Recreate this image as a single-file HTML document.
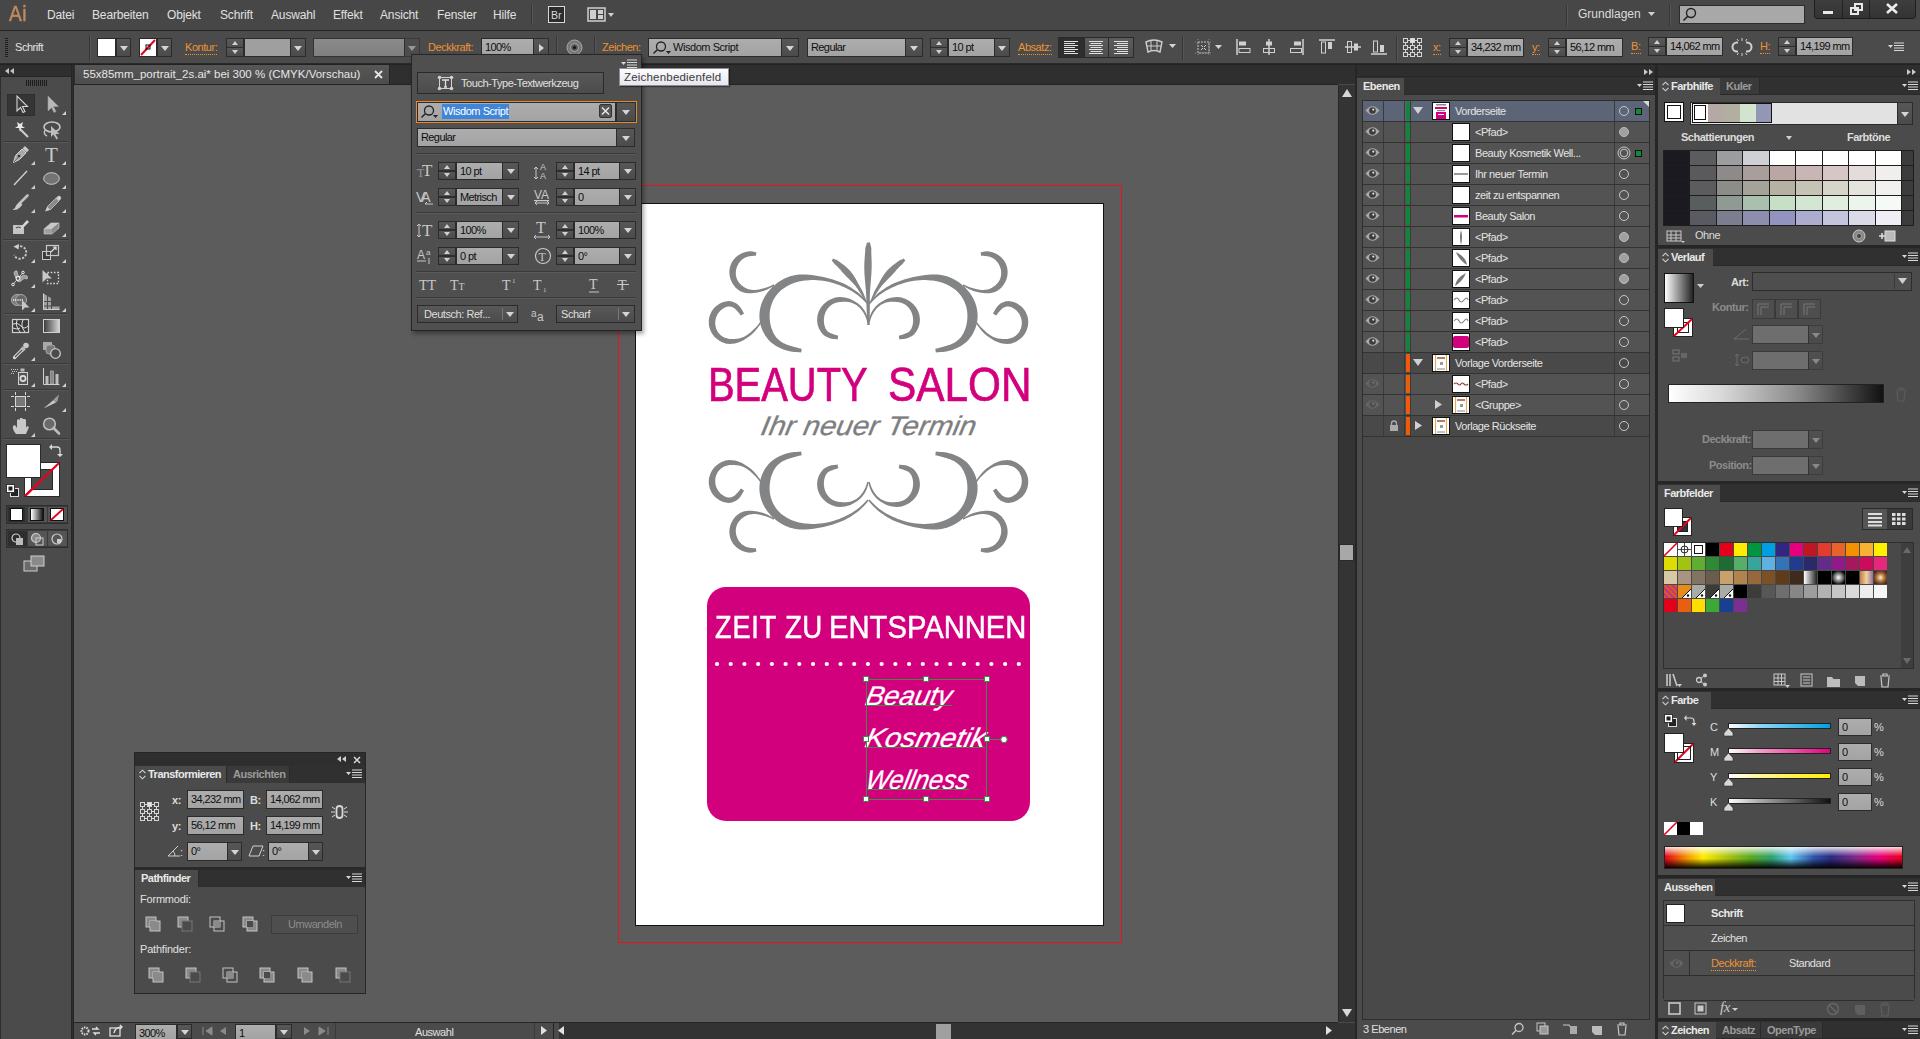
<!DOCTYPE html><html><head><meta charset="utf-8"><style>
*{margin:0;padding:0;box-sizing:border-box}
html,body{width:1920px;height:1039px;overflow:hidden;background:#4a4a4a;font-family:"Liberation Sans",sans-serif;font-size:11px;color:#dcdcdc}
.a{position:absolute}
svg.a{overflow:visible}
.t{position:absolute;white-space:nowrap;line-height:1;letter-spacing:-0.45px}
.or{color:#ee9232}
.ul{border-bottom:1px dotted #ee9232;padding-bottom:1px}
.fld{position:absolute;background:linear-gradient(#adadad,#a3a3a3);border:1px solid #2b2b2b;color:#0e0e0e;font-size:11px;white-space:nowrap;overflow:hidden;line-height:1;letter-spacing:-0.6px}
.dd{position:absolute;background:linear-gradient(#575757,#4b4b4b);border:1px solid #2b2b2b}
.dd:after{content:"";position:absolute;left:50%;top:50%;margin-left:-4px;margin-top:-2px;border-left:4px solid transparent;border-right:4px solid transparent;border-top:5px solid #d4d4d4}
.sp{position:absolute;background:linear-gradient(#595959,#505050 46%,#2e2e2e 46%,#2e2e2e 54%,#575757 54%,#4b4b4b);border:1px solid #2b2b2b}
.sp:before{content:"";position:absolute;left:50%;top:2px;margin-left:-3.5px;border-left:3.5px solid transparent;border-right:3.5px solid transparent;border-bottom:4px solid #d0d0d0}
.sp:after{content:"";position:absolute;left:50%;bottom:2px;margin-left:-3.5px;border-left:3.5px solid transparent;border-right:3.5px solid transparent;border-top:4px solid #d0d0d0}
</style></head><body><div class="a" style="left:0px;top:0px;width:1920px;height:30px;background:#474747"></div>
<div class="a" style="left:0px;top:30px;width:1920px;height:1px;background:#262626"></div>
<div class="t" style="left:9px;top:3px;font-size:22.3px;color:#c08a5e;-webkit-text-stroke:0.5px #c08a5e;letter-spacing:0.5px;transform-origin:0 0;transform:scaleX(0.86)">Ai</div>
<div class="t" style="left:47px;top:9px;font-size:12px;color:#e0e0e0;letter-spacing:-0.15px">Datei</div>
<div class="t" style="left:92px;top:9px;font-size:12px;color:#e0e0e0;letter-spacing:-0.15px">Bearbeiten</div>
<div class="t" style="left:167px;top:9px;font-size:12px;color:#e0e0e0;letter-spacing:-0.15px">Objekt</div>
<div class="t" style="left:220px;top:9px;font-size:12px;color:#e0e0e0;letter-spacing:-0.15px">Schrift</div>
<div class="t" style="left:271px;top:9px;font-size:12px;color:#e0e0e0;letter-spacing:-0.15px">Auswahl</div>
<div class="t" style="left:333px;top:9px;font-size:12px;color:#e0e0e0;letter-spacing:-0.15px">Effekt</div>
<div class="t" style="left:380px;top:9px;font-size:12px;color:#e0e0e0;letter-spacing:-0.15px">Ansicht</div>
<div class="t" style="left:437px;top:9px;font-size:12px;color:#e0e0e0;letter-spacing:-0.15px">Fenster</div>
<div class="t" style="left:493px;top:9px;font-size:12px;color:#e0e0e0;letter-spacing:-0.15px">Hilfe</div>
<div class="a" style="left:531px;top:5px;width:1px;height:20px;background:#363636"></div>
<div class="a" style="left:532px;top:5px;width:1px;height:20px;background:#565656"></div>
<div class="a" style="left:548px;top:6px;width:17px;height:17px;border:1.5px solid #d8d8d8;background:#2c2c2c"></div>
<div class="t" style="left:551px;top:10px;font-size:10.5px;color:#dcdcdc;letter-spacing:0">Br</div>
<svg class="a" style="left:587px;top:6px;" width="28" height="18" viewBox="0 0 28 18"><rect x="1" y="2" width="17" height="13" fill="none" stroke="#cfcfcf" stroke-width="1.5"/><rect x="3" y="4" width="6" height="9" fill="#cfcfcf"/><rect x="11" y="4" width="5" height="4" fill="#cfcfcf"/><rect x="11" y="9" width="5" height="4" fill="#cfcfcf"/><path d="M21 7h6l-3 4z" fill="#cfcfcf"/></svg>
<div class="a" style="left:1566px;top:5px;width:1px;height:21px;background:#363636"></div>
<div class="a" style="left:1567px;top:5px;width:1px;height:21px;background:#565656"></div>
<div class="t" style="left:1578px;top:8px;font-size:12px;color:#dcdcdc;letter-spacing:0">Grundlagen</div>
<svg class="a" style="left:1648px;top:12px;" width="8" height="5" viewBox="0 0 8 5"><path d="M0 0h7l-3.5 4z" fill="#cfcfcf"/></svg>
<div class="a" style="left:1669px;top:5px;width:1px;height:21px;background:#363636"></div>
<div class="a" style="left:1670px;top:5px;width:1px;height:21px;background:#565656"></div>
<div class="a" style="left:1679px;top:5px;width:126px;height:19px;background:#a8a8a8;border:1px solid #2c2c2c"></div>
<svg class="a" style="left:1682px;top:7px;" width="16" height="16" viewBox="0 0 16 16"><circle cx="9" cy="6" r="4.5" fill="none" stroke="#222" stroke-width="1.4"/><path d="M6 9L1.5 13.5" stroke="#222" stroke-width="1.6"/></svg>
<div class="a" style="left:1814px;top:-3px;width:102px;height:22px;background:linear-gradient(#3f3f3f,#333);border:1px solid #1e1e1e;border-radius:3px"></div>
<div class="a" style="left:1842px;top:0px;width:1px;height:18px;background:#222"></div>
<div class="a" style="left:1869px;top:0px;width:1px;height:18px;background:#222"></div>
<div class="a" style="left:1823px;top:11px;width:10px;height:3px;background:#e8e8e8"></div>
<svg class="a" style="left:1850px;top:3px;" width="14" height="12" viewBox="0 0 14 12"><rect x="1" y="5" width="7" height="6" fill="none" stroke="#e8e8e8" stroke-width="2"/><rect x="5" y="1" width="7" height="6" fill="none" stroke="#e8e8e8" stroke-width="2"/></svg>
<svg class="a" style="left:1886px;top:3px;" width="12" height="11" viewBox="0 0 12 11"><path d="M1 1L11 10M11 1L1 10" stroke="#ececec" stroke-width="2.6"/></svg>
<div class="a" style="left:0px;top:31px;width:1920px;height:33px;background:#4b4b4b"></div>
<div class="a" style="left:0px;top:63px;width:1920px;height:1px;background:#2a2a2a"></div>
<div class="a" style="left:5px;top:38px;width:3px;height:1px;background:#1e1e1e"></div>
<div class="a" style="left:5px;top:40px;width:3px;height:1px;background:#1e1e1e"></div>
<div class="a" style="left:5px;top:42px;width:3px;height:1px;background:#1e1e1e"></div>
<div class="a" style="left:5px;top:44px;width:3px;height:1px;background:#1e1e1e"></div>
<div class="a" style="left:5px;top:46px;width:3px;height:1px;background:#1e1e1e"></div>
<div class="a" style="left:5px;top:48px;width:3px;height:1px;background:#1e1e1e"></div>
<div class="a" style="left:5px;top:50px;width:3px;height:1px;background:#1e1e1e"></div>
<div class="a" style="left:5px;top:52px;width:3px;height:1px;background:#1e1e1e"></div>
<div class="a" style="left:5px;top:54px;width:3px;height:1px;background:#1e1e1e"></div>
<div class="a" style="left:5px;top:56px;width:3px;height:1px;background:#1e1e1e"></div>
<div class="t" style="left:15px;top:42px;font-size:11px;color:#e4e4e4">Schrift</div>
<div class="a" style="left:89px;top:36px;width:1px;height:25px;background:#363636"></div>
<div class="a" style="left:90px;top:36px;width:1px;height:25px;background:#565656"></div>
<div class="a" style="left:97px;top:38px;width:19px;height:19px;background:#fff;border:1px solid #2a2a2a"></div>
<div class="dd" style="left:116px;top:38px;width:15px;height:19px;"></div>
<div class="a" style="left:139px;top:38px;width:18px;height:19px;background:#fff;border:1px solid #2a2a2a"></div>
<svg class="a" style="left:140px;top:39px;" width="16" height="17" viewBox="0 0 16 17"><path d="M1 16L15 1" stroke="#e8001c" stroke-width="2"/><rect x="6" y="6" width="4" height="4" fill="none" stroke="#111" stroke-width="1"/></svg>
<div class="dd" style="left:157px;top:38px;width:15px;height:19px;"></div>
<div class="t" style="left:185px;top:42px;color:#ee9232"><span class="ul">Kontur:</span></div>
<div class="sp" style="left:226px;top:38px;width:18px;height:19px;"></div>
<div class="fld" style="left:244px;top:38px;width:47px;height:19px;background:#9f9f9f"><span style="position:absolute;left:3px;top:3px;"></span></div>
<div class="dd" style="left:290px;top:38px;width:16px;height:19px;"></div>
<div class="fld" style="left:313px;top:38px;width:92px;height:19px;background:linear-gradient(#8a8a8a,#7f7f7f);border-color:#333"><span style="position:absolute;left:3px;top:3px;"></span></div>
<div class="dd" style="left:404px;top:38px;width:16px;height:19px;background:#4e4e4e;opacity:.55"></div>
<div class="t" style="left:428px;top:42px;color:#ee9232"><span class="ul">Deckkraft:</span></div>
<div class="fld" style="left:481px;top:38px;width:53px;height:19px;"><span style="position:absolute;left:3px;top:3px;">100%</span></div>
<div class="dd n" style="left:533px;top:38px;width:16px;height:19px"><div style="position:absolute;left:5px;top:5px;border-top:4px solid transparent;border-bottom:4px solid transparent;border-left:5px solid #d4d4d4"></div></div>
<style>.dd.r:after{display:none}</style>
<div class="a" style="left:556px;top:36px;width:1px;height:25px;background:#363636"></div>
<div class="a" style="left:557px;top:36px;width:1px;height:25px;background:#565656"></div>
<svg class="a" style="left:566px;top:39px;" width="17" height="17" viewBox="0 0 17 17"><circle cx="8.5" cy="8.5" r="7.5" fill="#777" stroke="#aaa"/><circle cx="8.5" cy="8.5" r="4" fill="#555" stroke="#bbb" stroke-width=".8"/><circle cx="8.5" cy="8.5" r="1.5" fill="#111"/></svg>
<div class="a" style="left:594px;top:36px;width:1px;height:25px;background:#363636"></div>
<div class="a" style="left:595px;top:36px;width:1px;height:25px;background:#565656"></div>
<div class="t" style="left:602px;top:42px;color:#ee9232"><span class="ul">Zeichen:</span></div>
<div class="fld" style="left:648px;top:38px;width:134px;height:19px;"><span style="position:absolute;left:3px;top:3px;"></span></div>
<svg class="a" style="left:652px;top:40px;" width="22" height="16" viewBox="0 0 22 16"><circle cx="9" cy="6.5" r="4.5" fill="none" stroke="#222" stroke-width="1.3"/><path d="M5.5 9.5L1.5 13.5" stroke="#222" stroke-width="1.5"/><path d="M14 11h5l-2.5 3z" fill="#222"/></svg>
<div class="t" style="left:673px;top:42px;color:#111">Wisdom Script</div>
<div class="dd" style="left:781px;top:38px;width:18px;height:19px;"></div>
<div class="fld" style="left:807px;top:38px;width:99px;height:19px;"><span style="position:absolute;left:3px;top:3px;">Regular</span></div>
<div class="dd" style="left:905px;top:38px;width:18px;height:19px;"></div>
<div class="sp" style="left:930px;top:38px;width:18px;height:19px;"></div>
<div class="fld" style="left:948px;top:38px;width:47px;height:19px;"><span style="position:absolute;left:3px;top:3px;">10 pt</span></div>
<div class="dd" style="left:994px;top:38px;width:16px;height:19px;"></div>
<div class="t" style="left:1018px;top:42px;color:#ee9232"><span class="ul">Absatz:</span></div>
<div class="a" style="left:1058px;top:37px;width:76px;height:21px;background:#3a3a3a;border:1px solid #2a2a2a"></div>
<div class="a" style="left:1059px;top:38px;width:25px;height:19px;background:#2e2e2e"></div>
<div class="a" style="left:1084px;top:38px;width:24px;height:19px;background:linear-gradient(#5c5c5c,#4f4f4f);border-left:1px solid #2a2a2a"></div>
<div class="a" style="left:1108px;top:38px;width:25px;height:19px;background:linear-gradient(#5c5c5c,#4f4f4f);border-left:1px solid #2a2a2a"></div>
<svg class="a" style="left:1064px;top:41px;" width="14" height="14" viewBox="0 0 14 14"><rect x="0" y="0" width="14" height="1" fill="#e0e0e0"/><rect x="0" y="2" width="11" height="1" fill="#e0e0e0"/><rect x="0" y="4" width="14" height="1" fill="#e0e0e0"/><rect x="0" y="6" width="11" height="1" fill="#e0e0e0"/><rect x="0" y="8" width="14" height="1" fill="#e0e0e0"/><rect x="0" y="10" width="11" height="1" fill="#e0e0e0"/><rect x="0" y="12" width="14" height="1" fill="#e0e0e0"/></svg>
<svg class="a" style="left:1089px;top:41px;" width="14" height="14" viewBox="0 0 14 14"><rect x="0.0" y="0" width="14" height="1" fill="#e0e0e0"/><rect x="1.5" y="2" width="11" height="1" fill="#e0e0e0"/><rect x="0.0" y="4" width="14" height="1" fill="#e0e0e0"/><rect x="1.5" y="6" width="11" height="1" fill="#e0e0e0"/><rect x="0.0" y="8" width="14" height="1" fill="#e0e0e0"/><rect x="1.5" y="10" width="11" height="1" fill="#e0e0e0"/><rect x="0.0" y="12" width="14" height="1" fill="#e0e0e0"/></svg>
<svg class="a" style="left:1114px;top:41px;" width="14" height="14" viewBox="0 0 14 14"><rect x="0" y="0" width="14" height="1" fill="#e0e0e0"/><rect x="3" y="2" width="11" height="1" fill="#e0e0e0"/><rect x="0" y="4" width="14" height="1" fill="#e0e0e0"/><rect x="3" y="6" width="11" height="1" fill="#e0e0e0"/><rect x="0" y="8" width="14" height="1" fill="#e0e0e0"/><rect x="3" y="10" width="11" height="1" fill="#e0e0e0"/><rect x="0" y="12" width="14" height="1" fill="#e0e0e0"/></svg>
<svg class="a" style="left:1144px;top:39px;" width="20" height="16" viewBox="0 0 20 16"><path d="M2 3Q10 -1 18 3L16 13Q10 10 4 13Z" fill="none" stroke="#cfcfcf" stroke-width="1.4"/><path d="M7 2v10M13 2v10M3 7h14" stroke="#cfcfcf" stroke-width="1"/></svg>
<svg class="a" style="left:1169px;top:44px;" width="8" height="6" viewBox="0 0 8 6"><path d="M0 0h7l-3.5 4z" fill="#d4d4d4"/></svg>
<div class="a" style="left:1182px;top:36px;width:1px;height:25px;background:#363636"></div>
<div class="a" style="left:1183px;top:36px;width:1px;height:25px;background:#565656"></div>
<svg class="a" style="left:1195px;top:39px;" width="30" height="17" viewBox="0 0 30 17"><rect x="3" y="3" width="11" height="11" fill="none" stroke="#bdbdbd" stroke-dasharray="2 1"/><path d="M3 0v17M14 0v17M0 3h17M0 14h17" stroke="#9a9a9a" stroke-width=".8" stroke-dasharray="1 2"/><path d="M6 6l2 2M11 6l-2 2M6 11l2-2M11 11l-2-2" stroke="#cfcfcf"/><path d="M20 6h7l-3.5 4z" fill="#d4d4d4"/></svg>
<svg class="a" style="left:1236px;top:39px;" width="16" height="17" viewBox="0 0 16 17"><path d="M1 0v16" stroke="#d0d0d0" stroke-width="1.5"/><rect x="3" y="2.5" width="7" height="4" fill="#d0d0d0"/><rect x="3" y="9.5" width="11" height="4" fill="none" stroke="#d0d0d0"/></svg>
<svg class="a" style="left:1262px;top:39px;" width="16" height="17" viewBox="0 0 16 17"><path d="M7 0v16" stroke="#d0d0d0" stroke-width="1.5"/><rect x="4" y="2.5" width="6" height="4" fill="#d0d0d0"/><rect x="1.5" y="9.5" width="11" height="4" fill="none" stroke="#d0d0d0"/></svg>
<svg class="a" style="left:1289px;top:39px;" width="16" height="17" viewBox="0 0 16 17"><path d="M14 0v16" stroke="#d0d0d0" stroke-width="1.5"/><rect x="5" y="2.5" width="7" height="4" fill="#d0d0d0"/><rect x="1.5" y="9.5" width="11" height="4" fill="none" stroke="#d0d0d0"/></svg>
<svg class="a" style="left:1319px;top:39px;" width="16" height="17" viewBox="0 0 16 17"><path d="M0 1h16" stroke="#d0d0d0" stroke-width="1.5"/><rect x="2.5" y="3" width="4" height="11" fill="none" stroke="#d0d0d0"/><rect x="9" y="3" width="4" height="7" fill="#d0d0d0"/></svg>
<svg class="a" style="left:1345px;top:39px;" width="16" height="17" viewBox="0 0 16 17"><path d="M0 8h16" stroke="#d0d0d0" stroke-width="1.5"/><rect x="2.5" y="2.5" width="4" height="11" fill="none" stroke="#d0d0d0"/><rect x="9" y="4.5" width="4" height="7" fill="#d0d0d0"/></svg>
<svg class="a" style="left:1371px;top:39px;" width="16" height="17" viewBox="0 0 16 17"><path d="M0 15h16" stroke="#d0d0d0" stroke-width="1.5"/><rect x="2.5" y="2" width="4" height="11" fill="none" stroke="#d0d0d0"/><rect x="9" y="6" width="4" height="7" fill="#d0d0d0"/></svg>
<div class="a" style="left:1396px;top:36px;width:1px;height:25px;background:#363636"></div>
<div class="a" style="left:1397px;top:36px;width:1px;height:25px;background:#565656"></div>
<svg class="a" style="left:1402px;top:37px;" width="22" height="22" viewBox="0 0 22 22"><rect x="1.5" y="1.5" width="4" height="4" fill="none" stroke="#d4d4d4"/><rect x="8.5" y="1.5" width="4" height="4" fill="#e0e0e0" stroke="#d4d4d4"/><rect x="15.5" y="1.5" width="4" height="4" fill="none" stroke="#d4d4d4"/><rect x="1.5" y="8.5" width="4" height="4" fill="none" stroke="#d4d4d4"/><rect x="8.5" y="8.5" width="4" height="4" fill="none" stroke="#d4d4d4"/><rect x="15.5" y="8.5" width="4" height="4" fill="none" stroke="#d4d4d4"/><rect x="1.5" y="15.5" width="4" height="4" fill="none" stroke="#d4d4d4"/><rect x="8.5" y="15.5" width="4" height="4" fill="none" stroke="#d4d4d4"/><rect x="15.5" y="15.5" width="4" height="4" fill="none" stroke="#d4d4d4"/><path d="M5.5 3.5h3M12.5 3.5h3M5.5 10.5h3M12.5 10.5h3M5.5 17.5h3M12.5 17.5h3M3.5 5.5v3M3.5 12.5v3M10.5 5.5v3M10.5 12.5v3M17.5 5.5v3M17.5 12.5v3" stroke="#d4d4d4"/></svg>
<div class="t" style="left:1433px;top:42px;color:#ee9232"><span class="ul">x:</span></div>
<div class="sp" style="left:1449px;top:38px;width:18px;height:19px;"></div>
<div class="fld" style="left:1467px;top:38px;width:57px;height:19px;"><span style="position:absolute;left:3px;top:3px;">34,232 mm</span></div>
<div class="t" style="left:1532px;top:42px;color:#ee9232"><span class="ul">y:</span></div>
<div class="sp" style="left:1548px;top:38px;width:18px;height:19px;"></div>
<div class="fld" style="left:1566px;top:38px;width:57px;height:19px;"><span style="position:absolute;left:3px;top:3px;">56,12 mm</span></div>
<div class="t" style="left:1631px;top:41px;color:#ee9232"><span class="ul">B:</span></div>
<div class="sp" style="left:1648px;top:37px;width:18px;height:19px;"></div>
<div class="fld" style="left:1666px;top:37px;width:57px;height:19px;"><span style="position:absolute;left:3px;top:3px;">14,062 mm</span></div>
<svg class="a" style="left:1732px;top:38px;" width="20" height="18" viewBox="0 0 20 18"><path d="M6 4.5h-1a4.5 4.5 0 0 0 0 9h1M14 4.5h1a4.5 4.5 0 0 1 0 9h-1" fill="none" stroke="#cfcfcf" stroke-width="2"/><path d="M10 0v3M10 15v3M5 1l1.5 2M15 1l-1.5 2M5 17l1.5-2M15 17l-1.5-2" stroke="#cfcfcf"/></svg>
<div class="t" style="left:1760px;top:41px;color:#ee9232"><span class="ul">H:</span></div>
<div class="sp" style="left:1778px;top:37px;width:18px;height:19px;"></div>
<div class="fld" style="left:1796px;top:37px;width:57px;height:19px;"><span style="position:absolute;left:3px;top:3px;">14,199 mm</span></div>
<svg class="a" style="left:1888px;top:42px;" width="16" height="10" viewBox="0 0 16 10"><path d="M0 3h5l-2.5 3z" fill="#d8d8d8"/><path d="M6 1h10M6 3.5h10M6 6h10M6 8.5h10" stroke="#d8d8d8" stroke-width="1.2"/></svg>
<div class="a" style="left:0px;top:64px;width:1920px;height:1px;background:#222"></div>
<div class="a" style="left:0px;top:65px;width:71px;height:974px;background:#4b4b4b"></div>
<div class="a" style="left:0px;top:65px;width:1px;height:974px;background:#2e2e2e"></div>
<div class="a" style="left:0px;top:65px;width:72px;height:12px;background:#2f2f2f"></div>
<div class="a" style="left:0px;top:76px;width:72px;height:1px;background:#262626"></div>
<svg class="a" style="left:5px;top:68px;" width="10" height="7" viewBox="0 0 10 7"><path d="M4 0v6L0 3zM9 0v6L5 3z" fill="#c4c4c4"/></svg>
<div class="a" style="left:71px;top:65px;width:3px;height:974px;background:#262626"></div>
<div class="a" style="left:72px;top:65px;width:1px;height:974px;background:#2e2e2e"></div>
<div class="a" style="left:26px;top:80px;width:1px;height:6px;background:#1c1c1c"></div>
<div class="a" style="left:28px;top:80px;width:1px;height:6px;background:#1c1c1c"></div>
<div class="a" style="left:30px;top:80px;width:1px;height:6px;background:#1c1c1c"></div>
<div class="a" style="left:32px;top:80px;width:1px;height:6px;background:#1c1c1c"></div>
<div class="a" style="left:34px;top:80px;width:1px;height:6px;background:#1c1c1c"></div>
<div class="a" style="left:36px;top:80px;width:1px;height:6px;background:#1c1c1c"></div>
<div class="a" style="left:38px;top:80px;width:1px;height:6px;background:#1c1c1c"></div>
<div class="a" style="left:40px;top:80px;width:1px;height:6px;background:#1c1c1c"></div>
<div class="a" style="left:42px;top:80px;width:1px;height:6px;background:#1c1c1c"></div>
<div class="a" style="left:44px;top:80px;width:1px;height:6px;background:#1c1c1c"></div>
<div class="a" style="left:46px;top:80px;width:1px;height:6px;background:#1c1c1c"></div>
<div class="a" style="left:7px;top:94px;width:28px;height:22px;background:#353535;border:1px solid #2e2e2e"></div>
<svg class="a" style="left:10px;top:94px;" width="21" height="21" viewBox="0 0 21 21"><path d="M7 2v15l3.5-3.5 2.5 5 2-1-2.5-5h5z" fill="#3a3a3a" stroke="#d4d4d4" stroke-width="1.1"/></svg>
<svg class="a" style="left:41px;top:94px;" width="21" height="21" viewBox="0 0 21 21"><path d="M7 2v15l3.5-3.5 2.5 5 2-1-2.5-5h5z" fill="#b8b8b8" stroke="#999" stroke-width=".6"/></svg>
<svg class="a" style="left:10px;top:119px;" width="21" height="21" viewBox="0 0 21 21"><path d="M10 10l8 8" stroke="#d0d0d0" stroke-width="2"/><path d="M7 3l1 4-3 2 4 0 1 4 1-4 4 0-3-2 1-4-3 2z" fill="#e8e8e8"/></svg>
<svg class="a" style="left:41px;top:119px;" width="21" height="21" viewBox="0 0 21 21"><ellipse cx="11" cy="8" rx="8" ry="5" fill="none" stroke="#c8c8c8" stroke-width="1.6"/><path d="M4 11q-2 4 2 6" fill="none" stroke="#c8c8c8" stroke-width="1.4"/><path d="M10 7v11l2.5-2.5 3 5 1.5-1-2.5-4.5h4z" fill="#bdbdbd"/></svg>
<svg class="a" style="left:10px;top:144px;" width="21" height="21" viewBox="0 0 21 21"><path d="M3.5 18.5l2-7 6.5-6.5 4 4-6.5 6.5z" fill="#a8a8a8" stroke="#d8d8d8" stroke-width=".9"/><circle cx="9" cy="12" r="1.3" fill="#333"/><path d="M4 18l4.5-5" stroke="#555" stroke-width=".8"/><path d="M12.5 4.5l2.5-2.5 4 4-2.5 2.5z" fill="#c8c8c8"/></svg>
<svg class="a" style="left:41px;top:144px;" width="21" height="21" viewBox="0 0 21 21"><text x="10.5" y="18" text-anchor="middle" font-family="Liberation Serif" font-size="21" fill="#c8c8c8">T</text></svg>
<svg class="a" style="left:10px;top:168px;" width="21" height="21" viewBox="0 0 21 21"><path d="M4 17L17 3" stroke="#cfcfcf" stroke-width="1.4"/></svg>
<svg class="a" style="left:41px;top:168px;" width="21" height="21" viewBox="0 0 21 21"><ellipse cx="10.5" cy="10.5" rx="7.8" ry="5.8" fill="#747474" stroke="#cfcfcf" stroke-width="1"/></svg>
<svg class="a" style="left:10px;top:192px;" width="21" height="21" viewBox="0 0 21 21"><path d="M17.5 3.5L11 10" stroke="#c0c0c0" stroke-width="2.6" stroke-linecap="round"/><path d="M9.5 9.5l3 3-2.5 3q-3 3-7.5 2.5q3-1.5 3.5-4.5z" fill="#c8c8c8"/></svg>
<svg class="a" style="left:41px;top:192px;" width="21" height="21" viewBox="0 0 21 21"><path d="M6 15l9-9 3 3-9 9z" fill="#8a8a8a" stroke="#c8c8c8" stroke-width=".8"/><path d="M15 6l1.5-1.5a2 2 0 0 1 3 3L18 9z" fill="#d0d0d0"/><path d="M6 15l3 3-5 1.5z" fill="#cfcfcf"/></svg>
<svg class="a" style="left:10px;top:216px;" width="21" height="21" viewBox="0 0 21 21"><path d="M3 9h9l2 3v6H3z" fill="#c4c4c4"/><path d="M9 13l8-9 2 2-8 8z" fill="#d8d8d8"/><path d="M6 12q2-2 5 0" stroke="#444" fill="none"/></svg>
<svg class="a" style="left:41px;top:216px;" width="21" height="21" viewBox="0 0 21 21"><path d="M3 13l7-6h8l-7 6z" fill="#c8c8c8"/><path d="M3 13h8v5H3z" fill="#a0a0a0"/><path d="M11 13l7-6v5l-7 6z" fill="#8c8c8c"/><path d="M3 13l7-6h8v5l-7 6H3z" fill="none" stroke="#d0d0d0" stroke-width=".6"/></svg>
<svg class="a" style="left:10px;top:242px;" width="21" height="21" viewBox="0 0 21 21"><path d="M6.5 5.2A6.3 6.3 0 1 1 4.2 13" fill="none" stroke="#c8c8c8" stroke-width="1.9" stroke-dasharray="2.2 1.5"/><path d="M3.5 4.5l5.5-2.5-0.5 5.5z" fill="#d0d0d0"/></svg>
<svg class="a" style="left:41px;top:242px;" width="21" height="21" viewBox="0 0 21 21"><rect x="1.5" y="9.5" width="8" height="8" fill="#3a3a3a" stroke="#c8c8c8"/><rect x="5.5" y="3.5" width="12" height="10" fill="none" stroke="#c8c8c8" stroke-width="1.2"/><path d="M10 10l5-5M12 5h3v3" stroke="#e0e0e0" fill="none" stroke-width="1.2"/></svg>
<svg class="a" style="left:10px;top:267px;" width="21" height="21" viewBox="0 0 21 21"><path d="M4 6q1-3 3-2q0 4 3 6q4-3 7-1q1 1 0 3q-3-2-5 1q-2 3-5 1z" fill="#9a9a9a" stroke="#c8c8c8" stroke-width=".8"/><path d="M3 17.5l10-12" stroke="#ddd" stroke-width=".8"/><circle cx="8" cy="11.5" r="1.9" fill="#555" stroke="#eee" stroke-width="1.1"/><circle cx="3" cy="17.5" r="1.3" fill="#555" stroke="#eee"/><circle cx="13" cy="5.5" r="1.3" fill="#555" stroke="#eee"/></svg>
<svg class="a" style="left:41px;top:267px;" width="21" height="21" viewBox="0 0 21 21"><rect x="6.5" y="5.5" width="11" height="11" fill="none" stroke="#d8d8d8" stroke-dasharray="1.6 1.6" stroke-width="1.3"/><path d="M1.5 3v12.5l4-4 5.5 0z" fill="#c8c8c8"/></svg>
<svg class="a" style="left:10px;top:291px;" width="21" height="21" viewBox="0 0 21 21"><circle cx="7" cy="9" r="5.5" fill="#7a7a7a" stroke="#aaa"/><circle cx="11" cy="9" r="5.5" fill="#666" stroke="#aaa"/><path d="M3 9h10" stroke="#f0f0f0" stroke-dasharray="1.2 1" stroke-width="1.4"/><path d="M12 9v10.5l3-3 4.5 0z" fill="#c8c8c8"/></svg>
<svg class="a" style="left:41px;top:291px;" width="21" height="21" viewBox="0 0 21 21"><path d="M2.5 2.5v16h16v-3.5h-8V7.5z" fill="#a0a0a0"/><path d="M6.5 4.5v14M10.5 7.5v11M2.5 10.5h16M2.5 15h16" stroke="#4b4b4b" stroke-width="1"/><path d="M2.5 2.5v16h16" fill="none" stroke="#d0d0d0" stroke-width="1"/></svg>
<svg class="a" style="left:10px;top:316px;" width="21" height="21" viewBox="0 0 21 21"><rect x="2.5" y="3.5" width="16" height="13" fill="#3a3a3a" stroke="#d0d0d0" stroke-width="1.2"/><path d="M3 8q5-2 8 2t7 0M7 4q-2 6 3 12M13 4q-3 6 2 12M3 12q4 2 7 0" fill="none" stroke="#e0e0e0"/></svg>
<svg class="a" style="left:41px;top:316px;" width="21" height="21" viewBox="0 0 21 21"><defs><linearGradient id="g1"><stop offset="0" stop-color="#3a3a3a"/><stop offset="1" stop-color="#d8d8d8"/></linearGradient></defs><rect x="2.5" y="3.5" width="16" height="13" fill="url(#g1)" stroke="#cfcfcf"/></svg>
<svg class="a" style="left:10px;top:340px;" width="21" height="21" viewBox="0 0 21 21"><path d="M4.5 17.5l8.5-8.5" stroke="#ddd" stroke-width="3.2" stroke-linecap="round"/><path d="M5 17l8-8" stroke="#4b4b4b" stroke-width="1.1"/><path d="M11.5 7.5l3 3" stroke="#b8b8b8" stroke-width="3.5"/><circle cx="16" cy="5.5" r="2.8" fill="#c8c8c8"/></svg>
<svg class="a" style="left:41px;top:340px;" width="21" height="21" viewBox="0 0 21 21"><rect x="2" y="2" width="9" height="8" fill="#a8a8a8"/><rect x="5" y="5" width="9" height="9" rx="3" fill="#7a7a7a" stroke="#aaa"/><circle cx="14.5" cy="13.5" r="4.8" fill="#4b4b4b" stroke="#c8c8c8" stroke-width="1.3"/></svg>
<svg class="a" style="left:10px;top:366px;" width="21" height="21" viewBox="0 0 21 21"><path d="M1 3.5h1M3 3.5h1M5 3.5h1M7 3.5h1M2 5.5h1M4 5.5h1M6 5.5h1M1 7.5h1M3 7.5h1" stroke="#ccc"/><rect x="10.5" y="2.5" width="4" height="3" fill="#bbb"/><rect x="8.5" y="6.5" width="9" height="12" fill="#555" stroke="#cfcfcf"/><circle cx="13" cy="12.5" r="2.6" fill="none" stroke="#ddd" stroke-width="1.7"/></svg>
<svg class="a" style="left:41px;top:366px;" width="21" height="21" viewBox="0 0 21 21"><path d="M2.5 2v16.5h16" fill="none" stroke="#cfcfcf"/><rect x="4.5" y="10" width="3" height="8" fill="#bdbdbd"/><rect x="9.5" y="5" width="3" height="13" fill="#888" stroke="#bbb" stroke-width=".6"/><rect x="14.5" y="8" width="3" height="10" fill="#bdbdbd"/></svg>
<svg class="a" style="left:10px;top:391px;" width="21" height="21" viewBox="0 0 21 21"><rect x="5.5" y="5.5" width="10" height="10" fill="#777" stroke="#d8d8d8"/><path d="M5.5 1v3M15.5 1v3M5.5 17v3M15.5 17v3M1 5.5h3M1 15.5h3M17 5.5h3M17 15.5h3" stroke="#d8d8d8"/></svg>
<svg class="a" style="left:41px;top:391px;" width="21" height="21" viewBox="0 0 21 21"><path d="M2.5 17.5l10-8.5 2.5 2.5z" fill="#c8c8c8"/><path d="M12.5 8.5l5.5-5-1.5 6.5-1.5 1.5z" fill="#9a9a9a"/></svg>
<svg class="a" style="left:10px;top:416px;" width="21" height="21" viewBox="0 0 21 21"><path d="M6 18q-4-5-3-8l2-1 2 3V4l2-1 1 1v6V2l2 0 1 1v7V3l2 0 1 1v8l1-2 2 1-3 7z" fill="#c8c8c8"/></svg>
<svg class="a" style="left:41px;top:416px;" width="21" height="21" viewBox="0 0 21 21"><circle cx="8.5" cy="8" r="5.8" fill="#6a6a6a" stroke="#bdbdbd" stroke-width="1.6"/><path d="M12.5 12l5.5 5.5" stroke="#bdbdbd" stroke-width="2.6" stroke-linecap="round"/></svg>
<svg class="a" style="left:62px;top:111px;" width="5" height="5" viewBox="0 0 5 5"><path d="M4 0v4H0z" fill="#d0d0d0"/></svg>
<svg class="a" style="left:31px;top:161px;" width="5" height="5" viewBox="0 0 5 5"><path d="M4 0v4H0z" fill="#d0d0d0"/></svg>
<svg class="a" style="left:62px;top:161px;" width="5" height="5" viewBox="0 0 5 5"><path d="M4 0v4H0z" fill="#d0d0d0"/></svg>
<svg class="a" style="left:31px;top:185px;" width="5" height="5" viewBox="0 0 5 5"><path d="M4 0v4H0z" fill="#d0d0d0"/></svg>
<svg class="a" style="left:62px;top:185px;" width="5" height="5" viewBox="0 0 5 5"><path d="M4 0v4H0z" fill="#d0d0d0"/></svg>
<svg class="a" style="left:31px;top:209px;" width="5" height="5" viewBox="0 0 5 5"><path d="M4 0v4H0z" fill="#d0d0d0"/></svg>
<svg class="a" style="left:62px;top:209px;" width="5" height="5" viewBox="0 0 5 5"><path d="M4 0v4H0z" fill="#d0d0d0"/></svg>
<svg class="a" style="left:62px;top:233px;" width="5" height="5" viewBox="0 0 5 5"><path d="M4 0v4H0z" fill="#d0d0d0"/></svg>
<svg class="a" style="left:31px;top:259px;" width="5" height="5" viewBox="0 0 5 5"><path d="M4 0v4H0z" fill="#d0d0d0"/></svg>
<svg class="a" style="left:62px;top:259px;" width="5" height="5" viewBox="0 0 5 5"><path d="M4 0v4H0z" fill="#d0d0d0"/></svg>
<svg class="a" style="left:31px;top:284px;" width="5" height="5" viewBox="0 0 5 5"><path d="M4 0v4H0z" fill="#d0d0d0"/></svg>
<svg class="a" style="left:31px;top:308px;" width="5" height="5" viewBox="0 0 5 5"><path d="M4 0v4H0z" fill="#d0d0d0"/></svg>
<svg class="a" style="left:62px;top:308px;" width="5" height="5" viewBox="0 0 5 5"><path d="M4 0v4H0z" fill="#d0d0d0"/></svg>
<svg class="a" style="left:31px;top:357px;" width="5" height="5" viewBox="0 0 5 5"><path d="M4 0v4H0z" fill="#d0d0d0"/></svg>
<svg class="a" style="left:31px;top:383px;" width="5" height="5" viewBox="0 0 5 5"><path d="M4 0v4H0z" fill="#d0d0d0"/></svg>
<svg class="a" style="left:62px;top:383px;" width="5" height="5" viewBox="0 0 5 5"><path d="M4 0v4H0z" fill="#d0d0d0"/></svg>
<svg class="a" style="left:62px;top:408px;" width="5" height="5" viewBox="0 0 5 5"><path d="M4 0v4H0z" fill="#d0d0d0"/></svg>
<svg class="a" style="left:31px;top:433px;" width="5" height="5" viewBox="0 0 5 5"><path d="M4 0v4H0z" fill="#d0d0d0"/></svg>
<div class="a" style="left:3px;top:141px;width:66px;height:1px;background:#3a3a3a"></div>
<div class="a" style="left:3px;top:142px;width:66px;height:1px;background:#575757"></div>
<div class="a" style="left:3px;top:239px;width:66px;height:1px;background:#3a3a3a"></div>
<div class="a" style="left:3px;top:240px;width:66px;height:1px;background:#575757"></div>
<div class="a" style="left:3px;top:313px;width:66px;height:1px;background:#3a3a3a"></div>
<div class="a" style="left:3px;top:314px;width:66px;height:1px;background:#575757"></div>
<div class="a" style="left:3px;top:363px;width:66px;height:1px;background:#3a3a3a"></div>
<div class="a" style="left:3px;top:364px;width:66px;height:1px;background:#575757"></div>
<div class="a" style="left:3px;top:389px;width:66px;height:1px;background:#3a3a3a"></div>
<div class="a" style="left:3px;top:390px;width:66px;height:1px;background:#575757"></div>
<div class="a" style="left:3px;top:438px;width:66px;height:1px;background:#3a3a3a"></div>
<div class="a" style="left:3px;top:439px;width:66px;height:1px;background:#575757"></div>
<div class="a" style="left:6px;top:444px;width:35px;height:34px;background:#fff;border:1px solid #2a2a2a"></div>
<div class="a" style="left:24px;top:462px;width:36px;height:35px;background:#fff;border:1px solid #2a2a2a"></div>
<div class="a" style="left:31px;top:469px;width:22px;height:21px;background:#4b4b4b;border:1px solid #2a2a2a"></div>
<div class="a" style="left:6px;top:444px;width:35px;height:34px;background:#fff;border:1px solid #2a2a2a"></div>
<div class="a" style="left:24px;top:478px;width:17px;height:0px;"></div>
<svg class="a" style="left:24px;top:462px;" width="36" height="35" viewBox="0 0 36 35"><path d="M1 34L35 1" stroke="#e8001c" stroke-width="2.2"/></svg>
<div class="a" style="left:6px;top:444px;width:35px;height:34px;background:#fff;border:1px solid #2a2a2a"></div>
<svg class="a" style="left:24px;top:462px;" width="36" height="35" viewBox="0 0 36 35"><path d="M1 34L17 18.5" stroke="#e8001c" stroke-width="2.2"/></svg>
<svg class="a" style="left:49px;top:443px;" width="14" height="14" viewBox="0 0 14 14"><path d="M2 4h6a3 3 0 0 1 3 3v5" fill="none" stroke="#d8d8d8" stroke-width="1.3"/><path d="M0 4l3-3v6zM11 14l-3-3h6z" fill="#d8d8d8"/></svg>
<svg class="a" style="left:6px;top:484px;" width="13" height="13" viewBox="0 0 13 13"><rect x="4.5" y="4.5" width="8" height="8" fill="#222" stroke="#ddd"/><rect x=".5" y=".5" width="8" height="8" fill="#fff" stroke="#333"/><rect x="2.5" y="2.5" width="4" height="4" fill="#222"/></svg>
<div class="a" style="left:6px;top:505px;width:62px;height:19px;background:#3b3b3b;border:1px solid #2e2e2e"></div>
<div class="a" style="left:8px;top:507px;width:17px;height:15px;background:#2e2e2e"></div>
<div class="a" style="left:10px;top:508px;width:13px;height:13px;background:#fff;border:1px solid #111"></div>
<div class="a" style="left:28px;top:507px;width:19px;height:15px;background:#555"></div>
<div class="a" style="left:30px;top:508px;width:14px;height:13px;background:linear-gradient(90deg,#fff,#111);border:1px solid #111"></div>
<div class="a" style="left:48px;top:507px;width:19px;height:15px;background:#555"></div>
<div class="a" style="left:50px;top:508px;width:14px;height:13px;background:#fff;border:1px solid #111"></div>
<svg class="a" style="left:51px;top:509px;" width="12" height="11" viewBox="0 0 12 11"><path d="M0 11L12 0" stroke="#e8001c" stroke-width="1.8"/></svg>
<div class="a" style="left:6px;top:529px;width:62px;height:19px;background:#3b3b3b;border:1px solid #2e2e2e"></div>
<div class="a" style="left:8px;top:531px;width:19px;height:15px;background:#2e2e2e"></div>
<div class="a" style="left:28px;top:531px;width:19px;height:15px;background:#555"></div>
<div class="a" style="left:48px;top:531px;width:19px;height:15px;background:#555"></div>
<svg class="a" style="left:10px;top:532px;" width="16" height="14" viewBox="0 0 16 14"><circle cx="6" cy="6" r="4" fill="none" stroke="#ccc" stroke-width="1.2"/><rect x="6" y="6" width="7" height="7" fill="#bbb"/></svg>
<svg class="a" style="left:30px;top:532px;" width="16" height="14" viewBox="0 0 16 14"><circle cx="6" cy="6" r="4.5" fill="#888" stroke="#ccc" stroke-width="1.2"/><rect x="6" y="6" width="7" height="7" fill="none" stroke="#ccc"/></svg>
<svg class="a" style="left:50px;top:532px;" width="16" height="14" viewBox="0 0 16 14"><circle cx="7" cy="7" r="5" fill="none" stroke="#ccc" stroke-width="1.2"/><rect x="7" y="7" width="4" height="4" fill="#ccc"/></svg>
<svg class="a" style="left:23px;top:555px;" width="23" height="17" viewBox="0 0 23 17"><rect x="1" y="6" width="13" height="10" fill="#6a6a6a" stroke="#cfcfcf"/><rect x="8" y="1" width="13" height="10" fill="#8a8a8a" stroke="#cfcfcf"/></svg>
<div class="a" style="left:74px;top:65px;width:1282px;height:19px;background:#2f2f2f"></div>
<div class="a" style="left:74px;top:84px;width:1264px;height:1px;background:#222"></div>
<div class="a" style="left:75px;top:65px;width:314px;height:19px;background:linear-gradient(#565656,#4d4d4d)"></div>
<div class="a" style="left:389px;top:65px;width:1px;height:19px;background:#242424"></div>
<div class="t" style="left:83px;top:69px;font-size:11.5px;color:#e6e6e6;letter-spacing:0">55x85mm_portrait_2s.ai* bei 300 % (CMYK/Vorschau)</div>
<svg class="a" style="left:374px;top:70px;" width="9" height="9" viewBox="0 0 9 9"><path d="M1 1l7 7M8 1L1 8" stroke="#e4e4e4" stroke-width="1.8"/></svg>
<div class="a" style="left:74px;top:85px;width:1264px;height:937px;background:#5c5c5c"></div>
<div class="a" style="left:1338px;top:85px;width:1px;height:937px;background:#262626"></div>
<div class="a" style="left:1339px;top:85px;width:16px;height:937px;background:#343434"></div>
<div class="a" style="left:1355px;top:65px;width:2px;height:974px;background:#262626"></div>
<svg class="a" style="left:1341px;top:88px;" width="12" height="10" viewBox="0 0 12 10"><path d="M1 9h10L6 1z" fill="#d8d8d8"/></svg>
<div class="a" style="left:1339px;top:544px;width:15px;height:17px;background:#a8a8a8;border:1px solid #2a2a2a"></div>
<svg class="a" style="left:1341px;top:1008px;" width="12" height="10" viewBox="0 0 12 10"><path d="M1 1h10L6 9z" fill="#d8d8d8"/></svg>
<div class="a" style="left:74px;top:1022px;width:1264px;height:1px;background:#262626"></div>
<div class="a" style="left:74px;top:1023px;width:1281px;height:16px;background:#333"></div>
<div class="a" style="left:74px;top:1023px;width:485px;height:16px;background:#4b4b4b"></div>
<svg class="a" style="left:80px;top:1025px;" width="22" height="12" viewBox="0 0 22 12"><circle cx="5" cy="6" r="3.5" fill="none" stroke="#ddd" stroke-width="2" stroke-dasharray="1.5 1"/><path d="M12 4h6l-2-2M20 8h-6l2 2" stroke="#ddd" fill="none" stroke-width="1.3"/></svg>
<svg class="a" style="left:109px;top:1024px;" width="16" height="13" viewBox="0 0 16 13"><rect x="1" y="4" width="10" height="8" fill="none" stroke="#ddd" stroke-width="1.3"/><path d="M5 9q1-6 8-6M11 1l2 2-2 2" fill="none" stroke="#ddd" stroke-width="1.4"/></svg>
<div class="fld" style="left:135px;top:1024px;width:42px;height:15px;border-bottom:none"><span style="position:absolute;left:3px;top:1px;top:3px">300%</span></div>
<div class="dd" style="left:177px;top:1024px;width:15px;height:15px;"></div>
<svg class="a" style="left:202px;top:1027px;" width="12" height="9" viewBox="0 0 12 9"><path d="M1 0v8M10 0v8L4 4z" fill="#8a8a8a" stroke="#8a8a8a"/></svg>
<svg class="a" style="left:219px;top:1027px;" width="8" height="9" viewBox="0 0 8 9"><path d="M7 0v8L1 4z" fill="#8a8a8a"/></svg>
<div class="fld" style="left:235px;top:1024px;width:41px;height:15px;border-bottom:none"><span style="position:absolute;left:3px;top:1px;top:3px">1</span></div>
<div class="dd" style="left:276px;top:1024px;width:16px;height:15px;"></div>
<svg class="a" style="left:303px;top:1027px;" width="8" height="9" viewBox="0 0 8 9"><path d="M1 0v8L7 4z" fill="#8a8a8a"/></svg>
<svg class="a" style="left:318px;top:1027px;" width="12" height="9" viewBox="0 0 12 9"><path d="M1 0v8L7 4zM10 0v8" fill="#8a8a8a" stroke="#8a8a8a"/></svg>
<div class="a" style="left:335px;top:1023px;width:1px;height:16px;background:#3a3a3a"></div>
<div class="t" style="left:415px;top:1027px;font-size:11px;color:#e0e0e0">Auswahl</div>
<div class="a" style="left:534px;top:1023px;width:1px;height:16px;background:#3a3a3a"></div>
<svg class="a" style="left:540px;top:1026px;" width="8" height="10" viewBox="0 0 8 10"><path d="M1 0v9l6-4.5z" fill="#e0e0e0"/></svg>
<div class="a" style="left:553px;top:1023px;width:1px;height:16px;background:#222"></div>
<svg class="a" style="left:557px;top:1026px;" width="8" height="10" viewBox="0 0 8 10"><path d="M7 0v9L1 4.5z" fill="#e0e0e0"/></svg>
<div class="a" style="left:936px;top:1024px;width:15px;height:15px;background:#a0a0a0"></div>
<svg class="a" style="left:1325px;top:1026px;" width="8" height="10" viewBox="0 0 8 10"><path d="M1 0v9l6-4.5z" fill="#e0e0e0"/></svg>
<div class="a" style="left:618px;top:185px;width:504px;height:758px;border:1px solid #e8141c"></div>
<div class="a" style="left:635px;top:203px;width:469px;height:723px;background:#fff;border:1px solid #111"></div>
<svg class="a" style="left:0;top:0" width="1920" height="1039" viewBox="0 0 1920 1039"><g fill="#838486"><path d="M756.47,252.51 755.56,252.27 754.61,252.03 753.65,251.79 752.68,251.57 751.68,251.41 750.68,251.31 749.67,251.30 748.67,251.39 747.67,251.54 746.68,251.73 745.70,251.97 744.73,252.24 743.76,252.55 742.81,252.91 741.88,253.30 740.96,253.73 740.05,254.21 739.17,254.73 738.31,255.29 737.48,255.89 736.67,256.53 735.89,257.21 735.15,257.93 734.44,258.68 733.77,259.48 733.14,260.31 732.55,261.17 732.01,262.06 731.52,262.98 731.07,263.93 730.68,264.90 730.34,265.89 730.05,266.89 729.81,267.91 729.63,268.94 729.49,269.98 729.41,271.02 729.38,272.06 729.40,273.10 729.48,274.14 729.60,275.17 729.77,276.20 729.99,277.21 730.26,278.21 730.57,279.20 730.93,280.17 731.33,281.12 731.78,282.05 732.26,282.96 732.79,283.84 733.35,284.71 733.95,285.54 734.58,286.35 735.25,287.13 735.95,287.88 736.70,288.58 737.49,289.24 738.31,289.85 739.17,290.41 740.05,290.92 740.96,291.38 741.89,291.78 742.84,292.14 743.80,292.44 744.78,292.69 745.76,292.90 746.74,293.05 747.73,293.16 748.71,293.22 749.74,293.25 751.67,293.15 753.58,293.01 755.53,292.79 757.52,292.50 759.53,292.12 761.58,291.59 763.64,290.91 765.72,290.09 767.83,289.14 769.97,288.08 772.15,286.93 774.38,285.71 773.62,284.29 771.39,285.45 769.20,286.43 767.04,287.25 764.94,287.94 762.89,288.52 760.90,289.01 758.97,289.41 757.09,289.73 755.26,289.92 753.47,289.95 751.72,289.84 749.96,289.61 749.22,289.44 748.45,289.22 747.69,288.96 746.95,288.67 746.23,288.35 745.53,288.00 744.84,287.62 744.18,287.22 743.54,286.79 742.92,286.34 742.31,285.87 741.73,285.38 741.16,284.88 740.61,284.35 740.08,283.82 739.57,283.26 739.09,282.69 738.63,282.09 738.20,281.47 737.81,280.82 737.46,280.16 737.13,279.48 736.84,278.79 736.59,278.09 736.37,277.37 736.19,276.64 736.05,275.91 735.93,275.18 735.86,274.44 735.81,273.70 735.81,272.96 735.83,272.22 735.88,271.48 735.97,270.75 736.09,270.02 736.24,269.30 736.42,268.59 736.63,267.88 736.87,267.19 737.13,266.50 737.42,265.83 737.74,265.16 738.08,264.51 738.45,263.86 738.85,263.24 739.27,262.62 739.72,262.03 740.19,261.45 740.70,260.89 741.23,260.36 741.78,259.84 742.36,259.36 742.97,258.90 743.60,258.47 744.26,258.07 744.93,257.71 745.63,257.38 746.34,257.09 747.07,256.84 747.81,256.64 748.57,256.47 749.33,256.34 750.10,256.24 750.87,256.12 751.64,255.99 752.43,255.88 753.23,255.81 754.04,255.80 754.85,255.86 755.68,256.02Z"/><path d="M801.66,348.65 800.27,348.45 798.90,348.18 797.55,347.84 796.20,347.46 794.86,347.05 793.53,346.64 792.19,346.26 790.84,345.90 789.50,345.53 788.17,345.11 786.85,344.64 785.56,344.11 784.30,343.52 783.07,342.88 781.88,342.18 780.74,341.42 779.65,340.61 778.61,339.75 777.64,338.84 776.74,337.88 775.91,336.88 775.15,335.85 774.46,334.78 773.84,333.67 773.25,332.51 772.70,331.31 772.20,330.10 771.75,328.88 771.34,327.65 770.98,326.42 770.66,325.18 770.39,323.94 770.16,322.70 769.97,321.46 769.82,320.21 769.71,318.97 769.63,317.72 769.60,316.48 769.61,315.23 769.66,313.98 769.75,312.74 769.88,311.50 770.06,310.26 770.29,309.02 770.55,307.79 770.86,306.56 771.22,305.34 771.63,304.13 772.08,302.93 772.58,301.75 773.12,300.57 773.72,299.41 774.36,298.27 775.06,297.15 775.80,296.06 776.60,294.99 777.44,293.94 778.32,292.93 779.26,291.96 780.24,291.02 781.27,290.11 782.34,289.25 783.44,288.44 784.59,287.67 785.77,286.94 786.97,286.24 788.20,285.58 789.45,284.95 790.73,284.35 792.03,283.79 793.35,283.27 794.68,282.78 796.04,282.33 797.42,281.93 798.82,281.56 800.23,281.24 801.65,280.96 803.09,280.73 804.54,280.54 806.02,280.41 808.84,280.20 811.65,280.09 814.47,280.08 817.30,280.17 820.12,280.39 822.94,280.71 825.74,281.16 828.52,281.73 831.26,282.43 833.96,283.24 836.62,284.13 839.23,285.10 841.81,286.13 844.34,287.24 846.82,288.42 849.24,289.68 851.59,291.01 853.87,292.42 856.08,293.92 858.20,295.49 860.23,297.14 862.16,298.88 863.98,300.69 865.69,302.58 867.30,304.56 868.70,303.44 867.07,301.41 865.33,299.42 863.49,297.50 861.56,295.64 859.53,293.85 857.42,292.12 855.21,290.46 852.93,288.88 850.57,287.37 848.13,285.94 845.61,284.61 843.03,283.36 840.39,282.20 837.69,281.15 834.94,280.19 832.15,279.33 829.32,278.53 826.48,277.78 823.60,277.10 820.71,276.48 817.79,275.93 814.85,275.46 811.89,275.07 808.93,274.78 805.98,274.57 804.33,274.49 802.65,274.47 800.97,274.51 799.29,274.61 797.61,274.78 795.94,275.02 794.28,275.32 792.63,275.68 791.00,276.11 789.38,276.61 787.79,277.17 786.23,277.80 784.69,278.49 783.18,279.24 781.71,280.06 780.28,280.93 778.88,281.86 777.52,282.82 776.18,283.83 774.89,284.88 773.63,285.97 772.41,287.11 771.23,288.28 770.09,289.49 769.00,290.74 767.95,292.03 766.95,293.35 766.01,294.72 765.11,296.12 764.28,297.55 763.50,299.02 762.78,300.51 762.13,302.04 761.54,303.59 761.02,305.17 760.57,306.77 760.19,308.38 759.89,310.02 759.66,311.66 759.50,313.31 759.41,314.97 759.41,316.63 759.48,318.29 759.63,319.95 759.86,321.59 760.17,323.22 760.55,324.83 761.01,326.43 761.54,328.00 762.14,329.54 762.81,331.05 763.54,332.53 764.34,333.98 765.20,335.39 766.11,336.76 767.09,338.11 768.17,339.45 769.33,340.73 770.56,341.93 771.86,343.06 773.21,344.10 774.60,345.07 776.03,345.97 777.48,346.79 778.96,347.54 780.46,348.22 781.96,348.84 783.47,349.41 784.98,349.93 786.48,350.40 787.98,350.83 789.47,351.23 790.96,351.56 792.45,351.79 793.94,351.94 795.42,352.04 796.89,352.11 798.34,352.19 799.78,352.29 801.20,352.43Z"/><path d="M744.03,313.39 743.59,312.73 743.17,312.05 742.76,311.34 742.35,310.59 741.92,309.80 741.46,308.98 740.93,308.13 740.34,307.27 739.66,306.41 738.88,305.59 738.00,304.79 737.05,304.04 736.02,303.34 734.91,302.70 733.73,302.15 732.49,301.71 731.19,301.37 729.85,301.17 728.48,301.10 727.11,301.17 725.77,301.39 724.52,301.69 723.33,302.05 722.15,302.49 721.00,302.99 719.87,303.55 718.78,304.19 717.72,304.88 716.71,305.64 715.74,306.46 714.82,307.34 713.96,308.27 713.15,309.25 712.40,310.29 711.71,311.36 711.09,312.48 710.54,313.64 710.06,314.82 709.66,316.03 709.33,317.27 709.07,318.52 708.89,319.79 708.79,321.06 708.77,322.33 708.82,323.61 708.95,324.87 709.15,326.13 709.43,327.37 709.78,328.59 710.20,329.78 710.68,330.95 711.24,332.08 711.85,333.18 712.53,334.24 713.26,335.25 714.05,336.23 714.89,337.15 715.78,338.03 716.71,338.85 717.69,339.62 718.71,340.34 719.76,340.99 720.85,341.59 721.96,342.13 723.11,342.61 724.27,343.03 725.46,343.38 726.67,343.64 727.89,343.83 729.21,343.94 732.06,343.87 734.87,343.43 737.55,342.73 740.11,341.80 742.55,340.66 744.91,339.33 747.20,337.85 749.44,336.22 751.64,334.43 753.75,332.41 755.78,330.17 757.73,327.74 759.65,325.14 761.57,322.41 760.43,321.59 758.46,324.25 756.43,326.66 754.34,328.86 752.25,330.86 750.15,332.70 748.05,334.36 745.88,335.78 743.64,336.92 741.35,337.81 739.02,338.46 736.67,338.87 734.29,339.09 731.90,339.11 729.47,338.91 728.63,338.77 727.71,338.58 726.79,338.35 725.89,338.08 725.01,337.76 724.15,337.39 723.31,336.96 722.50,336.48 721.73,335.95 720.99,335.38 720.28,334.77 719.62,334.11 719.00,333.42 718.42,332.69 717.89,331.93 717.40,331.14 716.96,330.33 716.57,329.49 716.23,328.64 715.94,327.77 715.70,326.89 715.50,326.00 715.36,325.10 715.27,324.19 715.23,323.29 715.23,322.38 715.29,321.48 715.39,320.58 715.54,319.69 715.73,318.81 715.97,317.95 716.26,317.09 716.59,316.26 716.96,315.44 717.38,314.64 717.84,313.86 718.33,313.10 718.87,312.38 719.45,311.68 720.07,311.01 720.72,310.37 721.41,309.77 722.13,309.20 722.88,308.68 723.67,308.20 724.48,307.76 725.32,307.37 726.19,307.03 727.04,306.74 727.84,306.55 728.63,306.44 729.44,306.43 730.26,306.50 731.07,306.66 731.87,306.91 732.64,307.23 733.39,307.63 734.11,308.10 734.78,308.62 735.42,309.19 736.03,309.79 736.64,310.39 737.23,311.00 737.81,311.63 738.37,312.26 738.91,312.91 739.43,313.56 739.94,314.22 740.43,314.89 740.91,315.55Z"/><path d="M838.24,335.66 837.39,335.48 836.55,335.26 835.72,335.01 834.89,334.72 834.07,334.43 833.26,334.14 832.46,333.86 831.65,333.60 830.87,333.31 830.10,332.98 829.37,332.60 828.68,332.17 828.04,331.69 827.45,331.17 826.91,330.60 826.44,330.00 826.03,329.37 825.67,328.68 825.33,327.92 825.02,327.11 824.75,326.30 824.52,325.48 824.32,324.66 824.16,323.83 824.04,322.99 823.95,322.15 823.90,321.32 823.88,320.48 823.90,319.64 823.94,318.81 824.02,317.98 824.13,317.15 824.28,316.32 824.46,315.51 824.67,314.69 824.92,313.89 825.21,313.10 825.53,312.32 825.88,311.55 826.27,310.80 826.70,310.06 827.16,309.34 827.66,308.65 828.19,307.97 828.76,307.33 829.36,306.71 830.00,306.12 830.67,305.56 831.36,305.05 832.09,304.56 832.84,304.12 833.62,303.72 834.41,303.37 835.23,303.06 836.07,302.79 836.91,302.57 837.76,302.37 838.62,302.20 839.49,302.06 840.34,301.96 842.41,301.79 844.36,301.74 846.27,301.81 848.12,302.00 849.92,302.32 851.67,302.79 853.34,303.41 854.93,304.18 856.43,305.10 857.83,306.16 859.15,307.33 860.38,308.60 861.55,309.96 862.64,311.42 863.64,312.98 864.56,314.63 865.38,316.38 866.10,318.22 866.72,320.15 867.22,322.19 868.78,321.81 868.28,319.72 867.68,317.69 866.99,315.73 866.20,313.84 865.31,312.04 864.31,310.32 863.20,308.70 861.99,307.18 860.67,305.76 859.24,304.47 857.73,303.28 856.14,302.16 854.48,301.14 852.73,300.19 850.89,299.35 848.95,298.61 846.91,298.00 844.77,297.52 842.53,297.20 840.23,297.07 839.08,297.08 837.95,297.16 836.83,297.31 835.73,297.52 834.63,297.79 833.55,298.13 832.49,298.51 831.45,298.94 830.42,299.41 829.41,299.93 828.43,300.49 827.47,301.10 826.53,301.75 825.63,302.44 824.76,303.18 823.92,303.96 823.12,304.78 822.36,305.64 821.63,306.54 820.96,307.48 820.33,308.45 819.75,309.45 819.22,310.49 818.75,311.55 818.33,312.64 817.98,313.74 817.68,314.87 817.44,316.02 817.27,317.17 817.16,318.33 817.11,319.50 817.13,320.67 817.22,321.83 817.37,322.99 817.58,324.13 817.86,325.26 818.19,326.37 818.58,327.46 819.03,328.52 819.52,329.56 820.07,330.57 820.68,331.58 821.39,332.58 822.19,333.54 823.06,334.42 823.99,335.21 824.97,335.92 825.97,336.55 827.00,337.10 828.03,337.57 829.06,337.99 830.08,338.34 831.08,338.64 832.08,338.85 833.05,338.98 834.01,339.06 834.93,339.12 835.83,339.18 836.71,339.27 837.58,339.40Z"/><g transform="translate(1737,0) scale(-1,1)"><path d="M756.47,252.51 755.56,252.27 754.61,252.03 753.65,251.79 752.68,251.57 751.68,251.41 750.68,251.31 749.67,251.30 748.67,251.39 747.67,251.54 746.68,251.73 745.70,251.97 744.73,252.24 743.76,252.55 742.81,252.91 741.88,253.30 740.96,253.73 740.05,254.21 739.17,254.73 738.31,255.29 737.48,255.89 736.67,256.53 735.89,257.21 735.15,257.93 734.44,258.68 733.77,259.48 733.14,260.31 732.55,261.17 732.01,262.06 731.52,262.98 731.07,263.93 730.68,264.90 730.34,265.89 730.05,266.89 729.81,267.91 729.63,268.94 729.49,269.98 729.41,271.02 729.38,272.06 729.40,273.10 729.48,274.14 729.60,275.17 729.77,276.20 729.99,277.21 730.26,278.21 730.57,279.20 730.93,280.17 731.33,281.12 731.78,282.05 732.26,282.96 732.79,283.84 733.35,284.71 733.95,285.54 734.58,286.35 735.25,287.13 735.95,287.88 736.70,288.58 737.49,289.24 738.31,289.85 739.17,290.41 740.05,290.92 740.96,291.38 741.89,291.78 742.84,292.14 743.80,292.44 744.78,292.69 745.76,292.90 746.74,293.05 747.73,293.16 748.71,293.22 749.74,293.25 751.67,293.15 753.58,293.01 755.53,292.79 757.52,292.50 759.53,292.12 761.58,291.59 763.64,290.91 765.72,290.09 767.83,289.14 769.97,288.08 772.15,286.93 774.38,285.71 773.62,284.29 771.39,285.45 769.20,286.43 767.04,287.25 764.94,287.94 762.89,288.52 760.90,289.01 758.97,289.41 757.09,289.73 755.26,289.92 753.47,289.95 751.72,289.84 749.96,289.61 749.22,289.44 748.45,289.22 747.69,288.96 746.95,288.67 746.23,288.35 745.53,288.00 744.84,287.62 744.18,287.22 743.54,286.79 742.92,286.34 742.31,285.87 741.73,285.38 741.16,284.88 740.61,284.35 740.08,283.82 739.57,283.26 739.09,282.69 738.63,282.09 738.20,281.47 737.81,280.82 737.46,280.16 737.13,279.48 736.84,278.79 736.59,278.09 736.37,277.37 736.19,276.64 736.05,275.91 735.93,275.18 735.86,274.44 735.81,273.70 735.81,272.96 735.83,272.22 735.88,271.48 735.97,270.75 736.09,270.02 736.24,269.30 736.42,268.59 736.63,267.88 736.87,267.19 737.13,266.50 737.42,265.83 737.74,265.16 738.08,264.51 738.45,263.86 738.85,263.24 739.27,262.62 739.72,262.03 740.19,261.45 740.70,260.89 741.23,260.36 741.78,259.84 742.36,259.36 742.97,258.90 743.60,258.47 744.26,258.07 744.93,257.71 745.63,257.38 746.34,257.09 747.07,256.84 747.81,256.64 748.57,256.47 749.33,256.34 750.10,256.24 750.87,256.12 751.64,255.99 752.43,255.88 753.23,255.81 754.04,255.80 754.85,255.86 755.68,256.02Z"/><path d="M801.66,348.65 800.27,348.45 798.90,348.18 797.55,347.84 796.20,347.46 794.86,347.05 793.53,346.64 792.19,346.26 790.84,345.90 789.50,345.53 788.17,345.11 786.85,344.64 785.56,344.11 784.30,343.52 783.07,342.88 781.88,342.18 780.74,341.42 779.65,340.61 778.61,339.75 777.64,338.84 776.74,337.88 775.91,336.88 775.15,335.85 774.46,334.78 773.84,333.67 773.25,332.51 772.70,331.31 772.20,330.10 771.75,328.88 771.34,327.65 770.98,326.42 770.66,325.18 770.39,323.94 770.16,322.70 769.97,321.46 769.82,320.21 769.71,318.97 769.63,317.72 769.60,316.48 769.61,315.23 769.66,313.98 769.75,312.74 769.88,311.50 770.06,310.26 770.29,309.02 770.55,307.79 770.86,306.56 771.22,305.34 771.63,304.13 772.08,302.93 772.58,301.75 773.12,300.57 773.72,299.41 774.36,298.27 775.06,297.15 775.80,296.06 776.60,294.99 777.44,293.94 778.32,292.93 779.26,291.96 780.24,291.02 781.27,290.11 782.34,289.25 783.44,288.44 784.59,287.67 785.77,286.94 786.97,286.24 788.20,285.58 789.45,284.95 790.73,284.35 792.03,283.79 793.35,283.27 794.68,282.78 796.04,282.33 797.42,281.93 798.82,281.56 800.23,281.24 801.65,280.96 803.09,280.73 804.54,280.54 806.02,280.41 808.84,280.20 811.65,280.09 814.47,280.08 817.30,280.17 820.12,280.39 822.94,280.71 825.74,281.16 828.52,281.73 831.26,282.43 833.96,283.24 836.62,284.13 839.23,285.10 841.81,286.13 844.34,287.24 846.82,288.42 849.24,289.68 851.59,291.01 853.87,292.42 856.08,293.92 858.20,295.49 860.23,297.14 862.16,298.88 863.98,300.69 865.69,302.58 867.30,304.56 868.70,303.44 867.07,301.41 865.33,299.42 863.49,297.50 861.56,295.64 859.53,293.85 857.42,292.12 855.21,290.46 852.93,288.88 850.57,287.37 848.13,285.94 845.61,284.61 843.03,283.36 840.39,282.20 837.69,281.15 834.94,280.19 832.15,279.33 829.32,278.53 826.48,277.78 823.60,277.10 820.71,276.48 817.79,275.93 814.85,275.46 811.89,275.07 808.93,274.78 805.98,274.57 804.33,274.49 802.65,274.47 800.97,274.51 799.29,274.61 797.61,274.78 795.94,275.02 794.28,275.32 792.63,275.68 791.00,276.11 789.38,276.61 787.79,277.17 786.23,277.80 784.69,278.49 783.18,279.24 781.71,280.06 780.28,280.93 778.88,281.86 777.52,282.82 776.18,283.83 774.89,284.88 773.63,285.97 772.41,287.11 771.23,288.28 770.09,289.49 769.00,290.74 767.95,292.03 766.95,293.35 766.01,294.72 765.11,296.12 764.28,297.55 763.50,299.02 762.78,300.51 762.13,302.04 761.54,303.59 761.02,305.17 760.57,306.77 760.19,308.38 759.89,310.02 759.66,311.66 759.50,313.31 759.41,314.97 759.41,316.63 759.48,318.29 759.63,319.95 759.86,321.59 760.17,323.22 760.55,324.83 761.01,326.43 761.54,328.00 762.14,329.54 762.81,331.05 763.54,332.53 764.34,333.98 765.20,335.39 766.11,336.76 767.09,338.11 768.17,339.45 769.33,340.73 770.56,341.93 771.86,343.06 773.21,344.10 774.60,345.07 776.03,345.97 777.48,346.79 778.96,347.54 780.46,348.22 781.96,348.84 783.47,349.41 784.98,349.93 786.48,350.40 787.98,350.83 789.47,351.23 790.96,351.56 792.45,351.79 793.94,351.94 795.42,352.04 796.89,352.11 798.34,352.19 799.78,352.29 801.20,352.43Z"/><path d="M744.03,313.39 743.59,312.73 743.17,312.05 742.76,311.34 742.35,310.59 741.92,309.80 741.46,308.98 740.93,308.13 740.34,307.27 739.66,306.41 738.88,305.59 738.00,304.79 737.05,304.04 736.02,303.34 734.91,302.70 733.73,302.15 732.49,301.71 731.19,301.37 729.85,301.17 728.48,301.10 727.11,301.17 725.77,301.39 724.52,301.69 723.33,302.05 722.15,302.49 721.00,302.99 719.87,303.55 718.78,304.19 717.72,304.88 716.71,305.64 715.74,306.46 714.82,307.34 713.96,308.27 713.15,309.25 712.40,310.29 711.71,311.36 711.09,312.48 710.54,313.64 710.06,314.82 709.66,316.03 709.33,317.27 709.07,318.52 708.89,319.79 708.79,321.06 708.77,322.33 708.82,323.61 708.95,324.87 709.15,326.13 709.43,327.37 709.78,328.59 710.20,329.78 710.68,330.95 711.24,332.08 711.85,333.18 712.53,334.24 713.26,335.25 714.05,336.23 714.89,337.15 715.78,338.03 716.71,338.85 717.69,339.62 718.71,340.34 719.76,340.99 720.85,341.59 721.96,342.13 723.11,342.61 724.27,343.03 725.46,343.38 726.67,343.64 727.89,343.83 729.21,343.94 732.06,343.87 734.87,343.43 737.55,342.73 740.11,341.80 742.55,340.66 744.91,339.33 747.20,337.85 749.44,336.22 751.64,334.43 753.75,332.41 755.78,330.17 757.73,327.74 759.65,325.14 761.57,322.41 760.43,321.59 758.46,324.25 756.43,326.66 754.34,328.86 752.25,330.86 750.15,332.70 748.05,334.36 745.88,335.78 743.64,336.92 741.35,337.81 739.02,338.46 736.67,338.87 734.29,339.09 731.90,339.11 729.47,338.91 728.63,338.77 727.71,338.58 726.79,338.35 725.89,338.08 725.01,337.76 724.15,337.39 723.31,336.96 722.50,336.48 721.73,335.95 720.99,335.38 720.28,334.77 719.62,334.11 719.00,333.42 718.42,332.69 717.89,331.93 717.40,331.14 716.96,330.33 716.57,329.49 716.23,328.64 715.94,327.77 715.70,326.89 715.50,326.00 715.36,325.10 715.27,324.19 715.23,323.29 715.23,322.38 715.29,321.48 715.39,320.58 715.54,319.69 715.73,318.81 715.97,317.95 716.26,317.09 716.59,316.26 716.96,315.44 717.38,314.64 717.84,313.86 718.33,313.10 718.87,312.38 719.45,311.68 720.07,311.01 720.72,310.37 721.41,309.77 722.13,309.20 722.88,308.68 723.67,308.20 724.48,307.76 725.32,307.37 726.19,307.03 727.04,306.74 727.84,306.55 728.63,306.44 729.44,306.43 730.26,306.50 731.07,306.66 731.87,306.91 732.64,307.23 733.39,307.63 734.11,308.10 734.78,308.62 735.42,309.19 736.03,309.79 736.64,310.39 737.23,311.00 737.81,311.63 738.37,312.26 738.91,312.91 739.43,313.56 739.94,314.22 740.43,314.89 740.91,315.55Z"/><path d="M838.24,335.66 837.39,335.48 836.55,335.26 835.72,335.01 834.89,334.72 834.07,334.43 833.26,334.14 832.46,333.86 831.65,333.60 830.87,333.31 830.10,332.98 829.37,332.60 828.68,332.17 828.04,331.69 827.45,331.17 826.91,330.60 826.44,330.00 826.03,329.37 825.67,328.68 825.33,327.92 825.02,327.11 824.75,326.30 824.52,325.48 824.32,324.66 824.16,323.83 824.04,322.99 823.95,322.15 823.90,321.32 823.88,320.48 823.90,319.64 823.94,318.81 824.02,317.98 824.13,317.15 824.28,316.32 824.46,315.51 824.67,314.69 824.92,313.89 825.21,313.10 825.53,312.32 825.88,311.55 826.27,310.80 826.70,310.06 827.16,309.34 827.66,308.65 828.19,307.97 828.76,307.33 829.36,306.71 830.00,306.12 830.67,305.56 831.36,305.05 832.09,304.56 832.84,304.12 833.62,303.72 834.41,303.37 835.23,303.06 836.07,302.79 836.91,302.57 837.76,302.37 838.62,302.20 839.49,302.06 840.34,301.96 842.41,301.79 844.36,301.74 846.27,301.81 848.12,302.00 849.92,302.32 851.67,302.79 853.34,303.41 854.93,304.18 856.43,305.10 857.83,306.16 859.15,307.33 860.38,308.60 861.55,309.96 862.64,311.42 863.64,312.98 864.56,314.63 865.38,316.38 866.10,318.22 866.72,320.15 867.22,322.19 868.78,321.81 868.28,319.72 867.68,317.69 866.99,315.73 866.20,313.84 865.31,312.04 864.31,310.32 863.20,308.70 861.99,307.18 860.67,305.76 859.24,304.47 857.73,303.28 856.14,302.16 854.48,301.14 852.73,300.19 850.89,299.35 848.95,298.61 846.91,298.00 844.77,297.52 842.53,297.20 840.23,297.07 839.08,297.08 837.95,297.16 836.83,297.31 835.73,297.52 834.63,297.79 833.55,298.13 832.49,298.51 831.45,298.94 830.42,299.41 829.41,299.93 828.43,300.49 827.47,301.10 826.53,301.75 825.63,302.44 824.76,303.18 823.92,303.96 823.12,304.78 822.36,305.64 821.63,306.54 820.96,307.48 820.33,308.45 819.75,309.45 819.22,310.49 818.75,311.55 818.33,312.64 817.98,313.74 817.68,314.87 817.44,316.02 817.27,317.17 817.16,318.33 817.11,319.50 817.13,320.67 817.22,321.83 817.37,322.99 817.58,324.13 817.86,325.26 818.19,326.37 818.58,327.46 819.03,328.52 819.52,329.56 820.07,330.57 820.68,331.58 821.39,332.58 822.19,333.54 823.06,334.42 823.99,335.21 824.97,335.92 825.97,336.55 827.00,337.10 828.03,337.57 829.06,337.99 830.08,338.34 831.08,338.64 832.08,338.85 833.05,338.98 834.01,339.06 834.93,339.12 835.83,339.18 836.71,339.27 837.58,339.40Z"/><path d="M831.67,260.78 832.80,261.79 833.75,263.07 834.72,264.32 835.89,265.33 837.08,266.36 838.23,267.47 839.36,268.64 840.46,269.87 841.56,271.13 842.66,272.40 843.80,273.68 844.96,274.96 846.16,276.23 847.40,277.51 848.67,278.79 849.96,280.09 851.27,281.41 852.58,282.77 853.87,284.17 855.13,285.62 856.35,287.14 857.51,288.73 858.59,290.38 859.62,292.09 860.70,293.80 861.81,295.50 862.94,297.23 864.03,299.00 865.04,300.84 865.95,302.74 867.05,302.26 866.23,300.29 865.45,298.32 864.70,296.34 863.93,294.39 863.10,292.47 862.18,290.62 861.17,288.84 860.16,287.08 859.18,285.31 858.23,283.54 857.28,281.78 856.33,280.03 855.36,278.32 854.36,276.64 853.31,275.01 852.21,273.44 851.05,271.94 849.84,270.51 848.56,269.17 847.24,267.90 845.87,266.71 844.48,265.59 843.09,264.51 841.71,263.46 840.34,262.43 839.01,261.41 837.66,260.46 836.10,259.83 834.52,259.31 833.13,258.62Z"/></g><path d="M831.67,260.78 832.80,261.79 833.75,263.07 834.72,264.32 835.89,265.33 837.08,266.36 838.23,267.47 839.36,268.64 840.46,269.87 841.56,271.13 842.66,272.40 843.80,273.68 844.96,274.96 846.16,276.23 847.40,277.51 848.67,278.79 849.96,280.09 851.27,281.41 852.58,282.77 853.87,284.17 855.13,285.62 856.35,287.14 857.51,288.73 858.59,290.38 859.62,292.09 860.70,293.80 861.81,295.50 862.94,297.23 864.03,299.00 865.04,300.84 865.95,302.74 867.05,302.26 866.23,300.29 865.45,298.32 864.70,296.34 863.93,294.39 863.10,292.47 862.18,290.62 861.17,288.84 860.16,287.08 859.18,285.31 858.23,283.54 857.28,281.78 856.33,280.03 855.36,278.32 854.36,276.64 853.31,275.01 852.21,273.44 851.05,271.94 849.84,270.51 848.56,269.17 847.24,267.90 845.87,266.71 844.48,265.59 843.09,264.51 841.71,263.46 840.34,262.43 839.01,261.41 837.66,260.46 836.10,259.83 834.52,259.31 833.13,258.62Z"/><path d="M867.00,242.45 866.21,245.19 865.33,247.94 865.21,250.74 865.03,253.55 864.80,256.36 864.58,259.18 864.40,262.01 864.29,264.85 864.28,267.69 864.34,270.53 864.46,273.38 864.64,276.22 864.86,279.05 865.11,281.88 865.37,284.70 865.62,287.51 865.85,290.31 866.05,293.10 866.20,295.87 866.29,298.63 866.34,301.38 866.41,304.10 866.50,306.80 866.61,309.49 866.74,312.14 866.87,314.78 866.99,317.38 867.10,319.96 867.19,322.51 867.25,325.02 869.75,324.98 869.71,322.46 869.70,319.91 869.71,317.33 869.74,314.73 869.77,312.09 869.81,309.43 869.84,306.75 869.85,304.05 869.84,301.33 869.82,298.59 869.85,295.83 869.94,293.06 870.09,290.28 870.28,287.48 870.51,284.68 870.75,281.86 870.98,279.05 871.21,276.22 871.40,273.40 871.55,270.58 871.65,267.75 871.69,264.93 871.66,262.11 871.56,259.30 871.44,256.49 871.33,253.69 871.28,250.90 871.31,248.12 870.60,245.33 870.00,242.55Z"/><g transform="translate(0,804) scale(1,-1)"><path d="M756.47,252.51 755.56,252.27 754.61,252.03 753.65,251.79 752.68,251.57 751.68,251.41 750.68,251.31 749.67,251.30 748.67,251.39 747.67,251.54 746.68,251.73 745.70,251.97 744.73,252.24 743.76,252.55 742.81,252.91 741.88,253.30 740.96,253.73 740.05,254.21 739.17,254.73 738.31,255.29 737.48,255.89 736.67,256.53 735.89,257.21 735.15,257.93 734.44,258.68 733.77,259.48 733.14,260.31 732.55,261.17 732.01,262.06 731.52,262.98 731.07,263.93 730.68,264.90 730.34,265.89 730.05,266.89 729.81,267.91 729.63,268.94 729.49,269.98 729.41,271.02 729.38,272.06 729.40,273.10 729.48,274.14 729.60,275.17 729.77,276.20 729.99,277.21 730.26,278.21 730.57,279.20 730.93,280.17 731.33,281.12 731.78,282.05 732.26,282.96 732.79,283.84 733.35,284.71 733.95,285.54 734.58,286.35 735.25,287.13 735.95,287.88 736.70,288.58 737.49,289.24 738.31,289.85 739.17,290.41 740.05,290.92 740.96,291.38 741.89,291.78 742.84,292.14 743.80,292.44 744.78,292.69 745.76,292.90 746.74,293.05 747.73,293.16 748.71,293.22 749.74,293.25 751.67,293.15 753.58,293.01 755.53,292.79 757.52,292.50 759.53,292.12 761.58,291.59 763.64,290.91 765.72,290.09 767.83,289.14 769.97,288.08 772.15,286.93 774.38,285.71 773.62,284.29 771.39,285.45 769.20,286.43 767.04,287.25 764.94,287.94 762.89,288.52 760.90,289.01 758.97,289.41 757.09,289.73 755.26,289.92 753.47,289.95 751.72,289.84 749.96,289.61 749.22,289.44 748.45,289.22 747.69,288.96 746.95,288.67 746.23,288.35 745.53,288.00 744.84,287.62 744.18,287.22 743.54,286.79 742.92,286.34 742.31,285.87 741.73,285.38 741.16,284.88 740.61,284.35 740.08,283.82 739.57,283.26 739.09,282.69 738.63,282.09 738.20,281.47 737.81,280.82 737.46,280.16 737.13,279.48 736.84,278.79 736.59,278.09 736.37,277.37 736.19,276.64 736.05,275.91 735.93,275.18 735.86,274.44 735.81,273.70 735.81,272.96 735.83,272.22 735.88,271.48 735.97,270.75 736.09,270.02 736.24,269.30 736.42,268.59 736.63,267.88 736.87,267.19 737.13,266.50 737.42,265.83 737.74,265.16 738.08,264.51 738.45,263.86 738.85,263.24 739.27,262.62 739.72,262.03 740.19,261.45 740.70,260.89 741.23,260.36 741.78,259.84 742.36,259.36 742.97,258.90 743.60,258.47 744.26,258.07 744.93,257.71 745.63,257.38 746.34,257.09 747.07,256.84 747.81,256.64 748.57,256.47 749.33,256.34 750.10,256.24 750.87,256.12 751.64,255.99 752.43,255.88 753.23,255.81 754.04,255.80 754.85,255.86 755.68,256.02Z"/><path d="M801.66,348.65 800.27,348.45 798.90,348.18 797.55,347.84 796.20,347.46 794.86,347.05 793.53,346.64 792.19,346.26 790.84,345.90 789.50,345.53 788.17,345.11 786.85,344.64 785.56,344.11 784.30,343.52 783.07,342.88 781.88,342.18 780.74,341.42 779.65,340.61 778.61,339.75 777.64,338.84 776.74,337.88 775.91,336.88 775.15,335.85 774.46,334.78 773.84,333.67 773.25,332.51 772.70,331.31 772.20,330.10 771.75,328.88 771.34,327.65 770.98,326.42 770.66,325.18 770.39,323.94 770.16,322.70 769.97,321.46 769.82,320.21 769.71,318.97 769.63,317.72 769.60,316.48 769.61,315.23 769.66,313.98 769.75,312.74 769.88,311.50 770.06,310.26 770.29,309.02 770.55,307.79 770.86,306.56 771.22,305.34 771.63,304.13 772.08,302.93 772.58,301.75 773.12,300.57 773.72,299.41 774.36,298.27 775.06,297.15 775.80,296.06 776.60,294.99 777.44,293.94 778.32,292.93 779.26,291.96 780.24,291.02 781.27,290.11 782.34,289.25 783.44,288.44 784.59,287.67 785.77,286.94 786.97,286.24 788.20,285.58 789.45,284.95 790.73,284.35 792.03,283.79 793.35,283.27 794.68,282.78 796.04,282.33 797.42,281.93 798.82,281.56 800.23,281.24 801.65,280.96 803.09,280.73 804.54,280.54 806.02,280.41 808.84,280.20 811.65,280.09 814.47,280.08 817.30,280.17 820.12,280.39 822.94,280.71 825.74,281.16 828.52,281.73 831.26,282.43 833.96,283.24 836.62,284.13 839.23,285.10 841.81,286.13 844.34,287.24 846.82,288.42 849.24,289.68 851.59,291.01 853.87,292.42 856.08,293.92 858.20,295.49 860.23,297.14 862.16,298.88 863.98,300.69 865.69,302.58 867.30,304.56 868.70,303.44 867.07,301.41 865.33,299.42 863.49,297.50 861.56,295.64 859.53,293.85 857.42,292.12 855.21,290.46 852.93,288.88 850.57,287.37 848.13,285.94 845.61,284.61 843.03,283.36 840.39,282.20 837.69,281.15 834.94,280.19 832.15,279.33 829.32,278.53 826.48,277.78 823.60,277.10 820.71,276.48 817.79,275.93 814.85,275.46 811.89,275.07 808.93,274.78 805.98,274.57 804.33,274.49 802.65,274.47 800.97,274.51 799.29,274.61 797.61,274.78 795.94,275.02 794.28,275.32 792.63,275.68 791.00,276.11 789.38,276.61 787.79,277.17 786.23,277.80 784.69,278.49 783.18,279.24 781.71,280.06 780.28,280.93 778.88,281.86 777.52,282.82 776.18,283.83 774.89,284.88 773.63,285.97 772.41,287.11 771.23,288.28 770.09,289.49 769.00,290.74 767.95,292.03 766.95,293.35 766.01,294.72 765.11,296.12 764.28,297.55 763.50,299.02 762.78,300.51 762.13,302.04 761.54,303.59 761.02,305.17 760.57,306.77 760.19,308.38 759.89,310.02 759.66,311.66 759.50,313.31 759.41,314.97 759.41,316.63 759.48,318.29 759.63,319.95 759.86,321.59 760.17,323.22 760.55,324.83 761.01,326.43 761.54,328.00 762.14,329.54 762.81,331.05 763.54,332.53 764.34,333.98 765.20,335.39 766.11,336.76 767.09,338.11 768.17,339.45 769.33,340.73 770.56,341.93 771.86,343.06 773.21,344.10 774.60,345.07 776.03,345.97 777.48,346.79 778.96,347.54 780.46,348.22 781.96,348.84 783.47,349.41 784.98,349.93 786.48,350.40 787.98,350.83 789.47,351.23 790.96,351.56 792.45,351.79 793.94,351.94 795.42,352.04 796.89,352.11 798.34,352.19 799.78,352.29 801.20,352.43Z"/><path d="M744.03,313.39 743.59,312.73 743.17,312.05 742.76,311.34 742.35,310.59 741.92,309.80 741.46,308.98 740.93,308.13 740.34,307.27 739.66,306.41 738.88,305.59 738.00,304.79 737.05,304.04 736.02,303.34 734.91,302.70 733.73,302.15 732.49,301.71 731.19,301.37 729.85,301.17 728.48,301.10 727.11,301.17 725.77,301.39 724.52,301.69 723.33,302.05 722.15,302.49 721.00,302.99 719.87,303.55 718.78,304.19 717.72,304.88 716.71,305.64 715.74,306.46 714.82,307.34 713.96,308.27 713.15,309.25 712.40,310.29 711.71,311.36 711.09,312.48 710.54,313.64 710.06,314.82 709.66,316.03 709.33,317.27 709.07,318.52 708.89,319.79 708.79,321.06 708.77,322.33 708.82,323.61 708.95,324.87 709.15,326.13 709.43,327.37 709.78,328.59 710.20,329.78 710.68,330.95 711.24,332.08 711.85,333.18 712.53,334.24 713.26,335.25 714.05,336.23 714.89,337.15 715.78,338.03 716.71,338.85 717.69,339.62 718.71,340.34 719.76,340.99 720.85,341.59 721.96,342.13 723.11,342.61 724.27,343.03 725.46,343.38 726.67,343.64 727.89,343.83 729.21,343.94 732.06,343.87 734.87,343.43 737.55,342.73 740.11,341.80 742.55,340.66 744.91,339.33 747.20,337.85 749.44,336.22 751.64,334.43 753.75,332.41 755.78,330.17 757.73,327.74 759.65,325.14 761.57,322.41 760.43,321.59 758.46,324.25 756.43,326.66 754.34,328.86 752.25,330.86 750.15,332.70 748.05,334.36 745.88,335.78 743.64,336.92 741.35,337.81 739.02,338.46 736.67,338.87 734.29,339.09 731.90,339.11 729.47,338.91 728.63,338.77 727.71,338.58 726.79,338.35 725.89,338.08 725.01,337.76 724.15,337.39 723.31,336.96 722.50,336.48 721.73,335.95 720.99,335.38 720.28,334.77 719.62,334.11 719.00,333.42 718.42,332.69 717.89,331.93 717.40,331.14 716.96,330.33 716.57,329.49 716.23,328.64 715.94,327.77 715.70,326.89 715.50,326.00 715.36,325.10 715.27,324.19 715.23,323.29 715.23,322.38 715.29,321.48 715.39,320.58 715.54,319.69 715.73,318.81 715.97,317.95 716.26,317.09 716.59,316.26 716.96,315.44 717.38,314.64 717.84,313.86 718.33,313.10 718.87,312.38 719.45,311.68 720.07,311.01 720.72,310.37 721.41,309.77 722.13,309.20 722.88,308.68 723.67,308.20 724.48,307.76 725.32,307.37 726.19,307.03 727.04,306.74 727.84,306.55 728.63,306.44 729.44,306.43 730.26,306.50 731.07,306.66 731.87,306.91 732.64,307.23 733.39,307.63 734.11,308.10 734.78,308.62 735.42,309.19 736.03,309.79 736.64,310.39 737.23,311.00 737.81,311.63 738.37,312.26 738.91,312.91 739.43,313.56 739.94,314.22 740.43,314.89 740.91,315.55Z"/><path d="M838.24,335.66 837.39,335.48 836.55,335.26 835.72,335.01 834.89,334.72 834.07,334.43 833.26,334.14 832.46,333.86 831.65,333.60 830.87,333.31 830.10,332.98 829.37,332.60 828.68,332.17 828.04,331.69 827.45,331.17 826.91,330.60 826.44,330.00 826.03,329.37 825.67,328.68 825.33,327.92 825.02,327.11 824.75,326.30 824.52,325.48 824.32,324.66 824.16,323.83 824.04,322.99 823.95,322.15 823.90,321.32 823.88,320.48 823.90,319.64 823.94,318.81 824.02,317.98 824.13,317.15 824.28,316.32 824.46,315.51 824.67,314.69 824.92,313.89 825.21,313.10 825.53,312.32 825.88,311.55 826.27,310.80 826.70,310.06 827.16,309.34 827.66,308.65 828.19,307.97 828.76,307.33 829.36,306.71 830.00,306.12 830.67,305.56 831.36,305.05 832.09,304.56 832.84,304.12 833.62,303.72 834.41,303.37 835.23,303.06 836.07,302.79 836.91,302.57 837.76,302.37 838.62,302.20 839.49,302.06 840.34,301.96 842.41,301.79 844.36,301.74 846.27,301.81 848.12,302.00 849.92,302.32 851.67,302.79 853.34,303.41 854.93,304.18 856.43,305.10 857.83,306.16 859.15,307.33 860.38,308.60 861.55,309.96 862.64,311.42 863.64,312.98 864.56,314.63 865.38,316.38 866.10,318.22 866.72,320.15 867.22,322.19 868.78,321.81 868.28,319.72 867.68,317.69 866.99,315.73 866.20,313.84 865.31,312.04 864.31,310.32 863.20,308.70 861.99,307.18 860.67,305.76 859.24,304.47 857.73,303.28 856.14,302.16 854.48,301.14 852.73,300.19 850.89,299.35 848.95,298.61 846.91,298.00 844.77,297.52 842.53,297.20 840.23,297.07 839.08,297.08 837.95,297.16 836.83,297.31 835.73,297.52 834.63,297.79 833.55,298.13 832.49,298.51 831.45,298.94 830.42,299.41 829.41,299.93 828.43,300.49 827.47,301.10 826.53,301.75 825.63,302.44 824.76,303.18 823.92,303.96 823.12,304.78 822.36,305.64 821.63,306.54 820.96,307.48 820.33,308.45 819.75,309.45 819.22,310.49 818.75,311.55 818.33,312.64 817.98,313.74 817.68,314.87 817.44,316.02 817.27,317.17 817.16,318.33 817.11,319.50 817.13,320.67 817.22,321.83 817.37,322.99 817.58,324.13 817.86,325.26 818.19,326.37 818.58,327.46 819.03,328.52 819.52,329.56 820.07,330.57 820.68,331.58 821.39,332.58 822.19,333.54 823.06,334.42 823.99,335.21 824.97,335.92 825.97,336.55 827.00,337.10 828.03,337.57 829.06,337.99 830.08,338.34 831.08,338.64 832.08,338.85 833.05,338.98 834.01,339.06 834.93,339.12 835.83,339.18 836.71,339.27 837.58,339.40Z"/><g transform="translate(1737,0) scale(-1,1)"><path d="M756.47,252.51 755.56,252.27 754.61,252.03 753.65,251.79 752.68,251.57 751.68,251.41 750.68,251.31 749.67,251.30 748.67,251.39 747.67,251.54 746.68,251.73 745.70,251.97 744.73,252.24 743.76,252.55 742.81,252.91 741.88,253.30 740.96,253.73 740.05,254.21 739.17,254.73 738.31,255.29 737.48,255.89 736.67,256.53 735.89,257.21 735.15,257.93 734.44,258.68 733.77,259.48 733.14,260.31 732.55,261.17 732.01,262.06 731.52,262.98 731.07,263.93 730.68,264.90 730.34,265.89 730.05,266.89 729.81,267.91 729.63,268.94 729.49,269.98 729.41,271.02 729.38,272.06 729.40,273.10 729.48,274.14 729.60,275.17 729.77,276.20 729.99,277.21 730.26,278.21 730.57,279.20 730.93,280.17 731.33,281.12 731.78,282.05 732.26,282.96 732.79,283.84 733.35,284.71 733.95,285.54 734.58,286.35 735.25,287.13 735.95,287.88 736.70,288.58 737.49,289.24 738.31,289.85 739.17,290.41 740.05,290.92 740.96,291.38 741.89,291.78 742.84,292.14 743.80,292.44 744.78,292.69 745.76,292.90 746.74,293.05 747.73,293.16 748.71,293.22 749.74,293.25 751.67,293.15 753.58,293.01 755.53,292.79 757.52,292.50 759.53,292.12 761.58,291.59 763.64,290.91 765.72,290.09 767.83,289.14 769.97,288.08 772.15,286.93 774.38,285.71 773.62,284.29 771.39,285.45 769.20,286.43 767.04,287.25 764.94,287.94 762.89,288.52 760.90,289.01 758.97,289.41 757.09,289.73 755.26,289.92 753.47,289.95 751.72,289.84 749.96,289.61 749.22,289.44 748.45,289.22 747.69,288.96 746.95,288.67 746.23,288.35 745.53,288.00 744.84,287.62 744.18,287.22 743.54,286.79 742.92,286.34 742.31,285.87 741.73,285.38 741.16,284.88 740.61,284.35 740.08,283.82 739.57,283.26 739.09,282.69 738.63,282.09 738.20,281.47 737.81,280.82 737.46,280.16 737.13,279.48 736.84,278.79 736.59,278.09 736.37,277.37 736.19,276.64 736.05,275.91 735.93,275.18 735.86,274.44 735.81,273.70 735.81,272.96 735.83,272.22 735.88,271.48 735.97,270.75 736.09,270.02 736.24,269.30 736.42,268.59 736.63,267.88 736.87,267.19 737.13,266.50 737.42,265.83 737.74,265.16 738.08,264.51 738.45,263.86 738.85,263.24 739.27,262.62 739.72,262.03 740.19,261.45 740.70,260.89 741.23,260.36 741.78,259.84 742.36,259.36 742.97,258.90 743.60,258.47 744.26,258.07 744.93,257.71 745.63,257.38 746.34,257.09 747.07,256.84 747.81,256.64 748.57,256.47 749.33,256.34 750.10,256.24 750.87,256.12 751.64,255.99 752.43,255.88 753.23,255.81 754.04,255.80 754.85,255.86 755.68,256.02Z"/><path d="M801.66,348.65 800.27,348.45 798.90,348.18 797.55,347.84 796.20,347.46 794.86,347.05 793.53,346.64 792.19,346.26 790.84,345.90 789.50,345.53 788.17,345.11 786.85,344.64 785.56,344.11 784.30,343.52 783.07,342.88 781.88,342.18 780.74,341.42 779.65,340.61 778.61,339.75 777.64,338.84 776.74,337.88 775.91,336.88 775.15,335.85 774.46,334.78 773.84,333.67 773.25,332.51 772.70,331.31 772.20,330.10 771.75,328.88 771.34,327.65 770.98,326.42 770.66,325.18 770.39,323.94 770.16,322.70 769.97,321.46 769.82,320.21 769.71,318.97 769.63,317.72 769.60,316.48 769.61,315.23 769.66,313.98 769.75,312.74 769.88,311.50 770.06,310.26 770.29,309.02 770.55,307.79 770.86,306.56 771.22,305.34 771.63,304.13 772.08,302.93 772.58,301.75 773.12,300.57 773.72,299.41 774.36,298.27 775.06,297.15 775.80,296.06 776.60,294.99 777.44,293.94 778.32,292.93 779.26,291.96 780.24,291.02 781.27,290.11 782.34,289.25 783.44,288.44 784.59,287.67 785.77,286.94 786.97,286.24 788.20,285.58 789.45,284.95 790.73,284.35 792.03,283.79 793.35,283.27 794.68,282.78 796.04,282.33 797.42,281.93 798.82,281.56 800.23,281.24 801.65,280.96 803.09,280.73 804.54,280.54 806.02,280.41 808.84,280.20 811.65,280.09 814.47,280.08 817.30,280.17 820.12,280.39 822.94,280.71 825.74,281.16 828.52,281.73 831.26,282.43 833.96,283.24 836.62,284.13 839.23,285.10 841.81,286.13 844.34,287.24 846.82,288.42 849.24,289.68 851.59,291.01 853.87,292.42 856.08,293.92 858.20,295.49 860.23,297.14 862.16,298.88 863.98,300.69 865.69,302.58 867.30,304.56 868.70,303.44 867.07,301.41 865.33,299.42 863.49,297.50 861.56,295.64 859.53,293.85 857.42,292.12 855.21,290.46 852.93,288.88 850.57,287.37 848.13,285.94 845.61,284.61 843.03,283.36 840.39,282.20 837.69,281.15 834.94,280.19 832.15,279.33 829.32,278.53 826.48,277.78 823.60,277.10 820.71,276.48 817.79,275.93 814.85,275.46 811.89,275.07 808.93,274.78 805.98,274.57 804.33,274.49 802.65,274.47 800.97,274.51 799.29,274.61 797.61,274.78 795.94,275.02 794.28,275.32 792.63,275.68 791.00,276.11 789.38,276.61 787.79,277.17 786.23,277.80 784.69,278.49 783.18,279.24 781.71,280.06 780.28,280.93 778.88,281.86 777.52,282.82 776.18,283.83 774.89,284.88 773.63,285.97 772.41,287.11 771.23,288.28 770.09,289.49 769.00,290.74 767.95,292.03 766.95,293.35 766.01,294.72 765.11,296.12 764.28,297.55 763.50,299.02 762.78,300.51 762.13,302.04 761.54,303.59 761.02,305.17 760.57,306.77 760.19,308.38 759.89,310.02 759.66,311.66 759.50,313.31 759.41,314.97 759.41,316.63 759.48,318.29 759.63,319.95 759.86,321.59 760.17,323.22 760.55,324.83 761.01,326.43 761.54,328.00 762.14,329.54 762.81,331.05 763.54,332.53 764.34,333.98 765.20,335.39 766.11,336.76 767.09,338.11 768.17,339.45 769.33,340.73 770.56,341.93 771.86,343.06 773.21,344.10 774.60,345.07 776.03,345.97 777.48,346.79 778.96,347.54 780.46,348.22 781.96,348.84 783.47,349.41 784.98,349.93 786.48,350.40 787.98,350.83 789.47,351.23 790.96,351.56 792.45,351.79 793.94,351.94 795.42,352.04 796.89,352.11 798.34,352.19 799.78,352.29 801.20,352.43Z"/><path d="M744.03,313.39 743.59,312.73 743.17,312.05 742.76,311.34 742.35,310.59 741.92,309.80 741.46,308.98 740.93,308.13 740.34,307.27 739.66,306.41 738.88,305.59 738.00,304.79 737.05,304.04 736.02,303.34 734.91,302.70 733.73,302.15 732.49,301.71 731.19,301.37 729.85,301.17 728.48,301.10 727.11,301.17 725.77,301.39 724.52,301.69 723.33,302.05 722.15,302.49 721.00,302.99 719.87,303.55 718.78,304.19 717.72,304.88 716.71,305.64 715.74,306.46 714.82,307.34 713.96,308.27 713.15,309.25 712.40,310.29 711.71,311.36 711.09,312.48 710.54,313.64 710.06,314.82 709.66,316.03 709.33,317.27 709.07,318.52 708.89,319.79 708.79,321.06 708.77,322.33 708.82,323.61 708.95,324.87 709.15,326.13 709.43,327.37 709.78,328.59 710.20,329.78 710.68,330.95 711.24,332.08 711.85,333.18 712.53,334.24 713.26,335.25 714.05,336.23 714.89,337.15 715.78,338.03 716.71,338.85 717.69,339.62 718.71,340.34 719.76,340.99 720.85,341.59 721.96,342.13 723.11,342.61 724.27,343.03 725.46,343.38 726.67,343.64 727.89,343.83 729.21,343.94 732.06,343.87 734.87,343.43 737.55,342.73 740.11,341.80 742.55,340.66 744.91,339.33 747.20,337.85 749.44,336.22 751.64,334.43 753.75,332.41 755.78,330.17 757.73,327.74 759.65,325.14 761.57,322.41 760.43,321.59 758.46,324.25 756.43,326.66 754.34,328.86 752.25,330.86 750.15,332.70 748.05,334.36 745.88,335.78 743.64,336.92 741.35,337.81 739.02,338.46 736.67,338.87 734.29,339.09 731.90,339.11 729.47,338.91 728.63,338.77 727.71,338.58 726.79,338.35 725.89,338.08 725.01,337.76 724.15,337.39 723.31,336.96 722.50,336.48 721.73,335.95 720.99,335.38 720.28,334.77 719.62,334.11 719.00,333.42 718.42,332.69 717.89,331.93 717.40,331.14 716.96,330.33 716.57,329.49 716.23,328.64 715.94,327.77 715.70,326.89 715.50,326.00 715.36,325.10 715.27,324.19 715.23,323.29 715.23,322.38 715.29,321.48 715.39,320.58 715.54,319.69 715.73,318.81 715.97,317.95 716.26,317.09 716.59,316.26 716.96,315.44 717.38,314.64 717.84,313.86 718.33,313.10 718.87,312.38 719.45,311.68 720.07,311.01 720.72,310.37 721.41,309.77 722.13,309.20 722.88,308.68 723.67,308.20 724.48,307.76 725.32,307.37 726.19,307.03 727.04,306.74 727.84,306.55 728.63,306.44 729.44,306.43 730.26,306.50 731.07,306.66 731.87,306.91 732.64,307.23 733.39,307.63 734.11,308.10 734.78,308.62 735.42,309.19 736.03,309.79 736.64,310.39 737.23,311.00 737.81,311.63 738.37,312.26 738.91,312.91 739.43,313.56 739.94,314.22 740.43,314.89 740.91,315.55Z"/><path d="M838.24,335.66 837.39,335.48 836.55,335.26 835.72,335.01 834.89,334.72 834.07,334.43 833.26,334.14 832.46,333.86 831.65,333.60 830.87,333.31 830.10,332.98 829.37,332.60 828.68,332.17 828.04,331.69 827.45,331.17 826.91,330.60 826.44,330.00 826.03,329.37 825.67,328.68 825.33,327.92 825.02,327.11 824.75,326.30 824.52,325.48 824.32,324.66 824.16,323.83 824.04,322.99 823.95,322.15 823.90,321.32 823.88,320.48 823.90,319.64 823.94,318.81 824.02,317.98 824.13,317.15 824.28,316.32 824.46,315.51 824.67,314.69 824.92,313.89 825.21,313.10 825.53,312.32 825.88,311.55 826.27,310.80 826.70,310.06 827.16,309.34 827.66,308.65 828.19,307.97 828.76,307.33 829.36,306.71 830.00,306.12 830.67,305.56 831.36,305.05 832.09,304.56 832.84,304.12 833.62,303.72 834.41,303.37 835.23,303.06 836.07,302.79 836.91,302.57 837.76,302.37 838.62,302.20 839.49,302.06 840.34,301.96 842.41,301.79 844.36,301.74 846.27,301.81 848.12,302.00 849.92,302.32 851.67,302.79 853.34,303.41 854.93,304.18 856.43,305.10 857.83,306.16 859.15,307.33 860.38,308.60 861.55,309.96 862.64,311.42 863.64,312.98 864.56,314.63 865.38,316.38 866.10,318.22 866.72,320.15 867.22,322.19 868.78,321.81 868.28,319.72 867.68,317.69 866.99,315.73 866.20,313.84 865.31,312.04 864.31,310.32 863.20,308.70 861.99,307.18 860.67,305.76 859.24,304.47 857.73,303.28 856.14,302.16 854.48,301.14 852.73,300.19 850.89,299.35 848.95,298.61 846.91,298.00 844.77,297.52 842.53,297.20 840.23,297.07 839.08,297.08 837.95,297.16 836.83,297.31 835.73,297.52 834.63,297.79 833.55,298.13 832.49,298.51 831.45,298.94 830.42,299.41 829.41,299.93 828.43,300.49 827.47,301.10 826.53,301.75 825.63,302.44 824.76,303.18 823.92,303.96 823.12,304.78 822.36,305.64 821.63,306.54 820.96,307.48 820.33,308.45 819.75,309.45 819.22,310.49 818.75,311.55 818.33,312.64 817.98,313.74 817.68,314.87 817.44,316.02 817.27,317.17 817.16,318.33 817.11,319.50 817.13,320.67 817.22,321.83 817.37,322.99 817.58,324.13 817.86,325.26 818.19,326.37 818.58,327.46 819.03,328.52 819.52,329.56 820.07,330.57 820.68,331.58 821.39,332.58 822.19,333.54 823.06,334.42 823.99,335.21 824.97,335.92 825.97,336.55 827.00,337.10 828.03,337.57 829.06,337.99 830.08,338.34 831.08,338.64 832.08,338.85 833.05,338.98 834.01,339.06 834.93,339.12 835.83,339.18 836.71,339.27 837.58,339.40Z"/></g></g></g></svg>
<div class="t" style="left:708px;top:361px;font-size:47.8px;color:#d3007e;-webkit-text-stroke:0.7px #d3007e;letter-spacing:0;transform-origin:0 0;transform:scaleX(0.835)">BEAUTY</div>
<div class="t" style="left:888px;top:361px;font-size:47.8px;color:#d3007e;-webkit-text-stroke:0.7px #d3007e;letter-spacing:0;transform-origin:0 0;transform:scaleX(0.886)">SALON</div>
<div class="t" style="left:764px;top:413px;font-style:italic;font-size:27px;color:#7d7e80;-webkit-text-stroke:0.3px #7d7e80;letter-spacing:0;transform-origin:0 0;transform:scaleX(1.09) skewX(-10deg)">Ihr neuer Termin</div>
<div class="a" style="left:707px;top:587px;width:323px;height:234px;background:#d3007e;border-radius:19px"></div>
<div class="t" style="left:715px;top:612px;font-size:31.5px;color:#fff;-webkit-text-stroke:0.5px #fff;letter-spacing:0;transform-origin:0 0;letter-spacing:1px;transform:scaleX(0.86)">ZEIT</div>
<div class="t" style="left:785px;top:612px;font-size:31.5px;color:#fff;-webkit-text-stroke:0.5px #fff;letter-spacing:0;transform-origin:0 0;letter-spacing:0.5px;transform:scaleX(0.88)">ZU</div>
<div class="t" style="left:829px;top:612px;font-size:31.5px;color:#fff;-webkit-text-stroke:0.5px #fff;letter-spacing:0;transform-origin:0 0;transform:scaleX(0.927)">ENTSPANNEN</div>
<svg class="a" style="left:0px;top:0px;left:0;top:0" width="1920" height="1039" viewBox="0 0 1920 1039"><circle cx="717.00" cy="664" r="2.1" fill="#fff"/><circle cx="730.72" cy="664" r="2.1" fill="#fff"/><circle cx="744.44" cy="664" r="2.1" fill="#fff"/><circle cx="758.16" cy="664" r="2.1" fill="#fff"/><circle cx="771.88" cy="664" r="2.1" fill="#fff"/><circle cx="785.60" cy="664" r="2.1" fill="#fff"/><circle cx="799.32" cy="664" r="2.1" fill="#fff"/><circle cx="813.04" cy="664" r="2.1" fill="#fff"/><circle cx="826.76" cy="664" r="2.1" fill="#fff"/><circle cx="840.48" cy="664" r="2.1" fill="#fff"/><circle cx="854.20" cy="664" r="2.1" fill="#fff"/><circle cx="867.92" cy="664" r="2.1" fill="#fff"/><circle cx="881.64" cy="664" r="2.1" fill="#fff"/><circle cx="895.36" cy="664" r="2.1" fill="#fff"/><circle cx="909.08" cy="664" r="2.1" fill="#fff"/><circle cx="922.80" cy="664" r="2.1" fill="#fff"/><circle cx="936.52" cy="664" r="2.1" fill="#fff"/><circle cx="950.24" cy="664" r="2.1" fill="#fff"/><circle cx="963.96" cy="664" r="2.1" fill="#fff"/><circle cx="977.68" cy="664" r="2.1" fill="#fff"/><circle cx="991.40" cy="664" r="2.1" fill="#fff"/><circle cx="1005.12" cy="664" r="2.1" fill="#fff"/><circle cx="1018.84" cy="664" r="2.1" fill="#fff"/></svg>
<div class="t" style="left:869px;top:683px;font-style:italic;font-size:27px;color:#fff;-webkit-text-stroke:0.3px #fff;letter-spacing:0;transform-origin:0 0;transform:scaleX(1.02) skewX(-12deg)">Beauty</div>
<div class="t" style="left:869px;top:725px;font-style:italic;font-size:27px;color:#fff;-webkit-text-stroke:0.3px #fff;letter-spacing:0;transform-origin:0 0;transform:scaleX(1.08) skewX(-12deg)">Kosmetik</div>
<div class="t" style="left:869px;top:767px;font-style:italic;font-size:27px;color:#fff;-webkit-text-stroke:0.3px #fff;letter-spacing:0;transform-origin:0 0;transform:scaleX(0.94) skewX(-12deg)">Wellness</div>
<svg class="a" style="left:0px;top:0px;left:0;top:0" width="1920" height="1039" viewBox="0 0 1920 1039"><g stroke="#3d8c4a" fill="none"><rect x="866.5" y="679.5" width="120" height="120"/><path d="M866 705.5h86M866 747.5h119M866 789.5h103" stroke-width="1"/><path d="M987 739.5h14"/></g><rect x="863.5" y="676.5" width="5" height="5" fill="#fff" stroke="#3d8c4a"/><rect x="923.5" y="676.5" width="5" height="5" fill="#fff" stroke="#3d8c4a"/><rect x="984.5" y="676.5" width="5" height="5" fill="#fff" stroke="#3d8c4a"/><rect x="863.5" y="736.5" width="5" height="5" fill="#fff" stroke="#3d8c4a"/><rect x="984.5" y="736.5" width="5" height="5" fill="#fff" stroke="#3d8c4a"/><rect x="863.5" y="796.5" width="5" height="5" fill="#fff" stroke="#3d8c4a"/><rect x="923.5" y="796.5" width="5" height="5" fill="#fff" stroke="#3d8c4a"/><rect x="984.5" y="796.5" width="5" height="5" fill="#fff" stroke="#3d8c4a"/><circle cx="1004" cy="739.5" r="3.2" fill="#fff" stroke="#3d8c4a"/></svg>
<div class="a" style="left:413px;top:57px;width:231px;height:277px;background:rgba(0,0,0,.35);filter:blur(2px)"></div>
<div class="a" style="left:411px;top:54px;width:231px;height:277px;background:#4f4f4f;border:1px solid #262626"></div>
<svg class="a" style="left:621px;top:59px;" width="16" height="10" viewBox="0 0 16 10"><path d="M0 3h5l-2.5 3z" fill="#d8d8d8"/><path d="M6 1h10M6 3.5h10M6 6h10M6 8.5h10" stroke="#d8d8d8" stroke-width="1.2"/></svg>
<div class="a" style="left:417px;top:72px;width:187px;height:22px;background:linear-gradient(#585858,#4c4c4c);border:1px solid #2a2a2a"></div>
<svg class="a" style="left:437px;top:75px;" width="17" height="16" viewBox="0 0 17 16"><rect x="2.5" y="2.5" width="12" height="11" fill="none" stroke="#d0d0d0"/><circle cx="2.5" cy="2.5" r="1.8" fill="#d0d0d0"/><circle cx="14.5" cy="2.5" r="1.8" fill="#d0d0d0"/><circle cx="2.5" cy="13.5" r="1.8" fill="#d0d0d0"/><circle cx="14.5" cy="13.5" r="1.8" fill="#d0d0d0"/><path d="M5 5h7M8.5 5v7M7 12h3" stroke="#e0e0e0" stroke-width="1.3"/></svg>
<div class="t" style="left:461px;top:78px;font-size:11px;color:#e0e0e0">Touch-Type-Textwerkzeug</div>
<div class="a" style="left:619px;top:68px;width:110px;height:18px;background:linear-gradient(#fdfdff,#e6e6ee);border:1px solid #8e8e94;box-shadow:1px 1px 1px rgba(0,0,0,.4)"></div>
<div class="t" style="left:624px;top:72px;font-size:11.5px;color:#3a3a3a;letter-spacing:0.2px">Zeichenbedienfeld</div>
<div class="a" style="left:416px;top:101px;width:221px;height:22px;border:1px solid #e8892b;background:#4f4f4f"></div>
<div class="a" style="left:417px;top:102px;width:199px;height:20px;background:linear-gradient(#adadad,#a3a3a3);border:1px solid #2b2b2b"></div>
<svg class="a" style="left:420px;top:104px;" width="20" height="16" viewBox="0 0 20 16"><circle cx="9" cy="6.5" r="4.5" fill="none" stroke="#222" stroke-width="1.3"/><path d="M5.5 9.5L1.5 13.5" stroke="#222" stroke-width="1.5"/><path d="M13 11h5l-2.5 3z" fill="#222"/></svg>
<div class="a" style="left:442px;top:104px;width:67px;height:15px;background:#3f86d9"></div>
<div class="t" style="left:443px;top:106px;font-size:11px;color:#fff">Wisdom Script</div>
<div class="a" style="left:599px;top:104px;width:13px;height:14px;background:#555;border:1px solid #333;border-radius:2px"></div>
<svg class="a" style="left:601px;top:106px;" width="9" height="10" viewBox="0 0 9 10"><path d="M1 1.5l7 7M8 1.5l-7 7" stroke="#e8e8e8" stroke-width="1.5"/></svg>
<div class="dd" style="left:616px;top:102px;width:20px;height:20px;"></div>
<div class="fld" style="left:417px;top:128px;width:200px;height:19px;"><span style="position:absolute;left:3px;top:3px;">Regular</span></div>
<div class="dd" style="left:616px;top:128px;width:19px;height:19px;"></div>
<div class="a" style="left:416px;top:153px;width:220px;height:1px;background:#3a3a3a"></div>
<div class="a" style="left:416px;top:154px;width:220px;height:1px;background:#5a5a5a"></div>
<div class="a" style="left:416px;top:212px;width:220px;height:1px;background:#3a3a3a"></div>
<div class="a" style="left:416px;top:213px;width:220px;height:1px;background:#5a5a5a"></div>
<div class="a" style="left:416px;top:271px;width:220px;height:1px;background:#3a3a3a"></div>
<div class="a" style="left:416px;top:272px;width:220px;height:1px;background:#5a5a5a"></div>
<div class="a" style="left:416px;top:297px;width:220px;height:1px;background:#3a3a3a"></div>
<div class="a" style="left:416px;top:298px;width:220px;height:1px;background:#5a5a5a"></div>
<svg class="a" style="left:416px;top:161px;" width="20" height="20" viewBox="0 0 20 20"><text x="1" y="16" font-family="Liberation Serif" font-size="12" fill="#999">T</text><text x="6" y="15" font-family="Liberation Serif" font-size="17" fill="#c8c8c8">T</text></svg>
<div class="sp" style="left:438px;top:162px;width:18px;height:18px;"></div>
<div class="fld" style="left:456px;top:162px;width:47px;height:18px;"><span style="position:absolute;left:3px;top:3px;">10 pt</span></div>
<div class="dd" style="left:502px;top:162px;width:17px;height:18px;"></div>
<svg class="a" style="left:533px;top:161px;" width="20" height="20" viewBox="0 0 20 20"><text x="7" y="9" font-family="Liberation Sans" font-size="9" fill="#c8c8c8">A</text><text x="7" y="18" font-family="Liberation Sans" font-size="9" fill="#c8c8c8">A</text><path d="M3 6v12M1 8l2-2 2 2M1 16l2 2 2-2" stroke="#c8c8c8" fill="none"/></svg>
<div class="sp" style="left:556px;top:162px;width:18px;height:18px;"></div>
<div class="fld" style="left:574px;top:162px;width:46px;height:18px;"><span style="position:absolute;left:3px;top:3px;">14 pt</span></div>
<div class="dd" style="left:619px;top:162px;width:17px;height:18px;"></div>
<svg class="a" style="left:416px;top:187px;" width="20" height="20" viewBox="0 0 20 20"><text x="0" y="15" font-family="Liberation Sans" font-size="14" fill="#c8c8c8" letter-spacing="-3">VA</text><path d="M9 17h8M9 17l2-2" stroke="#c8c8c8"/></svg>
<div class="sp" style="left:438px;top:188px;width:18px;height:18px;"></div>
<div class="fld" style="left:456px;top:188px;width:47px;height:18px;"><span style="position:absolute;left:3px;top:3px;">Metrisch</span></div>
<div class="dd" style="left:502px;top:188px;width:17px;height:18px;"></div>
<svg class="a" style="left:533px;top:187px;" width="20" height="20" viewBox="0 0 20 20"><text x="1" y="12" font-family="Liberation Sans" font-size="12" fill="#c8c8c8" text-decoration="underline">VA</text><path d="M2 16h14M2 16l2-2M2 16l2 2M16 16l-2-2M16 16l-2 2" stroke="#c8c8c8" fill="none"/></svg>
<div class="sp" style="left:556px;top:188px;width:18px;height:18px;"></div>
<div class="fld" style="left:574px;top:188px;width:46px;height:18px;"><span style="position:absolute;left:3px;top:3px;">0</span></div>
<div class="dd" style="left:619px;top:188px;width:17px;height:18px;"></div>
<svg class="a" style="left:416px;top:220px;" width="20" height="20" viewBox="0 0 20 20"><text x="6" y="16" font-family="Liberation Serif" font-size="17" fill="#c8c8c8">T</text><path d="M3 4v13M1 6l2-2 2 2M1 15l2 2 2-2" stroke="#c8c8c8" fill="none"/></svg>
<div class="sp" style="left:438px;top:221px;width:18px;height:18px;"></div>
<div class="fld" style="left:456px;top:221px;width:47px;height:18px;"><span style="position:absolute;left:3px;top:3px;">100%</span></div>
<div class="dd" style="left:502px;top:221px;width:17px;height:18px;"></div>
<svg class="a" style="left:533px;top:220px;" width="20" height="20" viewBox="0 0 20 20"><text x="3" y="13" font-family="Liberation Serif" font-size="16" fill="#c8c8c8">T</text><path d="M1 17h16M1 17l2-2M1 17l2 2M17 17l-2-2M17 17l-2 2" stroke="#c8c8c8" fill="none"/></svg>
<div class="sp" style="left:556px;top:221px;width:18px;height:18px;"></div>
<div class="fld" style="left:574px;top:221px;width:46px;height:18px;"><span style="position:absolute;left:3px;top:3px;">100%</span></div>
<div class="dd" style="left:619px;top:221px;width:17px;height:18px;"></div>
<svg class="a" style="left:416px;top:246px;" width="20" height="20" viewBox="0 0 20 20"><text x="1" y="13" font-family="Liberation Sans" font-size="12" fill="#c8c8c8">A</text><text x="10" y="9" font-family="Liberation Sans" font-size="8" fill="#c8c8c8">a</text><path d="M1 15h9M13 12v6" stroke="#c8c8c8"/></svg>
<div class="sp" style="left:438px;top:247px;width:18px;height:18px;"></div>
<div class="fld" style="left:456px;top:247px;width:47px;height:18px;"><span style="position:absolute;left:3px;top:3px;">0 pt</span></div>
<div class="dd" style="left:502px;top:247px;width:17px;height:18px;"></div>
<svg class="a" style="left:533px;top:246px;" width="20" height="20" viewBox="0 0 20 20"><circle cx="10" cy="10" r="7.5" fill="none" stroke="#c8c8c8" stroke-width="1.2"/><text x="5.5" y="15" font-family="Liberation Serif" font-size="12" fill="#c8c8c8">T</text></svg>
<div class="sp" style="left:556px;top:247px;width:18px;height:18px;"></div>
<div class="fld" style="left:574px;top:247px;width:46px;height:18px;"><span style="position:absolute;left:3px;top:3px;">0°</span></div>
<div class="dd" style="left:619px;top:247px;width:17px;height:18px;"></div>
<svg class="a" style="left:419px;top:276px;" width="22" height="18" viewBox="0 0 22 18"><text x="0" y="14" font-family="Liberation Serif" font-size="14" fill="#c8c8c8">TT</text></svg>
<svg class="a" style="left:450px;top:276px;" width="22" height="18" viewBox="0 0 22 18"><text x="0" y="14" font-family="Liberation Serif" font-size="14" fill="#c8c8c8">T<tspan font-size="10">T</tspan></text></svg>
<svg class="a" style="left:502px;top:276px;" width="22" height="18" viewBox="0 0 22 18"><text x="0" y="14" font-family="Liberation Serif" font-size="14" fill="#c8c8c8">T</text><text x="10" y="7" font-family="Liberation Serif" font-size="7" fill="#c8c8c8">1</text></svg>
<svg class="a" style="left:533px;top:276px;" width="22" height="18" viewBox="0 0 22 18"><text x="0" y="14" font-family="Liberation Serif" font-size="14" fill="#c8c8c8">T</text><text x="10" y="16" font-family="Liberation Serif" font-size="7" fill="#c8c8c8">1</text></svg>
<svg class="a" style="left:588px;top:276px;" width="22" height="18" viewBox="0 0 22 18"><text x="1" y="13" font-family="Liberation Serif" font-size="14" fill="#c8c8c8">T</text><path d="M1 16h10" stroke="#c8c8c8"/></svg>
<svg class="a" style="left:617px;top:276px;" width="22" height="18" viewBox="0 0 22 18"><text x="1" y="14" font-family="Liberation Serif" font-size="14" fill="#c8c8c8">T</text><path d="M0 8.5h12" stroke="#c8c8c8"/></svg>
<div class="dd n" style="left:417px;top:305px;width:101px;height:18px;background:linear-gradient(#585858,#4c4c4c)"></div>
<div class="a" style="left:502px;top:308px;width:1px;height:12px;background:#777"></div>
<svg class="a" style="left:503px;top:306px;" width="15" height="16" viewBox="0 0 15 16"><path d="M3 6h8l-4 5z" fill="#d4d4d4"/></svg>
<div class="t" style="left:424px;top:309px;font-size:11px;color:#dedede">Deutsch: Ref...</div>
<svg class="a" style="left:530px;top:305px;" width="18" height="18" viewBox="0 0 18 18"><text x="1" y="12" font-family="Liberation Sans" font-size="10" fill="#c8c8c8">a</text><text x="7" y="16" font-family="Liberation Sans" font-size="12" fill="#c8c8c8">a</text></svg>
<div class="dd n" style="left:556px;top:305px;width:79px;height:18px;background:linear-gradient(#585858,#4c4c4c)"></div>
<div class="a" style="left:618px;top:308px;width:1px;height:12px;background:#777"></div>
<svg class="a" style="left:619px;top:306px;" width="15" height="16" viewBox="0 0 15 16"><path d="M3 6h8l-4 5z" fill="#d4d4d4"/></svg>
<div class="t" style="left:561px;top:309px;font-size:11px;color:#dedede">Scharf</div>
<style>.dd.n:after{display:none}</style>
<div class="a" style="left:134px;top:752px;width:232px;height:242px;background:#4b4b4b;border:1px solid #262626"></div>
<div class="a" style="left:135px;top:753px;width:230px;height:12px;background:#2e2e2e"></div>
<svg class="a" style="left:337px;top:756px;" width="10" height="7" viewBox="0 0 10 7"><path d="M4 0v6L0 3zM9 0v6L5 3z" fill="#d0d0d0"/></svg>
<svg class="a" style="left:353px;top:756px;" width="8" height="8" viewBox="0 0 8 8"><path d="M1 1l6 6M7 1L1 7" stroke="#d8d8d8" stroke-width="1.5"/></svg>
<div class="a" style="left:135px;top:765px;width:230px;height:18px;background:#303030"></div>
<div class="a" style="left:135px;top:766px;width:91px;height:17px;background:#4b4b4b"></div>
<div class="a" style="left:226px;top:766px;width:64px;height:17px;background:#3a3a3a;border-left:1px solid #2a2a2a;border-right:1px solid #2a2a2a"></div>
<svg class="a" style="left:139px;top:769px;" width="7" height="11" viewBox="0 0 7 11"><path d="M0.5 4.2L3.5 1.2l3 3M0.5 6.8l3 3 3-3" fill="none" stroke="#d0d0d0" stroke-width="1.1"/></svg>
<div class="t" style="left:148px;top:769px;font-size:11px;color:#e8e8e8;font-weight:bold;letter-spacing:-0.5px">Transformieren</div>
<div class="t" style="left:233px;top:769px;font-size:11px;color:#9a9a9a;font-weight:bold;letter-spacing:-0.5px">Ausrichten</div>
<svg class="a" style="left:346px;top:769px;" width="16" height="10" viewBox="0 0 16 10"><path d="M0 3h5l-2.5 3z" fill="#d8d8d8"/><path d="M6 1h10M6 3.5h10M6 6h10M6 8.5h10" stroke="#d8d8d8" stroke-width="1.2"/></svg>
<svg class="a" style="left:139px;top:801px;" width="22" height="22" viewBox="0 0 22 22"><rect x="1.5" y="1.5" width="4" height="4" fill="none" stroke="#d4d4d4"/><rect x="8.5" y="1.5" width="4" height="4" fill="#e0e0e0" stroke="#d4d4d4"/><rect x="15.5" y="1.5" width="4" height="4" fill="none" stroke="#d4d4d4"/><rect x="1.5" y="8.5" width="4" height="4" fill="none" stroke="#d4d4d4"/><rect x="8.5" y="8.5" width="4" height="4" fill="none" stroke="#d4d4d4"/><rect x="15.5" y="8.5" width="4" height="4" fill="none" stroke="#d4d4d4"/><rect x="1.5" y="15.5" width="4" height="4" fill="none" stroke="#d4d4d4"/><rect x="8.5" y="15.5" width="4" height="4" fill="none" stroke="#d4d4d4"/><rect x="15.5" y="15.5" width="4" height="4" fill="none" stroke="#d4d4d4"/><path d="M5.5 3.5h3M12.5 3.5h3M5.5 10.5h3M12.5 10.5h3M5.5 17.5h3M12.5 17.5h3M3.5 5.5v3M3.5 12.5v3M10.5 5.5v3M10.5 12.5v3M17.5 5.5v3M17.5 12.5v3" stroke="#d4d4d4"/></svg>
<div class="t" style="left:172px;top:795px;font-size:11px;color:#dcdcdc;font-weight:bold">x:</div>
<div class="fld" style="left:187px;top:790px;width:57px;height:19px;"><span style="position:absolute;left:3px;top:3px;">34,232 mm</span></div>
<div class="t" style="left:250px;top:795px;font-size:11px;color:#dcdcdc;font-weight:bold">B:</div>
<div class="fld" style="left:266px;top:790px;width:57px;height:19px;"><span style="position:absolute;left:3px;top:3px;">14,062 mm</span></div>
<div class="t" style="left:172px;top:821px;font-size:11px;color:#dcdcdc;font-weight:bold">y:</div>
<div class="fld" style="left:187px;top:816px;width:57px;height:19px;"><span style="position:absolute;left:3px;top:3px;">56,12 mm</span></div>
<div class="t" style="left:250px;top:821px;font-size:11px;color:#dcdcdc;font-weight:bold">H:</div>
<div class="fld" style="left:266px;top:816px;width:57px;height:19px;"><span style="position:absolute;left:3px;top:3px;">14,199 mm</span></div>
<svg class="a" style="left:330px;top:803px;" width="20" height="18" viewBox="0 0 20 18"><rect x="6.5" y="3" width="6" height="12" rx="3" fill="none" stroke="#d8d8d8" stroke-width="1.8"/><path d="M1 9h4M14 9h4M2 4l3 2M17 4l-3 2M2 14l3-2M17 14l-3-2" stroke="#d8d8d8"/></svg>
<svg class="a" style="left:167px;top:845px;" width="20" height="12" viewBox="0 0 20 12"><path d="M1 11L11 1M1 11h12" stroke="#d0d0d0" fill="none"/><path d="M6 6q2 2 2 5" stroke="#d0d0d0" fill="none"/></svg>
<div class="t" style="left:180px;top:847px;font-size:11px;color:#dcdcdc">:</div>
<div class="fld" style="left:187px;top:842px;width:41px;height:19px;"><span style="position:absolute;left:3px;top:3px;">0°</span></div>
<div class="dd" style="left:227px;top:842px;width:15px;height:19px;"></div>
<svg class="a" style="left:248px;top:845px;" width="16" height="12" viewBox="0 0 16 12"><path d="M1 11L5 1h10L11 11z" fill="none" stroke="#d0d0d0"/></svg>
<div class="t" style="left:262px;top:847px;font-size:11px;color:#dcdcdc">:</div>
<div class="fld" style="left:268px;top:842px;width:41px;height:19px;"><span style="position:absolute;left:3px;top:3px;">0°</span></div>
<div class="dd" style="left:308px;top:842px;width:15px;height:19px;"></div>
<div class="a" style="left:135px;top:867px;width:230px;height:3px;background:#2a2a2a"></div>
<div class="a" style="left:135px;top:870px;width:230px;height:17px;background:#303030"></div>
<div class="a" style="left:135px;top:870px;width:64px;height:17px;background:#4b4b4b;border-right:1px solid #2a2a2a"></div>
<div class="t" style="left:141px;top:873px;font-size:11px;color:#e8e8e8;font-weight:bold;letter-spacing:-0.5px">Pathfinder</div>
<svg class="a" style="left:346px;top:873px;" width="16" height="10" viewBox="0 0 16 10"><path d="M0 3h5l-2.5 3z" fill="#d8d8d8"/><path d="M6 1h10M6 3.5h10M6 6h10M6 8.5h10" stroke="#d8d8d8" stroke-width="1.2"/></svg>
<div class="t" style="left:140px;top:894px;font-size:11px;color:#e0e0e0;letter-spacing:-0.2px">Formmodi:</div>
<svg class="a" style="left:145px;top:916px;" width="16" height="16" viewBox="0 0 16 16"><rect x="1" y="1" width="10" height="10" fill="#8a8a8a" stroke="#c4c4c4"/><rect x="5" y="5" width="10" height="10" fill="#8a8a8a" stroke="#c4c4c4"/><rect x="5" y="5" width="6" height="6" fill="#8a8a8a"/></svg>
<svg class="a" style="left:177px;top:916px;" width="16" height="16" viewBox="0 0 16 16"><rect x="1" y="1" width="10" height="10" fill="#8a8a8a" stroke="#c4c4c4"/><rect x="5" y="5" width="10" height="10" fill="#4b4b4b" stroke="#777"/></svg>
<svg class="a" style="left:209px;top:916px;" width="16" height="16" viewBox="0 0 16 16"><rect x="1" y="1" width="10" height="10" fill="none" stroke="#c4c4c4"/><rect x="5" y="5" width="10" height="10" fill="none" stroke="#c4c4c4"/><rect x="5" y="5" width="6" height="6" fill="#8a8a8a"/></svg>
<svg class="a" style="left:242px;top:916px;" width="16" height="16" viewBox="0 0 16 16"><rect x="1" y="1" width="10" height="10" fill="#8a8a8a" stroke="#c4c4c4"/><rect x="5" y="5" width="10" height="10" fill="#8a8a8a" stroke="#c4c4c4"/><rect x="5" y="5" width="6" height="6" fill="#4b4b4b"/></svg>
<div class="a" style="left:271px;top:915px;width:87px;height:19px;background:#4e4e4e;border:1px solid #3c3c3c"></div>
<div class="t" style="left:288px;top:919px;font-size:11px;color:#8c8c8c">Umwandeln</div>
<div class="t" style="left:140px;top:944px;font-size:11px;color:#e0e0e0;letter-spacing:-0.2px">Pathfinder:</div>
<svg class="a" style="left:148px;top:967px;" width="16" height="16" viewBox="0 0 16 16"><rect x="1" y="1" width="10" height="10" fill="#8a8a8a" stroke="#c4c4c4"/><rect x="5" y="5" width="10" height="10" fill="#8a8a8a" stroke="#c4c4c4"/><rect x="5" y="5" width="6" height="6" fill="#8a8a8a"/></svg>
<svg class="a" style="left:185px;top:967px;" width="16" height="16" viewBox="0 0 16 16"><rect x="1" y="1" width="10" height="10" fill="#8a8a8a" stroke="#c4c4c4"/><rect x="5" y="5" width="10" height="10" fill="#4b4b4b" stroke="#777"/></svg>
<svg class="a" style="left:222px;top:967px;" width="16" height="16" viewBox="0 0 16 16"><rect x="1" y="1" width="10" height="10" fill="none" stroke="#c4c4c4"/><rect x="5" y="5" width="10" height="10" fill="none" stroke="#c4c4c4"/><rect x="5" y="5" width="6" height="6" fill="#8a8a8a"/></svg>
<svg class="a" style="left:259px;top:967px;" width="16" height="16" viewBox="0 0 16 16"><rect x="1" y="1" width="10" height="10" fill="#8a8a8a" stroke="#c4c4c4"/><rect x="5" y="5" width="10" height="10" fill="#8a8a8a" stroke="#c4c4c4"/><rect x="5" y="5" width="6" height="6" fill="#4b4b4b"/></svg>
<svg class="a" style="left:297px;top:967px;" width="16" height="16" viewBox="0 0 16 16"><rect x="1" y="1" width="10" height="10" fill="#8a8a8a" stroke="#c4c4c4"/><rect x="5" y="5" width="10" height="10" fill="#8a8a8a" stroke="#c4c4c4"/><rect x="5" y="5" width="6" height="6" fill="#8a8a8a"/></svg>
<svg class="a" style="left:335px;top:967px;" width="16" height="16" viewBox="0 0 16 16"><rect x="1" y="1" width="10" height="10" fill="#8a8a8a" stroke="#c4c4c4"/><rect x="5" y="5" width="10" height="10" fill="#4b4b4b" stroke="#777"/></svg>
<div class="a" style="left:1357px;top:65px;width:563px;height:974px;background:#4b4b4b"></div>
<div class="a" style="left:1357px;top:65px;width:298px;height:12px;background:#2e2e2e"></div>
<svg class="a" style="left:1644px;top:69px;" width="9" height="7" viewBox="0 0 9 7"><path d="M0 0v6l4-3zM5 0v6l4-3z" fill="#c8c8c8"/></svg>
<div class="a" style="left:1655px;top:65px;width:3px;height:974px;background:#262626"></div>
<div class="a" style="left:1658px;top:65px;width:262px;height:12px;background:#2e2e2e"></div>
<svg class="a" style="left:1907px;top:69px;" width="9" height="7" viewBox="0 0 9 7"><path d="M0 0v6l4-3zM5 0v6l4-3z" fill="#c8c8c8"/></svg>
<div class="a" style="left:1357px;top:76px;width:563px;height:1px;background:#262626"></div>
<div class="a" style="left:1357px;top:77px;width:298px;height:17px;background:#303030"></div>
<div class="a" style="left:1357px;top:94px;width:298px;height:1px;background:#2a2a2a"></div>
<div class="a" style="left:1357px;top:78px;width:47px;height:17px;background:#4b4b4b"></div>
<div class="t" style="left:1363px;top:81px;font-size:11px;font-weight:bold;letter-spacing:-0.5px;color:#e8e8e8">Ebenen</div>
<svg class="a" style="left:1637px;top:81px;" width="16" height="10" viewBox="0 0 16 10"><path d="M0 3h5l-2.5 3z" fill="#d8d8d8"/><path d="M6 1h10M6 3.5h10M6 6h10M6 8.5h10" stroke="#d8d8d8" stroke-width="1.2"/></svg>
<div class="a" style="left:1362px;top:100px;width:288px;height:920px;background:#494949;border:1px solid #2e2e2e"></div>
<div class="a" style="left:1363px;top:101px;width:286px;height:20px;background:#5b6577"></div>
<div class="a" style="left:1363px;top:121px;width:286px;height:1px;background:#333"></div>
<div class="a" style="left:1383px;top:101px;width:1px;height:20px;background:#3a3a3a"></div>
<div class="a" style="left:1404px;top:101px;width:1px;height:20px;background:#3a3a3a"></div>
<div class="a" style="left:1410px;top:101px;width:1px;height:20px;background:#3a3a3a"></div>
<div class="a" style="left:1614px;top:101px;width:1px;height:20px;background:#3a3a3a"></div>
<div class="a" style="left:1406px;top:102px;width:4px;height:18px;background:#12843c"></div>
<svg class="a" style="left:1365px;top:105px;" width="15" height="11" viewBox="0 0 15 11"><path d="M0.5 5.5Q7.5 -3 14.5 5.5Q7.5 14 0.5 5.5z" fill="#a8a8a8"/><circle cx="7.5" cy="5.5" r="3.3" fill="#3c3c3c"/><circle cx="8.3" cy="4.6" r="1.1" fill="#e0e0e0"/></svg>
<svg class="a" style="left:1413px;top:107px;" width="10" height="8" viewBox="0 0 10 8"><path d="M0 0h10L5 7z" fill="#d0d0d0"/></svg>
<div class="a" style="left:1432px;top:102px;width:18px;height:18px;background:#fff;border:1px solid #111"></div>
<svg class="a" style="left:1433px;top:103px;" width="16" height="16" viewBox="0 0 16 16"><rect x="3" y="1" width="10" height="1.5" fill="#888"/><rect x="2" y="4" width="12" height="2" fill="#d3007e"/><rect x="4" y="7" width="8" height="1.2" fill="#888"/><rect x="3" y="9" width="10" height="7" fill="#d3007e"/><rect x="5" y="11" width="6" height="1" fill="#fff"/></svg>
<div class="t" style="left:1455px;top:106px;font-size:11px;color:#e4e4e4">Vorderseite</div>
<svg class="a" style="left:1616px;top:103px;" width="16" height="16" viewBox="0 0 16 16"><circle cx="8" cy="8" r="4.5" fill="none" stroke="#c8c8c8"/></svg>
<div class="a" style="left:1635px;top:108px;width:7px;height:7px;background:#118a3c;border:1px solid #111"></div>
<div class="a" style="left:1363px;top:122px;width:286px;height:20px;background:#535353"></div>
<div class="a" style="left:1363px;top:142px;width:286px;height:1px;background:#333"></div>
<div class="a" style="left:1383px;top:122px;width:1px;height:20px;background:#3a3a3a"></div>
<div class="a" style="left:1404px;top:122px;width:1px;height:20px;background:#3a3a3a"></div>
<div class="a" style="left:1410px;top:122px;width:1px;height:20px;background:#3a3a3a"></div>
<div class="a" style="left:1614px;top:122px;width:1px;height:20px;background:#3a3a3a"></div>
<div class="a" style="left:1406px;top:123px;width:4px;height:18px;background:#12843c"></div>
<svg class="a" style="left:1365px;top:126px;" width="15" height="11" viewBox="0 0 15 11"><path d="M0.5 5.5Q7.5 -3 14.5 5.5Q7.5 14 0.5 5.5z" fill="#a8a8a8"/><circle cx="7.5" cy="5.5" r="3.3" fill="#3c3c3c"/><circle cx="8.3" cy="4.6" r="1.1" fill="#e0e0e0"/></svg>
<div class="a" style="left:1452px;top:123px;width:18px;height:18px;background:#fff;border:1px solid #111"></div>
<div class="t" style="left:1475px;top:127px;font-size:11px;color:#e4e4e4">&lt;Pfad&gt;</div>
<svg class="a" style="left:1616px;top:124px;" width="16" height="16" viewBox="0 0 16 16"><circle cx="8" cy="8" r="4.5" fill="#a0a0a0" stroke="#bbb"/></svg>
<div class="a" style="left:1363px;top:143px;width:286px;height:20px;background:#535353"></div>
<div class="a" style="left:1363px;top:163px;width:286px;height:1px;background:#333"></div>
<div class="a" style="left:1383px;top:143px;width:1px;height:20px;background:#3a3a3a"></div>
<div class="a" style="left:1404px;top:143px;width:1px;height:20px;background:#3a3a3a"></div>
<div class="a" style="left:1410px;top:143px;width:1px;height:20px;background:#3a3a3a"></div>
<div class="a" style="left:1614px;top:143px;width:1px;height:20px;background:#3a3a3a"></div>
<div class="a" style="left:1406px;top:144px;width:4px;height:18px;background:#12843c"></div>
<svg class="a" style="left:1365px;top:147px;" width="15" height="11" viewBox="0 0 15 11"><path d="M0.5 5.5Q7.5 -3 14.5 5.5Q7.5 14 0.5 5.5z" fill="#a8a8a8"/><circle cx="7.5" cy="5.5" r="3.3" fill="#3c3c3c"/><circle cx="8.3" cy="4.6" r="1.1" fill="#e0e0e0"/></svg>
<div class="a" style="left:1452px;top:144px;width:18px;height:18px;background:#fff;border:1px solid #111"></div>
<div class="t" style="left:1475px;top:148px;font-size:11px;color:#e4e4e4">Beauty Kosmetik Well...</div>
<svg class="a" style="left:1616px;top:145px;" width="16" height="16" viewBox="0 0 16 16"><circle cx="8" cy="8" r="6" fill="none" stroke="#c8c8c8"/><circle cx="8" cy="8" r="3.8" fill="none" stroke="#c8c8c8"/></svg>
<div class="a" style="left:1635px;top:150px;width:7px;height:7px;background:#118a3c;border:1px solid #111"></div>
<div class="a" style="left:1363px;top:164px;width:286px;height:20px;background:#535353"></div>
<div class="a" style="left:1363px;top:184px;width:286px;height:1px;background:#333"></div>
<div class="a" style="left:1383px;top:164px;width:1px;height:20px;background:#3a3a3a"></div>
<div class="a" style="left:1404px;top:164px;width:1px;height:20px;background:#3a3a3a"></div>
<div class="a" style="left:1410px;top:164px;width:1px;height:20px;background:#3a3a3a"></div>
<div class="a" style="left:1614px;top:164px;width:1px;height:20px;background:#3a3a3a"></div>
<div class="a" style="left:1406px;top:165px;width:4px;height:18px;background:#12843c"></div>
<svg class="a" style="left:1365px;top:168px;" width="15" height="11" viewBox="0 0 15 11"><path d="M0.5 5.5Q7.5 -3 14.5 5.5Q7.5 14 0.5 5.5z" fill="#a8a8a8"/><circle cx="7.5" cy="5.5" r="3.3" fill="#3c3c3c"/><circle cx="8.3" cy="4.6" r="1.1" fill="#e0e0e0"/></svg>
<div class="a" style="left:1452px;top:165px;width:18px;height:18px;background:#fff;border:1px solid #111"></div>
<svg class="a" style="left:1453px;top:166px;" width="16" height="16" viewBox="0 0 16 16"><rect x="1" y="7" width="14" height="2" fill="#999"/></svg>
<div class="t" style="left:1475px;top:169px;font-size:11px;color:#e4e4e4">Ihr neuer Termin</div>
<svg class="a" style="left:1616px;top:166px;" width="16" height="16" viewBox="0 0 16 16"><circle cx="8" cy="8" r="4.5" fill="none" stroke="#c8c8c8"/></svg>
<div class="a" style="left:1363px;top:185px;width:286px;height:20px;background:#535353"></div>
<div class="a" style="left:1363px;top:205px;width:286px;height:1px;background:#333"></div>
<div class="a" style="left:1383px;top:185px;width:1px;height:20px;background:#3a3a3a"></div>
<div class="a" style="left:1404px;top:185px;width:1px;height:20px;background:#3a3a3a"></div>
<div class="a" style="left:1410px;top:185px;width:1px;height:20px;background:#3a3a3a"></div>
<div class="a" style="left:1614px;top:185px;width:1px;height:20px;background:#3a3a3a"></div>
<div class="a" style="left:1406px;top:186px;width:4px;height:18px;background:#12843c"></div>
<svg class="a" style="left:1365px;top:189px;" width="15" height="11" viewBox="0 0 15 11"><path d="M0.5 5.5Q7.5 -3 14.5 5.5Q7.5 14 0.5 5.5z" fill="#a8a8a8"/><circle cx="7.5" cy="5.5" r="3.3" fill="#3c3c3c"/><circle cx="8.3" cy="4.6" r="1.1" fill="#e0e0e0"/></svg>
<div class="a" style="left:1452px;top:186px;width:18px;height:18px;background:#fff;border:1px solid #111"></div>
<div class="t" style="left:1475px;top:190px;font-size:11px;color:#e4e4e4">zeit zu entspannen</div>
<svg class="a" style="left:1616px;top:187px;" width="16" height="16" viewBox="0 0 16 16"><circle cx="8" cy="8" r="4.5" fill="none" stroke="#c8c8c8"/></svg>
<div class="a" style="left:1363px;top:206px;width:286px;height:20px;background:#535353"></div>
<div class="a" style="left:1363px;top:226px;width:286px;height:1px;background:#333"></div>
<div class="a" style="left:1383px;top:206px;width:1px;height:20px;background:#3a3a3a"></div>
<div class="a" style="left:1404px;top:206px;width:1px;height:20px;background:#3a3a3a"></div>
<div class="a" style="left:1410px;top:206px;width:1px;height:20px;background:#3a3a3a"></div>
<div class="a" style="left:1614px;top:206px;width:1px;height:20px;background:#3a3a3a"></div>
<div class="a" style="left:1406px;top:207px;width:4px;height:18px;background:#12843c"></div>
<svg class="a" style="left:1365px;top:210px;" width="15" height="11" viewBox="0 0 15 11"><path d="M0.5 5.5Q7.5 -3 14.5 5.5Q7.5 14 0.5 5.5z" fill="#a8a8a8"/><circle cx="7.5" cy="5.5" r="3.3" fill="#3c3c3c"/><circle cx="8.3" cy="4.6" r="1.1" fill="#e0e0e0"/></svg>
<div class="a" style="left:1452px;top:207px;width:18px;height:18px;background:#fff;border:1px solid #111"></div>
<svg class="a" style="left:1453px;top:208px;" width="16" height="16" viewBox="0 0 16 16"><rect x="1" y="7" width="14" height="2.5" fill="#d3007e"/></svg>
<div class="t" style="left:1475px;top:211px;font-size:11px;color:#e4e4e4">Beauty Salon</div>
<svg class="a" style="left:1616px;top:208px;" width="16" height="16" viewBox="0 0 16 16"><circle cx="8" cy="8" r="4.5" fill="none" stroke="#c8c8c8"/></svg>
<div class="a" style="left:1363px;top:227px;width:286px;height:20px;background:#535353"></div>
<div class="a" style="left:1363px;top:247px;width:286px;height:1px;background:#333"></div>
<div class="a" style="left:1383px;top:227px;width:1px;height:20px;background:#3a3a3a"></div>
<div class="a" style="left:1404px;top:227px;width:1px;height:20px;background:#3a3a3a"></div>
<div class="a" style="left:1410px;top:227px;width:1px;height:20px;background:#3a3a3a"></div>
<div class="a" style="left:1614px;top:227px;width:1px;height:20px;background:#3a3a3a"></div>
<div class="a" style="left:1406px;top:228px;width:4px;height:18px;background:#12843c"></div>
<svg class="a" style="left:1365px;top:231px;" width="15" height="11" viewBox="0 0 15 11"><path d="M0.5 5.5Q7.5 -3 14.5 5.5Q7.5 14 0.5 5.5z" fill="#a8a8a8"/><circle cx="7.5" cy="5.5" r="3.3" fill="#3c3c3c"/><circle cx="8.3" cy="4.6" r="1.1" fill="#e0e0e0"/></svg>
<div class="a" style="left:1452px;top:228px;width:18px;height:18px;background:#fff;border:1px solid #111"></div>
<svg class="a" style="left:1453px;top:229px;" width="16" height="16" viewBox="0 0 16 16"><path d="M8 1q2 7 0 15q-2-8 0-15z" fill="#777"/></svg>
<div class="t" style="left:1475px;top:232px;font-size:11px;color:#e4e4e4">&lt;Pfad&gt;</div>
<svg class="a" style="left:1616px;top:229px;" width="16" height="16" viewBox="0 0 16 16"><circle cx="8" cy="8" r="4.5" fill="#a0a0a0" stroke="#bbb"/></svg>
<div class="a" style="left:1363px;top:248px;width:286px;height:20px;background:#535353"></div>
<div class="a" style="left:1363px;top:268px;width:286px;height:1px;background:#333"></div>
<div class="a" style="left:1383px;top:248px;width:1px;height:20px;background:#3a3a3a"></div>
<div class="a" style="left:1404px;top:248px;width:1px;height:20px;background:#3a3a3a"></div>
<div class="a" style="left:1410px;top:248px;width:1px;height:20px;background:#3a3a3a"></div>
<div class="a" style="left:1614px;top:248px;width:1px;height:20px;background:#3a3a3a"></div>
<div class="a" style="left:1406px;top:249px;width:4px;height:18px;background:#12843c"></div>
<svg class="a" style="left:1365px;top:252px;" width="15" height="11" viewBox="0 0 15 11"><path d="M0.5 5.5Q7.5 -3 14.5 5.5Q7.5 14 0.5 5.5z" fill="#a8a8a8"/><circle cx="7.5" cy="5.5" r="3.3" fill="#3c3c3c"/><circle cx="8.3" cy="4.6" r="1.1" fill="#e0e0e0"/></svg>
<div class="a" style="left:1452px;top:249px;width:18px;height:18px;background:#fff;border:1px solid #111"></div>
<svg class="a" style="left:1453px;top:250px;" width="16" height="16" viewBox="0 0 16 16"><path d="M3 2q10 5 11 13q-8-5-11-13z" fill="#777"/></svg>
<div class="t" style="left:1475px;top:253px;font-size:11px;color:#e4e4e4">&lt;Pfad&gt;</div>
<svg class="a" style="left:1616px;top:250px;" width="16" height="16" viewBox="0 0 16 16"><circle cx="8" cy="8" r="4.5" fill="#a0a0a0" stroke="#bbb"/></svg>
<div class="a" style="left:1363px;top:269px;width:286px;height:20px;background:#535353"></div>
<div class="a" style="left:1363px;top:289px;width:286px;height:1px;background:#333"></div>
<div class="a" style="left:1383px;top:269px;width:1px;height:20px;background:#3a3a3a"></div>
<div class="a" style="left:1404px;top:269px;width:1px;height:20px;background:#3a3a3a"></div>
<div class="a" style="left:1410px;top:269px;width:1px;height:20px;background:#3a3a3a"></div>
<div class="a" style="left:1614px;top:269px;width:1px;height:20px;background:#3a3a3a"></div>
<div class="a" style="left:1406px;top:270px;width:4px;height:18px;background:#12843c"></div>
<svg class="a" style="left:1365px;top:273px;" width="15" height="11" viewBox="0 0 15 11"><path d="M0.5 5.5Q7.5 -3 14.5 5.5Q7.5 14 0.5 5.5z" fill="#a8a8a8"/><circle cx="7.5" cy="5.5" r="3.3" fill="#3c3c3c"/><circle cx="8.3" cy="4.6" r="1.1" fill="#e0e0e0"/></svg>
<div class="a" style="left:1452px;top:270px;width:18px;height:18px;background:#fff;border:1px solid #111"></div>
<svg class="a" style="left:1453px;top:271px;" width="16" height="16" viewBox="0 0 16 16"><path d="M13 2q-10 5-11 13q8-5 11-13z" fill="#777"/></svg>
<div class="t" style="left:1475px;top:274px;font-size:11px;color:#e4e4e4">&lt;Pfad&gt;</div>
<svg class="a" style="left:1616px;top:271px;" width="16" height="16" viewBox="0 0 16 16"><circle cx="8" cy="8" r="4.5" fill="#a0a0a0" stroke="#bbb"/></svg>
<div class="a" style="left:1363px;top:290px;width:286px;height:20px;background:#535353"></div>
<div class="a" style="left:1363px;top:310px;width:286px;height:1px;background:#333"></div>
<div class="a" style="left:1383px;top:290px;width:1px;height:20px;background:#3a3a3a"></div>
<div class="a" style="left:1404px;top:290px;width:1px;height:20px;background:#3a3a3a"></div>
<div class="a" style="left:1410px;top:290px;width:1px;height:20px;background:#3a3a3a"></div>
<div class="a" style="left:1614px;top:290px;width:1px;height:20px;background:#3a3a3a"></div>
<div class="a" style="left:1406px;top:291px;width:4px;height:18px;background:#12843c"></div>
<svg class="a" style="left:1365px;top:294px;" width="15" height="11" viewBox="0 0 15 11"><path d="M0.5 5.5Q7.5 -3 14.5 5.5Q7.5 14 0.5 5.5z" fill="#a8a8a8"/><circle cx="7.5" cy="5.5" r="3.3" fill="#3c3c3c"/><circle cx="8.3" cy="4.6" r="1.1" fill="#e0e0e0"/></svg>
<div class="a" style="left:1452px;top:291px;width:18px;height:18px;background:#fff;border:1px solid #111"></div>
<svg class="a" style="left:1453px;top:292px;" width="16" height="16" viewBox="0 0 16 16"><path d="M1 8q3-4 5 0t5 0 4 0" fill="none" stroke="#888" stroke-width="1.2"/></svg>
<div class="t" style="left:1475px;top:295px;font-size:11px;color:#e4e4e4">&lt;Pfad&gt;</div>
<svg class="a" style="left:1616px;top:292px;" width="16" height="16" viewBox="0 0 16 16"><circle cx="8" cy="8" r="4.5" fill="none" stroke="#c8c8c8"/></svg>
<div class="a" style="left:1363px;top:311px;width:286px;height:20px;background:#535353"></div>
<div class="a" style="left:1363px;top:331px;width:286px;height:1px;background:#333"></div>
<div class="a" style="left:1383px;top:311px;width:1px;height:20px;background:#3a3a3a"></div>
<div class="a" style="left:1404px;top:311px;width:1px;height:20px;background:#3a3a3a"></div>
<div class="a" style="left:1410px;top:311px;width:1px;height:20px;background:#3a3a3a"></div>
<div class="a" style="left:1614px;top:311px;width:1px;height:20px;background:#3a3a3a"></div>
<div class="a" style="left:1406px;top:312px;width:4px;height:18px;background:#12843c"></div>
<svg class="a" style="left:1365px;top:315px;" width="15" height="11" viewBox="0 0 15 11"><path d="M0.5 5.5Q7.5 -3 14.5 5.5Q7.5 14 0.5 5.5z" fill="#a8a8a8"/><circle cx="7.5" cy="5.5" r="3.3" fill="#3c3c3c"/><circle cx="8.3" cy="4.6" r="1.1" fill="#e0e0e0"/></svg>
<div class="a" style="left:1452px;top:312px;width:18px;height:18px;background:#fff;border:1px solid #111"></div>
<svg class="a" style="left:1453px;top:313px;" width="16" height="16" viewBox="0 0 16 16"><path d="M1 8q3-4 5 0t5 0 4 0" fill="none" stroke="#888" stroke-width="1.2"/></svg>
<div class="t" style="left:1475px;top:316px;font-size:11px;color:#e4e4e4">&lt;Pfad&gt;</div>
<svg class="a" style="left:1616px;top:313px;" width="16" height="16" viewBox="0 0 16 16"><circle cx="8" cy="8" r="4.5" fill="none" stroke="#c8c8c8"/></svg>
<div class="a" style="left:1363px;top:332px;width:286px;height:20px;background:#535353"></div>
<div class="a" style="left:1363px;top:352px;width:286px;height:1px;background:#333"></div>
<div class="a" style="left:1383px;top:332px;width:1px;height:20px;background:#3a3a3a"></div>
<div class="a" style="left:1404px;top:332px;width:1px;height:20px;background:#3a3a3a"></div>
<div class="a" style="left:1410px;top:332px;width:1px;height:20px;background:#3a3a3a"></div>
<div class="a" style="left:1614px;top:332px;width:1px;height:20px;background:#3a3a3a"></div>
<div class="a" style="left:1406px;top:333px;width:4px;height:18px;background:#12843c"></div>
<svg class="a" style="left:1365px;top:336px;" width="15" height="11" viewBox="0 0 15 11"><path d="M0.5 5.5Q7.5 -3 14.5 5.5Q7.5 14 0.5 5.5z" fill="#a8a8a8"/><circle cx="7.5" cy="5.5" r="3.3" fill="#3c3c3c"/><circle cx="8.3" cy="4.6" r="1.1" fill="#e0e0e0"/></svg>
<div class="a" style="left:1452px;top:333px;width:18px;height:18px;background:#fff;border:1px solid #111"></div>
<svg class="a" style="left:1453px;top:334px;" width="16" height="16" viewBox="0 0 16 16"><rect x="0" y="2" width="16" height="12" rx="2" fill="#d3007e"/></svg>
<div class="t" style="left:1475px;top:337px;font-size:11px;color:#e4e4e4">&lt;Pfad&gt;</div>
<svg class="a" style="left:1616px;top:334px;" width="16" height="16" viewBox="0 0 16 16"><circle cx="8" cy="8" r="4.5" fill="none" stroke="#c8c8c8"/></svg>
<div class="a" style="left:1363px;top:353px;width:286px;height:20px;background:#494949"></div>
<div class="a" style="left:1363px;top:373px;width:286px;height:1px;background:#333"></div>
<div class="a" style="left:1383px;top:353px;width:1px;height:20px;background:#3a3a3a"></div>
<div class="a" style="left:1404px;top:353px;width:1px;height:20px;background:#3a3a3a"></div>
<div class="a" style="left:1410px;top:353px;width:1px;height:20px;background:#3a3a3a"></div>
<div class="a" style="left:1614px;top:353px;width:1px;height:20px;background:#3a3a3a"></div>
<div class="a" style="left:1406px;top:354px;width:4px;height:18px;background:#f25a0a"></div>
<svg class="a" style="left:1413px;top:359px;" width="10" height="8" viewBox="0 0 10 8"><path d="M0 0h10L5 7z" fill="#d0d0d0"/></svg>
<div class="a" style="left:1432px;top:354px;width:18px;height:18px;background:#fff;border:1px solid #111"></div>
<svg class="a" style="left:1433px;top:355px;" width="16" height="16" viewBox="0 0 16 16"><path d="M2.5 0v16M13.5 0v16" stroke="#e0a860" stroke-width="1.2"/><path d="M4 3h8" stroke="#a05030" stroke-width="1.5"/><rect x="7" y="7" width="3" height="3" fill="#999"/><path d="M4 14h8" stroke="#888"/></svg>
<div class="t" style="left:1455px;top:358px;font-size:11px;color:#e4e4e4">Vorlage Vorderseite</div>
<svg class="a" style="left:1616px;top:355px;" width="16" height="16" viewBox="0 0 16 16"><circle cx="8" cy="8" r="4.5" fill="none" stroke="#c8c8c8"/></svg>
<div class="a" style="left:1363px;top:374px;width:286px;height:20px;background:#535353"></div>
<div class="a" style="left:1363px;top:394px;width:286px;height:1px;background:#333"></div>
<div class="a" style="left:1383px;top:374px;width:1px;height:20px;background:#3a3a3a"></div>
<div class="a" style="left:1404px;top:374px;width:1px;height:20px;background:#3a3a3a"></div>
<div class="a" style="left:1410px;top:374px;width:1px;height:20px;background:#3a3a3a"></div>
<div class="a" style="left:1614px;top:374px;width:1px;height:20px;background:#3a3a3a"></div>
<div class="a" style="left:1406px;top:375px;width:4px;height:18px;background:#f25a0a"></div>
<svg class="a" style="left:1365px;top:378px;" width="15" height="11" viewBox="0 0 15 11"><path d="M0.5 5.5Q7.5 -3 14.5 5.5Q7.5 14 0.5 5.5z" fill="#666"/><circle cx="7.5" cy="5.5" r="3.3" fill="#505050"/><circle cx="8.3" cy="4.6" r="1.1" fill="#777"/></svg>
<div class="a" style="left:1452px;top:375px;width:18px;height:18px;background:#fff;border:1px solid #111"></div>
<svg class="a" style="left:1453px;top:376px;" width="16" height="16" viewBox="0 0 16 16"><path d="M1 8q2-2 4 0t3 0 3 0 4 0" fill="none" stroke="#904030" stroke-width="1.1"/></svg>
<div class="t" style="left:1475px;top:379px;font-size:11px;color:#e4e4e4">&lt;Pfad&gt;</div>
<svg class="a" style="left:1616px;top:376px;" width="16" height="16" viewBox="0 0 16 16"><circle cx="8" cy="8" r="4.5" fill="none" stroke="#c8c8c8"/></svg>
<div class="a" style="left:1363px;top:395px;width:286px;height:20px;background:#535353"></div>
<div class="a" style="left:1363px;top:415px;width:286px;height:1px;background:#333"></div>
<div class="a" style="left:1383px;top:395px;width:1px;height:20px;background:#3a3a3a"></div>
<div class="a" style="left:1404px;top:395px;width:1px;height:20px;background:#3a3a3a"></div>
<div class="a" style="left:1410px;top:395px;width:1px;height:20px;background:#3a3a3a"></div>
<div class="a" style="left:1614px;top:395px;width:1px;height:20px;background:#3a3a3a"></div>
<div class="a" style="left:1406px;top:396px;width:4px;height:18px;background:#f25a0a"></div>
<svg class="a" style="left:1365px;top:399px;" width="15" height="11" viewBox="0 0 15 11"><path d="M0.5 5.5Q7.5 -3 14.5 5.5Q7.5 14 0.5 5.5z" fill="#666"/><circle cx="7.5" cy="5.5" r="3.3" fill="#505050"/><circle cx="8.3" cy="4.6" r="1.1" fill="#777"/></svg>
<svg class="a" style="left:1435px;top:400px;" width="8" height="10" viewBox="0 0 8 10"><path d="M0 0v9l7-4.5z" fill="#d0d0d0"/></svg>
<div class="a" style="left:1452px;top:396px;width:18px;height:18px;background:#fff;border:1px solid #111"></div>
<svg class="a" style="left:1453px;top:397px;" width="16" height="16" viewBox="0 0 16 16"><path d="M2.5 0v16M13.5 0v16" stroke="#e0a860" stroke-width="1.2"/><path d="M4 3h8" stroke="#a05030" stroke-width="1.5"/><rect x="7" y="7" width="3" height="3" fill="#999"/><path d="M4 14h8" stroke="#888"/></svg>
<div class="t" style="left:1475px;top:400px;font-size:11px;color:#e4e4e4">&lt;Gruppe&gt;</div>
<svg class="a" style="left:1616px;top:397px;" width="16" height="16" viewBox="0 0 16 16"><circle cx="8" cy="8" r="4.5" fill="none" stroke="#c8c8c8"/></svg>
<div class="a" style="left:1363px;top:416px;width:286px;height:20px;background:#494949"></div>
<div class="a" style="left:1363px;top:436px;width:286px;height:1px;background:#333"></div>
<div class="a" style="left:1383px;top:416px;width:1px;height:20px;background:#3a3a3a"></div>
<div class="a" style="left:1404px;top:416px;width:1px;height:20px;background:#3a3a3a"></div>
<div class="a" style="left:1410px;top:416px;width:1px;height:20px;background:#3a3a3a"></div>
<div class="a" style="left:1614px;top:416px;width:1px;height:20px;background:#3a3a3a"></div>
<div class="a" style="left:1406px;top:417px;width:4px;height:18px;background:#f25a0a"></div>
<svg class="a" style="left:1389px;top:420px;" width="10" height="12" viewBox="0 0 10 12"><rect x="1" y="5" width="8" height="6" fill="#aaa"/><path d="M2.5 5V3.5a2.5 2.5 0 0 1 5 0V5" fill="none" stroke="#aaa" stroke-width="1.3"/></svg>
<svg class="a" style="left:1415px;top:421px;" width="8" height="10" viewBox="0 0 8 10"><path d="M0 0v9l7-4.5z" fill="#d0d0d0"/></svg>
<div class="a" style="left:1432px;top:417px;width:18px;height:18px;background:#fff;border:1px solid #111"></div>
<svg class="a" style="left:1433px;top:418px;" width="16" height="16" viewBox="0 0 16 16"><path d="M2.5 0v16M13.5 0v16" stroke="#e0a860" stroke-width="1.2"/><path d="M4 3h8" stroke="#a05030" stroke-width="1.5"/><rect x="7" y="7" width="3" height="3" fill="#999"/><path d="M4 14h8" stroke="#888"/></svg>
<div class="t" style="left:1455px;top:421px;font-size:11px;color:#e4e4e4">Vorlage Rückseite</div>
<svg class="a" style="left:1616px;top:418px;" width="16" height="16" viewBox="0 0 16 16"><circle cx="8" cy="8" r="4.5" fill="none" stroke="#c8c8c8"/></svg>
<svg class="a" style="left:1643px;top:101px;" width="6" height="6" viewBox="0 0 6 6"><path d="M0 0h6v6z" fill="#d8d8d8"/></svg>
<div class="t" style="left:1363px;top:1024px;font-size:11px;color:#e0e0e0">3 Ebenen</div>
<svg class="a" style="left:1511px;top:1022px;" width="14" height="14" viewBox="0 0 14 14"><circle cx="8" cy="5.5" r="4" fill="none" stroke="#c8c8c8" stroke-width="1.3"/><path d="M5 8.5l-4 4" stroke="#c8c8c8" stroke-width="1.5"/></svg>
<svg class="a" style="left:1536px;top:1022px;" width="14" height="14" viewBox="0 0 14 14"><rect x="1" y="1" width="8" height="8" fill="none" stroke="#c8c8c8"/><rect x="4" y="4" width="8" height="8" fill="#999" stroke="#c8c8c8"/></svg>
<svg class="a" style="left:1562px;top:1022px;" width="16" height="14" viewBox="0 0 16 14"><path d="M1 3h6l3 4" fill="none" stroke="#c8c8c8" stroke-width="1.2"/><rect x="8" y="4" width="7" height="8" fill="#aaa"/></svg>
<svg class="a" style="left:1589px;top:1022px;" width="14" height="14" viewBox="0 0 14 14"><path d="M3 4h10v9H6l-3-3z" fill="#bbb"/></svg>
<svg class="a" style="left:1615px;top:1022px;" width="14" height="14" viewBox="0 0 14 14"><path d="M2 3h10M5 3V1h4v2M3 4l1 9h6l1-9" fill="none" stroke="#c8c8c8" stroke-width="1.2"/></svg>
<div class="a" style="left:1658px;top:77px;width:262px;height:17px;background:#303030"></div>
<div class="a" style="left:1658px;top:94px;width:262px;height:1px;background:#2a2a2a"></div>
<div class="a" style="left:1658px;top:78px;width:62px;height:17px;background:#4b4b4b"></div>
<svg class="a" style="left:1662px;top:81px;" width="7" height="11" viewBox="0 0 7 11"><path d="M0.5 4.2L3.5 1.2l3 3M0.5 6.8l3 3 3-3" fill="none" stroke="#d0d0d0" stroke-width="1.1"/></svg>
<div class="t" style="left:1671px;top:81px;font-size:11px;font-weight:bold;letter-spacing:-0.5px;color:#e8e8e8">Farbhilfe</div>
<div class="a" style="left:1720px;top:78px;width:40px;height:16px;background:#3a3a3a;border-right:1px solid #2a2a2a"></div>
<div class="t" style="left:1726px;top:81px;font-size:11px;font-weight:bold;letter-spacing:-0.5px;color:#9a9a9a">Kuler</div>
<svg class="a" style="left:1902px;top:81px;" width="16" height="10" viewBox="0 0 16 10"><path d="M0 3h5l-2.5 3z" fill="#d8d8d8"/><path d="M6 1h10M6 3.5h10M6 6h10M6 8.5h10" stroke="#d8d8d8" stroke-width="1.2"/></svg>
<div class="a" style="left:1664px;top:102px;width:20px;height:20px;background:#fff;border:1px solid #111"></div>
<div class="a" style="left:1667px;top:105px;width:14px;height:14px;border:1px solid #111"></div>
<div class="a" style="left:1690px;top:102px;width:208px;height:23px;background:#e2e2e2;border:1px solid #2a2a2a"></div>
<div class="a" style="left:1692px;top:104px;width:16px;height:18px;background:#fff"></div>
<div class="a" style="left:1708px;top:104px;width:16px;height:18px;background:#b5a9a6"></div>
<div class="a" style="left:1724px;top:104px;width:16px;height:18px;background:#b1b0a0"></div>
<div class="a" style="left:1740px;top:104px;width:16px;height:18px;background:#d2e4d0"></div>
<div class="a" style="left:1756px;top:104px;width:16px;height:18px;background:#9496b6"></div>
<div class="a" style="left:1694px;top:105px;width:12px;height:15px;border:1px solid #111;background:#fff"></div>
<div class="a" style="left:1692px;top:103px;width:80px;height:20px;border:1px solid #111"></div>
<div class="dd" style="left:1897px;top:102px;width:16px;height:23px;"></div>
<div class="t" style="left:1681px;top:132px;font-size:11px;font-weight:bold;color:#dcdcdc;letter-spacing:-0.5px">Schattierungen</div>
<svg class="a" style="left:1786px;top:136px;" width="7" height="5" viewBox="0 0 7 5"><path d="M0 0h6l-3 4z" fill="#d0d0d0"/></svg>
<div class="t" style="left:1847px;top:132px;font-size:11px;font-weight:bold;color:#dcdcdc;letter-spacing:-0.5px">Farbtöne</div>
<div class="a" style="left:1663px;top:150px;width:251px;height:76px;background:#1e1e1e"></div>
<div class="a" style="left:1664px;top:151px;width:25px;height:14px;background:#1b1a20"></div>
<div class="a" style="left:1690px;top:151px;width:26px;height:14px;background:#5b5c5e"></div>
<div class="a" style="left:1717px;top:151px;width:25px;height:14px;background:#9c9d9f"></div>
<div class="a" style="left:1743px;top:151px;width:26px;height:14px;background:#cfd0d3"></div>
<div class="a" style="left:1770px;top:151px;width:25px;height:14px;background:#fefefe"></div>
<div class="a" style="left:1796px;top:151px;width:26px;height:14px;background:#ffffff"></div>
<div class="a" style="left:1823px;top:151px;width:25px;height:14px;background:#fefefe"></div>
<div class="a" style="left:1849px;top:151px;width:26px;height:14px;background:#ffffff"></div>
<div class="a" style="left:1876px;top:151px;width:25px;height:14px;background:#ffffff"></div>
<div class="a" style="left:1902px;top:151px;width:11px;height:14px;background:#3c3c3c"></div>
<div class="a" style="left:1664px;top:166px;width:25px;height:14px;background:#1b1a20"></div>
<div class="a" style="left:1690px;top:166px;width:26px;height:14px;background:#5a5a5c"></div>
<div class="a" style="left:1717px;top:166px;width:25px;height:14px;background:#8f8a8a"></div>
<div class="a" style="left:1743px;top:166px;width:26px;height:14px;background:#a89e9c"></div>
<div class="a" style="left:1770px;top:166px;width:25px;height:14px;background:#b9a6a5"></div>
<div class="a" style="left:1796px;top:166px;width:26px;height:14px;background:#c9b6b4"></div>
<div class="a" style="left:1823px;top:166px;width:25px;height:14px;background:#d6c6c5"></div>
<div class="a" style="left:1849px;top:166px;width:26px;height:14px;background:#e4dcdb"></div>
<div class="a" style="left:1876px;top:166px;width:25px;height:14px;background:#f1eeee"></div>
<div class="a" style="left:1902px;top:166px;width:11px;height:14px;background:#3c3c3c"></div>
<div class="a" style="left:1664px;top:181px;width:25px;height:14px;background:#1b1a20"></div>
<div class="a" style="left:1690px;top:181px;width:26px;height:14px;background:#5c5c5e"></div>
<div class="a" style="left:1717px;top:181px;width:25px;height:14px;background:#8c8c89"></div>
<div class="a" style="left:1743px;top:181px;width:26px;height:14px;background:#a5a29a"></div>
<div class="a" style="left:1770px;top:181px;width:25px;height:14px;background:#b5b2a3"></div>
<div class="a" style="left:1796px;top:181px;width:26px;height:14px;background:#c6c3b4"></div>
<div class="a" style="left:1823px;top:181px;width:25px;height:14px;background:#d7d5c9"></div>
<div class="a" style="left:1849px;top:181px;width:26px;height:14px;background:#e5e4dc"></div>
<div class="a" style="left:1876px;top:181px;width:25px;height:14px;background:#f1f1ef"></div>
<div class="a" style="left:1902px;top:181px;width:11px;height:14px;background:#3c3c3c"></div>
<div class="a" style="left:1664px;top:196px;width:25px;height:14px;background:#1b1a20"></div>
<div class="a" style="left:1690px;top:196px;width:26px;height:14px;background:#5a5d5d"></div>
<div class="a" style="left:1717px;top:196px;width:25px;height:14px;background:#8e9a93"></div>
<div class="a" style="left:1743px;top:196px;width:26px;height:14px;background:#a9c0af"></div>
<div class="a" style="left:1770px;top:196px;width:25px;height:14px;background:#c7dfc6"></div>
<div class="a" style="left:1796px;top:196px;width:26px;height:14px;background:#d3e6d3"></div>
<div class="a" style="left:1823px;top:196px;width:25px;height:14px;background:#e0eee0"></div>
<div class="a" style="left:1849px;top:196px;width:26px;height:14px;background:#ecf5ec"></div>
<div class="a" style="left:1876px;top:196px;width:25px;height:14px;background:#f6faf6"></div>
<div class="a" style="left:1902px;top:196px;width:11px;height:14px;background:#3c3c3c"></div>
<div class="a" style="left:1664px;top:211px;width:25px;height:14px;background:#1b1a20"></div>
<div class="a" style="left:1690px;top:211px;width:26px;height:14px;background:#5a5a62"></div>
<div class="a" style="left:1717px;top:211px;width:25px;height:14px;background:#7d7d90"></div>
<div class="a" style="left:1743px;top:211px;width:26px;height:14px;background:#8d8eae"></div>
<div class="a" style="left:1770px;top:211px;width:25px;height:14px;background:#9293bf"></div>
<div class="a" style="left:1796px;top:211px;width:26px;height:14px;background:#abacce"></div>
<div class="a" style="left:1823px;top:211px;width:25px;height:14px;background:#c4c4dc"></div>
<div class="a" style="left:1849px;top:211px;width:26px;height:14px;background:#dadae8"></div>
<div class="a" style="left:1876px;top:211px;width:25px;height:14px;background:#eeeef4"></div>
<div class="a" style="left:1902px;top:211px;width:11px;height:14px;background:#3c3c3c"></div>
<svg class="a" style="left:1666px;top:230px;" width="20" height="14" viewBox="0 0 20 14"><rect x="1" y="1" width="14" height="10" fill="none" stroke="#c8c8c8"/><path d="M1 5h14M1 8h14M5 1v10M10 1v10" stroke="#c8c8c8"/><path d="M15 11h4l-2 2z" fill="#ccc"/></svg>
<div class="t" style="left:1695px;top:230px;font-size:11px;color:#dcdcdc">Ohne</div>
<svg class="a" style="left:1852px;top:229px;" width="14" height="14" viewBox="0 0 14 14"><circle cx="7" cy="7" r="6" fill="#888" stroke="#ccc"/><circle cx="7" cy="7" r="2.5" fill="#444" stroke="#ccc" stroke-width=".6"/></svg>
<svg class="a" style="left:1878px;top:229px;" width="18" height="14" viewBox="0 0 18 14"><rect x="7" y="2" width="10" height="10" fill="#bbb" stroke="#ddd"/><path d="M1 7h6M4 4v6" stroke="#ddd" stroke-width="1.6"/></svg>
<div class="a" style="left:1658px;top:245px;width:262px;height:3px;background:#262626"></div>
<div class="a" style="left:1658px;top:248px;width:262px;height:17px;background:#303030"></div>
<div class="a" style="left:1658px;top:265px;width:262px;height:1px;background:#2a2a2a"></div>
<div class="a" style="left:1658px;top:249px;width:55px;height:17px;background:#4b4b4b"></div>
<svg class="a" style="left:1662px;top:252px;" width="7" height="11" viewBox="0 0 7 11"><path d="M0.5 4.2L3.5 1.2l3 3M0.5 6.8l3 3 3-3" fill="none" stroke="#d0d0d0" stroke-width="1.1"/></svg>
<div class="t" style="left:1671px;top:252px;font-size:11px;font-weight:bold;letter-spacing:-0.5px;color:#e8e8e8">Verlauf</div>
<svg class="a" style="left:1902px;top:252px;" width="16" height="10" viewBox="0 0 16 10"><path d="M0 3h5l-2.5 3z" fill="#d8d8d8"/><path d="M6 1h10M6 3.5h10M6 6h10M6 8.5h10" stroke="#d8d8d8" stroke-width="1.2"/></svg>
<div class="a" style="left:1664px;top:273px;width:30px;height:30px;background:linear-gradient(90deg,#fff,#222);border:1px solid #111"></div>
<svg class="a" style="left:1697px;top:284px;" width="8" height="5" viewBox="0 0 8 5"><path d="M0 0h7l-3.5 4z" fill="#d0d0d0"/></svg>
<div class="t" style="left:1731px;top:277px;font-size:11px;color:#dcdcdc;font-weight:bold">Art:</div>
<div class="a" style="left:1752px;top:272px;width:160px;height:19px;background:#4e4e4e;border:1px solid #2c2c2c"></div>
<div class="a" style="left:1894px;top:274px;width:1px;height:15px;background:#3a3a3a"></div>
<svg class="a" style="left:1898px;top:278px;" width="10" height="7" viewBox="0 0 10 7"><path d="M0 0h9l-4.5 6z" fill="#cfcfcf"/></svg>
<div class="a" style="left:1664px;top:308px;width:20px;height:20px;background:#fff;border:1px solid #222"></div>
<div class="a" style="left:1673px;top:318px;width:20px;height:19px;background:#fff;border:1px solid #222"></div>
<div class="a" style="left:1677px;top:322px;width:12px;height:11px;border:1px solid #222"></div>
<svg class="a" style="left:1673px;top:318px;" width="20" height="19" viewBox="0 0 20 19"><path d="M1 18L19 1" stroke="#e8001c" stroke-width="2"/></svg>
<div class="a" style="left:1664px;top:308px;width:20px;height:20px;background:#fff;border:1px solid #222"></div>
<div class="t" style="left:1712px;top:302px;font-size:11px;color:#8c8c8c;font-weight:bold">Kontur:</div>
<div class="a" style="left:1752px;top:299px;width:23px;height:20px;background:#4e4e4e;border:1px solid #3a3a3a"></div>
<svg class="a" style="left:1756px;top:302px;" width="14" height="14" viewBox="0 0 14 14"><path d="M2 13V2h11M5 13V5h8" fill="none" stroke="#777"/></svg>
<div class="a" style="left:1775px;top:299px;width:23px;height:20px;background:#4e4e4e;border:1px solid #3a3a3a"></div>
<svg class="a" style="left:1779px;top:302px;" width="14" height="14" viewBox="0 0 14 14"><path d="M2 13V2h11M5 13V5h8" fill="none" stroke="#777"/></svg>
<div class="a" style="left:1798px;top:299px;width:23px;height:20px;background:#4e4e4e;border:1px solid #3a3a3a"></div>
<svg class="a" style="left:1802px;top:302px;" width="14" height="14" viewBox="0 0 14 14"><path d="M2 13V2h11M5 13V5h8" fill="none" stroke="#777"/></svg>
<svg class="a" style="left:1672px;top:349px;" width="16" height="14" viewBox="0 0 16 14"><rect x="1" y="1" width="6" height="4" fill="none" stroke="#777"/><rect x="1" y="8" width="6" height="4" fill="none" stroke="#777"/><rect x="9" y="4" width="6" height="5" fill="#666"/></svg>
<svg class="a" style="left:1733px;top:327px;" width="18" height="14" viewBox="0 0 18 14"><path d="M1 12L13 2M1 12h15" stroke="#6c6c6c" fill="none"/></svg>
<div class="fld" style="left:1752px;top:325px;width:57px;height:19px;background:#6e6e6e;border-color:#3a3a3a"><span style="position:absolute;left:3px;top:3px;"></span></div>
<div class="dd" style="left:1808px;top:325px;width:15px;height:19px;opacity:.45"></div>
<svg class="a" style="left:1733px;top:352px;" width="18" height="16" viewBox="0 0 18 16"><path d="M4 2v12M2 4l2-2 2 2M2 12l2 2 2-2" stroke="#6c6c6c" fill="none"/><ellipse cx="12" cy="8" rx="4" ry="3" fill="none" stroke="#6c6c6c"/></svg>
<div class="fld" style="left:1752px;top:351px;width:57px;height:19px;background:#6e6e6e;border-color:#3a3a3a"><span style="position:absolute;left:3px;top:3px;"></span></div>
<div class="dd" style="left:1808px;top:351px;width:15px;height:19px;opacity:.45"></div>
<div class="a" style="left:1668px;top:384px;width:216px;height:19px;background:linear-gradient(90deg,#fff 0%,#d8d8d8 25%,#8a8a8a 60%,#111 100%);border:1px solid #222"></div>
<svg class="a" style="left:1894px;top:387px;" width="14" height="16" viewBox="0 0 14 16"><path d="M2 3h10M5 3V1h4v2M3 4l1 10h6l1-10" fill="none" stroke="#5c5c5c" stroke-width="1.2"/></svg>
<div class="t" style="left:1702px;top:434px;font-size:11px;color:#8c8c8c;font-weight:bold;letter-spacing:-0.5px">Deckkraft:</div>
<div class="fld" style="left:1752px;top:430px;width:57px;height:19px;background:#6e6e6e;border-color:#3a3a3a"><span style="position:absolute;left:3px;top:3px;"></span></div>
<div class="dd" style="left:1808px;top:430px;width:15px;height:19px;opacity:.45"></div>
<div class="t" style="left:1709px;top:460px;font-size:11px;color:#8c8c8c;font-weight:bold;letter-spacing:-0.5px">Position:</div>
<div class="fld" style="left:1752px;top:456px;width:57px;height:19px;background:#6e6e6e;border-color:#3a3a3a"><span style="position:absolute;left:3px;top:3px;"></span></div>
<div class="dd" style="left:1808px;top:456px;width:15px;height:19px;opacity:.45"></div>
<div class="a" style="left:1658px;top:481px;width:262px;height:3px;background:#262626"></div>
<div class="a" style="left:1658px;top:484px;width:262px;height:17px;background:#303030"></div>
<div class="a" style="left:1658px;top:501px;width:262px;height:1px;background:#2a2a2a"></div>
<div class="a" style="left:1658px;top:485px;width:62px;height:17px;background:#4b4b4b"></div>
<div class="t" style="left:1664px;top:488px;font-size:11px;font-weight:bold;letter-spacing:-0.5px;color:#e8e8e8">Farbfelder</div>
<svg class="a" style="left:1902px;top:488px;" width="16" height="10" viewBox="0 0 16 10"><path d="M0 3h5l-2.5 3z" fill="#d8d8d8"/><path d="M6 1h10M6 3.5h10M6 6h10M6 8.5h10" stroke="#d8d8d8" stroke-width="1.2"/></svg>
<div class="a" style="left:1664px;top:508px;width:19px;height:19px;background:#fff;border:1px solid #222"></div>
<div class="a" style="left:1673px;top:517px;width:19px;height:19px;background:#fff;border:1px solid #222"></div>
<div class="a" style="left:1677px;top:521px;width:11px;height:11px;border:1px solid #222;background:#333"></div>
<svg class="a" style="left:1673px;top:517px;" width="19" height="19" viewBox="0 0 19 19"><path d="M1 18L18 1" stroke="#e8001c" stroke-width="2"/></svg>
<div class="a" style="left:1664px;top:508px;width:19px;height:19px;background:#fff;border:1px solid #222"></div>
<div class="a" style="left:1862px;top:508px;width:51px;height:22px;background:#3a3a3a;border:1px solid #2a2a2a"></div>
<div class="a" style="left:1863px;top:509px;width:24px;height:20px;background:#555"></div>
<svg class="a" style="left:1867px;top:512px;" width="16" height="14" viewBox="0 0 16 14"><path d="M1 2h14M1 6h14M1 10h14M1 13.5h14" stroke="#ddd" stroke-width="1.8"/></svg>
<svg class="a" style="left:1891px;top:512px;" width="16" height="14" viewBox="0 0 16 14"><rect x="1" y="1" width="3.5" height="3" fill="#ddd"/><rect x="6" y="1" width="3.5" height="3" fill="#ddd"/><rect x="11" y="1" width="3.5" height="3" fill="#ddd"/><rect x="1" y="5.5" width="3.5" height="3" fill="#ddd"/><rect x="6" y="5.5" width="3.5" height="3" fill="#ddd"/><rect x="11" y="5.5" width="3.5" height="3" fill="#ddd"/><rect x="1" y="10" width="3.5" height="3" fill="#ddd"/><rect x="6" y="10" width="3.5" height="3" fill="#ddd"/><rect x="11" y="10" width="3.5" height="3" fill="#ddd"/></svg>
<div class="a" style="left:1663px;top:542px;width:251px;height:127px;background:#494949;border:1px solid #2e2e2e"></div>
<div class="a" style="left:1901px;top:543px;width:12px;height:125px;background:#3e3e3e"></div>
<svg class="a" style="left:1902px;top:546px;" width="10" height="8" viewBox="0 0 10 8"><path d="M1 7h8L5 1z" fill="#6a6a6a"/></svg>
<svg class="a" style="left:1902px;top:657px;" width="10" height="8" viewBox="0 0 10 8"><path d="M1 1h8L5 7z" fill="#6a6a6a"/></svg>
<div class="a" style="left:1664px;top:543px;width:13px;height:13px;background:#fff"></div>
<svg class="a" style="left:1664px;top:543px;" width="13" height="13" viewBox="0 0 13 13"><path d="M0 13L13 0" stroke="#e8001c" stroke-width="1.6"/></svg>
<div class="a" style="left:1678px;top:543px;width:13px;height:13px;background:#fff"></div>
<svg class="a" style="left:1678px;top:543px;" width="13" height="13" viewBox="0 0 13 13"><circle cx="6.5" cy="6.5" r="3.5" fill="none" stroke="#222"/><path d="M6.5 0v13M0 6.5h13" stroke="#222" stroke-width=".8"/></svg>
<div class="a" style="left:1692px;top:543px;width:13px;height:13px;background:#fff"></div>
<div class="a" style="left:1694px;top:545px;width:9px;height:9px;border:1.5px solid #111"></div>
<div class="a" style="left:1706px;top:543px;width:13px;height:13px;background:#000"></div>
<div class="a" style="left:1720px;top:543px;width:13px;height:13px;background:#e3001b"></div>
<div class="a" style="left:1734px;top:543px;width:13px;height:13px;background:#ffed00"></div>
<div class="a" style="left:1748px;top:543px;width:13px;height:13px;background:#009640"></div>
<div class="a" style="left:1762px;top:543px;width:13px;height:13px;background:#009fe3"></div>
<div class="a" style="left:1776px;top:543px;width:13px;height:13px;background:#312783"></div>
<div class="a" style="left:1790px;top:543px;width:13px;height:13px;background:#e6007e"></div>
<div class="a" style="left:1804px;top:543px;width:13px;height:13px;background:#be1622"></div>
<div class="a" style="left:1818px;top:543px;width:13px;height:13px;background:#e33b2e"></div>
<div class="a" style="left:1832px;top:543px;width:13px;height:13px;background:#e8632b"></div>
<div class="a" style="left:1846px;top:543px;width:13px;height:13px;background:#f39200"></div>
<div class="a" style="left:1860px;top:543px;width:13px;height:13px;background:#f8b133"></div>
<div class="a" style="left:1874px;top:543px;width:13px;height:13px;background:#fff000"></div>
<div class="a" style="left:1664px;top:557px;width:13px;height:13px;background:#dedc00"></div>
<div class="a" style="left:1678px;top:557px;width:13px;height:13px;background:#a2c30f"></div>
<div class="a" style="left:1692px;top:557px;width:13px;height:13px;background:#60ae31"></div>
<div class="a" style="left:1706px;top:557px;width:13px;height:13px;background:#2c8b34"></div>
<div class="a" style="left:1720px;top:557px;width:13px;height:13px;background:#1e6c35"></div>
<div class="a" style="left:1734px;top:557px;width:13px;height:13px;background:#58ad69"></div>
<div class="a" style="left:1748px;top:557px;width:13px;height:13px;background:#36a59a"></div>
<div class="a" style="left:1762px;top:557px;width:13px;height:13px;background:#60b0e1"></div>
<div class="a" style="left:1776px;top:557px;width:13px;height:13px;background:#3573b9"></div>
<div class="a" style="left:1790px;top:557px;width:13px;height:13px;background:#213b8f"></div>
<div class="a" style="left:1804px;top:557px;width:13px;height:13px;background:#2a2a6b"></div>
<div class="a" style="left:1818px;top:557px;width:13px;height:13px;background:#632c8b"></div>
<div class="a" style="left:1832px;top:557px;width:13px;height:13px;background:#91198d"></div>
<div class="a" style="left:1846px;top:557px;width:13px;height:13px;background:#a6185e"></div>
<div class="a" style="left:1860px;top:557px;width:13px;height:13px;background:#cd0b5c"></div>
<div class="a" style="left:1874px;top:557px;width:13px;height:13px;background:#e5287c"></div>
<div class="a" style="left:1664px;top:571px;width:13px;height:13px;background:#d7c9a3"></div>
<div class="a" style="left:1678px;top:571px;width:13px;height:13px;background:#a89481"></div>
<div class="a" style="left:1692px;top:571px;width:13px;height:13px;background:#817463"></div>
<div class="a" style="left:1706px;top:571px;width:13px;height:13px;background:#6b5c4c"></div>
<div class="a" style="left:1720px;top:571px;width:13px;height:13px;background:#c9a26b"></div>
<div class="a" style="left:1734px;top:571px;width:13px;height:13px;background:#b0844c"></div>
<div class="a" style="left:1748px;top:571px;width:13px;height:13px;background:#96683b"></div>
<div class="a" style="left:1762px;top:571px;width:13px;height:13px;background:#7c5128"></div>
<div class="a" style="left:1776px;top:571px;width:13px;height:13px;background:#5e3c1a"></div>
<div class="a" style="left:1790px;top:571px;width:13px;height:13px;background:#3e2b1e"></div>
<div class="a" style="left:1804px;top:571px;width:13px;height:13px;background:linear-gradient(90deg,#fff,#222)"></div>
<div class="a" style="left:1818px;top:571px;width:13px;height:13px;background:#000"></div>
<div class="a" style="left:1832px;top:571px;width:13px;height:13px;background:radial-gradient(circle,#fff,#777 45%,#000 80%)"></div>
<div class="a" style="left:1846px;top:571px;width:13px;height:13px;background:#000"></div>
<div class="a" style="left:1860px;top:571px;width:13px;height:13px;background:linear-gradient(90deg,#c08040,#f0d0a0,#9070a0)"></div>
<div class="a" style="left:1874px;top:571px;width:13px;height:13px;background:radial-gradient(circle,#fff0c0,#a06030 50%,#402010 90%)"></div>
<div class="a" style="left:1664px;top:585px;width:13px;height:13px;background:repeating-linear-gradient(45deg,#e8501c 0 2px,#b23a8a 2px 4px)"></div>
<div class="a" style="left:1678px;top:585px;width:13px;height:13px;background:#e78b1a"></div>
<svg class="a" style="left:1678px;top:585px;" width="13" height="13" viewBox="0 0 13 13"><path d="M4 13L13 4v9z" fill="#fff"/><path d="M4 13L13 4" stroke="#111"/><circle cx="10" cy="10.5" r="1.2" fill="#111"/></svg>
<div class="a" style="left:1692px;top:585px;width:13px;height:13px;background:#a8aba6"></div>
<svg class="a" style="left:1692px;top:585px;" width="13" height="13" viewBox="0 0 13 13"><path d="M4 13L13 4v9z" fill="#fff"/><path d="M4 13L13 4" stroke="#111"/><circle cx="10" cy="10.5" r="1.2" fill="#111"/></svg>
<div class="a" style="left:1706px;top:585px;width:13px;height:13px;background:#3a3d36"></div>
<svg class="a" style="left:1706px;top:585px;" width="13" height="13" viewBox="0 0 13 13"><path d="M4 13L13 4v9z" fill="#fff"/><path d="M4 13L13 4" stroke="#111"/><circle cx="10" cy="10.5" r="1.2" fill="#111"/></svg>
<div class="a" style="left:1720px;top:585px;width:13px;height:13px;background:#a8aba6"></div>
<svg class="a" style="left:1720px;top:585px;" width="13" height="13" viewBox="0 0 13 13"><path d="M4 13L13 4v9z" fill="#fff"/><path d="M4 13L13 4" stroke="#111"/><circle cx="10" cy="10.5" r="1.2" fill="#111"/></svg>
<div class="a" style="left:1734px;top:585px;width:13px;height:13px;background:#000"></div>
<div class="a" style="left:1748px;top:585px;width:13px;height:13px;background:#3c3c3b"></div>
<div class="a" style="left:1762px;top:585px;width:13px;height:13px;background:#575756"></div>
<div class="a" style="left:1776px;top:585px;width:13px;height:13px;background:#706f6f"></div>
<div class="a" style="left:1790px;top:585px;width:13px;height:13px;background:#878787"></div>
<div class="a" style="left:1804px;top:585px;width:13px;height:13px;background:#9d9d9c"></div>
<div class="a" style="left:1818px;top:585px;width:13px;height:13px;background:#b2b2b2"></div>
<div class="a" style="left:1832px;top:585px;width:13px;height:13px;background:#c6c6c6"></div>
<div class="a" style="left:1846px;top:585px;width:13px;height:13px;background:#dadada"></div>
<div class="a" style="left:1860px;top:585px;width:13px;height:13px;background:#ededed"></div>
<div class="a" style="left:1874px;top:585px;width:13px;height:13px;background:#f6f6f6"></div>
<div class="a" style="left:1664px;top:599px;width:13px;height:13px;background:#e2001a"></div>
<div class="a" style="left:1678px;top:599px;width:13px;height:13px;background:#e95e0f"></div>
<div class="a" style="left:1692px;top:599px;width:13px;height:13px;background:#ffdd00"></div>
<div class="a" style="left:1706px;top:599px;width:13px;height:13px;background:#3aa935"></div>
<div class="a" style="left:1720px;top:599px;width:13px;height:13px;background:#183f94"></div>
<div class="a" style="left:1734px;top:599px;width:13px;height:13px;background:#7b3091"></div>
<svg class="a" style="left:1666px;top:673px;" width="18" height="16" viewBox="0 0 18 16"><path d="M1 1v12M4 1v12M7 1l4 12" stroke="#c8c8c8" stroke-width="1.6"/><path d="M11 11h5l-2.5 3z" fill="#ccc"/></svg>
<svg class="a" style="left:1695px;top:673px;" width="18" height="16" viewBox="0 0 18 16"><circle cx="4" cy="7" r="2.5" fill="none" stroke="#c8c8c8" stroke-width="1.3"/><circle cx="10" cy="2.5" r="2" fill="#c8c8c8"/><circle cx="10" cy="11.5" r="2" fill="#c8c8c8"/><path d="M5 6l4-3M5 8l4 3" stroke="#c8c8c8"/></svg>
<svg class="a" style="left:1773px;top:673px;" width="18" height="16" viewBox="0 0 18 16"><rect x="1" y="1" width="11" height="11" fill="none" stroke="#c8c8c8"/><path d="M1 5h11M1 8.5h11M5 1v11M8.5 1v11" stroke="#c8c8c8"/><path d="M12 12h5l-2.5 3z" fill="#ccc"/></svg>
<svg class="a" style="left:1800px;top:673px;" width="18" height="16" viewBox="0 0 18 16"><rect x="1" y="1" width="11" height="12" fill="none" stroke="#c8c8c8"/><path d="M3 4h7M3 7h7M3 10h7" stroke="#c8c8c8"/></svg>
<svg class="a" style="left:1826px;top:673px;" width="18" height="16" viewBox="0 0 18 16"><path d="M1 4h5l1.5 2H14v8H1z" fill="#bdbdbd"/></svg>
<svg class="a" style="left:1852px;top:673px;" width="18" height="16" viewBox="0 0 18 16"><path d="M3 3h10v10H6l-3-3z" fill="#bbb"/></svg>
<svg class="a" style="left:1878px;top:673px;" width="18" height="16" viewBox="0 0 18 16"><path d="M2 3h10M5 3V1h4v2M3 4l1 10h6l1-10" fill="none" stroke="#c8c8c8" stroke-width="1.2"/></svg>
<div class="a" style="left:1658px;top:688px;width:262px;height:3px;background:#262626"></div>
<div class="a" style="left:1658px;top:691px;width:262px;height:17px;background:#303030"></div>
<div class="a" style="left:1658px;top:708px;width:262px;height:1px;background:#2a2a2a"></div>
<div class="a" style="left:1658px;top:692px;width:53px;height:17px;background:#4b4b4b"></div>
<svg class="a" style="left:1662px;top:695px;" width="7" height="11" viewBox="0 0 7 11"><path d="M0.5 4.2L3.5 1.2l3 3M0.5 6.8l3 3 3-3" fill="none" stroke="#d0d0d0" stroke-width="1.1"/></svg>
<div class="t" style="left:1671px;top:695px;font-size:11px;font-weight:bold;letter-spacing:-0.5px;color:#e8e8e8">Farbe</div>
<svg class="a" style="left:1902px;top:695px;" width="16" height="10" viewBox="0 0 16 10"><path d="M0 3h5l-2.5 3z" fill="#d8d8d8"/><path d="M6 1h10M6 3.5h10M6 6h10M6 8.5h10" stroke="#d8d8d8" stroke-width="1.2"/></svg>
<svg class="a" style="left:1664px;top:714px;" width="14" height="14" viewBox="0 0 14 14"><rect x="4.5" y="4.5" width="8" height="8" fill="#222" stroke="#ddd"/><rect x=".5" y=".5" width="8" height="8" fill="#fff" stroke="#333"/><rect x="2.5" y="2.5" width="4" height="4" fill="#222"/></svg>
<svg class="a" style="left:1684px;top:714px;" width="12" height="12" viewBox="0 0 12 12"><path d="M2 4h5a3 3 0 0 1 3 3v3" fill="none" stroke="#d8d8d8" stroke-width="1.2"/><path d="M0 4l2.5-3v6zM10 12l-2.5-3h5z" fill="#d8d8d8"/></svg>
<div class="a" style="left:1674px;top:743px;width:20px;height:20px;background:#fff;border:1px solid #222"></div>
<svg class="a" style="left:1674px;top:743px;" width="20" height="20" viewBox="0 0 20 20"><path d="M1 19L19 1" stroke="#e8001c" stroke-width="2"/></svg>
<div class="a" style="left:1677px;top:746px;width:14px;height:14px;border:1px solid #222"></div>
<div class="a" style="left:1664px;top:733px;width:20px;height:20px;background:#fff;border:1px solid #222"></div>
<div class="t" style="left:1710px;top:722px;font-size:11px;color:#dcdcdc">C</div>
<div class="a" style="left:1728px;top:723px;width:103px;height:6px;background:linear-gradient(90deg,#fff,#8fd6f2 30%,#00a0e3);border:1px solid #222"></div>
<svg class="a" style="left:1723px;top:728px;" width="11" height="8" viewBox="0 0 11 8"><path d="M5.5 0L10 5v3H1V5z" fill="#d8d8d8" stroke="#333" stroke-width=".6"/></svg>
<div class="fld" style="left:1838px;top:718px;width:34px;height:18px;padding-left:0"><span style="position:absolute;left:3px;top:3px;">0</span></div>
<div class="t" style="left:1874px;top:722px;font-size:11px;color:#dcdcdc">%</div>
<div class="t" style="left:1710px;top:747px;font-size:11px;color:#dcdcdc">M</div>
<div class="a" style="left:1728px;top:748px;width:103px;height:6px;background:linear-gradient(90deg,#fff,#f29fc8 30%,#e6007e);border:1px solid #222"></div>
<svg class="a" style="left:1723px;top:753px;" width="11" height="8" viewBox="0 0 11 8"><path d="M5.5 0L10 5v3H1V5z" fill="#d8d8d8" stroke="#333" stroke-width=".6"/></svg>
<div class="fld" style="left:1838px;top:743px;width:34px;height:18px;padding-left:0"><span style="position:absolute;left:3px;top:3px;">0</span></div>
<div class="t" style="left:1874px;top:747px;font-size:11px;color:#dcdcdc">%</div>
<div class="t" style="left:1710px;top:772px;font-size:11px;color:#dcdcdc">Y</div>
<div class="a" style="left:1728px;top:773px;width:103px;height:6px;background:linear-gradient(90deg,#fff,#fff59a 30%,#ffed00);border:1px solid #222"></div>
<svg class="a" style="left:1723px;top:778px;" width="11" height="8" viewBox="0 0 11 8"><path d="M5.5 0L10 5v3H1V5z" fill="#d8d8d8" stroke="#333" stroke-width=".6"/></svg>
<div class="fld" style="left:1838px;top:768px;width:34px;height:18px;padding-left:0"><span style="position:absolute;left:3px;top:3px;">0</span></div>
<div class="t" style="left:1874px;top:772px;font-size:11px;color:#dcdcdc">%</div>
<div class="t" style="left:1710px;top:797px;font-size:11px;color:#dcdcdc">K</div>
<div class="a" style="left:1728px;top:798px;width:103px;height:6px;background:linear-gradient(90deg,#fff,#aaa 30%,#111);border:1px solid #222"></div>
<svg class="a" style="left:1723px;top:803px;" width="11" height="8" viewBox="0 0 11 8"><path d="M5.5 0L10 5v3H1V5z" fill="#d8d8d8" stroke="#333" stroke-width=".6"/></svg>
<div class="fld" style="left:1838px;top:793px;width:34px;height:18px;padding-left:0"><span style="position:absolute;left:3px;top:3px;">0</span></div>
<div class="t" style="left:1874px;top:797px;font-size:11px;color:#dcdcdc">%</div>
<div class="a" style="left:1664px;top:822px;width:13px;height:13px;background:#fff"></div>
<svg class="a" style="left:1664px;top:822px;" width="13" height="13" viewBox="0 0 13 13"><path d="M0 13L13 0" stroke="#e8001c" stroke-width="1.6"/></svg>
<div class="a" style="left:1677px;top:822px;width:13px;height:13px;background:#000"></div>
<div class="a" style="left:1690px;top:822px;width:13px;height:13px;background:#fff"></div>
<div class="a" style="left:1664px;top:846px;width:239px;height:23px;background:linear-gradient(180deg,rgba(255,255,255,.85) 0%,rgba(255,255,255,0) 45%,rgba(0,0,0,0) 55%,rgba(0,0,0,.95) 100%),linear-gradient(90deg,#e8001c 0%,#f39200 9%,#ffed00 16%,#a8c010 27%,#5aaa20 36%,#30a070 45%,#60c8f0 53%,#3050a8 63%,#2a2a80 70%,#7a2a8a 80%,#e6007e 90%,#e8001c 100%);border:1px solid #222"></div>
<div class="a" style="left:1658px;top:875px;width:262px;height:3px;background:#262626"></div>
<div class="a" style="left:1658px;top:878px;width:262px;height:17px;background:#303030"></div>
<div class="a" style="left:1658px;top:895px;width:262px;height:1px;background:#2a2a2a"></div>
<div class="a" style="left:1658px;top:879px;width:57px;height:17px;background:#4b4b4b"></div>
<div class="t" style="left:1664px;top:882px;font-size:11px;font-weight:bold;letter-spacing:-0.5px;color:#e8e8e8">Aussehen</div>
<svg class="a" style="left:1902px;top:882px;" width="16" height="10" viewBox="0 0 16 10"><path d="M0 3h5l-2.5 3z" fill="#d8d8d8"/><path d="M6 1h10M6 3.5h10M6 6h10M6 8.5h10" stroke="#d8d8d8" stroke-width="1.2"/></svg>
<div class="a" style="left:1663px;top:900px;width:252px;height:99px;background:#494949;border:1px solid #2e2e2e"></div>
<div class="a" style="left:1664px;top:901px;width:250px;height:24px;background:#4f4f4f"></div>
<div class="a" style="left:1664px;top:925px;width:250px;height:1px;background:#2e2e2e"></div>
<div class="a" style="left:1664px;top:926px;width:250px;height:24px;background:#4f4f4f"></div>
<div class="a" style="left:1664px;top:950px;width:250px;height:1px;background:#2e2e2e"></div>
<div class="a" style="left:1664px;top:951px;width:250px;height:24px;background:#4f4f4f"></div>
<div class="a" style="left:1664px;top:975px;width:250px;height:1px;background:#2e2e2e"></div>
<div class="a" style="left:1664px;top:976px;width:250px;height:24px;background:#4b4b4b"></div>
<div class="a" style="left:1664px;top:1000px;width:250px;height:1px;background:#2e2e2e"></div>
<div class="a" style="left:1666px;top:904px;width:19px;height:19px;background:#fff;border:1px solid #222"></div>
<div class="t" style="left:1711px;top:908px;font-size:11px;color:#e8e8e8;font-weight:bold">Schrift</div>
<div class="t" style="left:1711px;top:933px;font-size:11px;color:#e0e0e0">Zeichen</div>
<svg class="a" style="left:1669px;top:958px;" width="15" height="11" viewBox="0 0 15 11"><path d="M0.5 5.5Q7.5 -3 14.5 5.5Q7.5 14 0.5 5.5z" fill="#666"/><circle cx="7.5" cy="5.5" r="3.3" fill="#505050"/><circle cx="8.3" cy="4.6" r="1.1" fill="#777"/></svg>
<div class="a" style="left:1689px;top:951px;width:1px;height:24px;background:#2e2e2e"></div>
<div class="t" style="left:1711px;top:958px;color:#ee9232;font-size:11px"><span class="ul">Deckkraft:</span></div>
<div class="t" style="left:1789px;top:958px;font-size:11px;color:#e0e0e0">Standard</div>
<svg class="a" style="left:1668px;top:1002px;" width="14" height="14" viewBox="0 0 14 14"><rect x="1" y="1" width="11" height="11" fill="none" stroke="#c8c8c8" stroke-width="1.6"/></svg>
<svg class="a" style="left:1694px;top:1002px;" width="14" height="14" viewBox="0 0 14 14"><rect x="1" y="1" width="11" height="11" fill="none" stroke="#c8c8c8"/><rect x="3.5" y="3.5" width="6" height="6" fill="#c8c8c8"/></svg>
<div class="t" style="left:1720px;top:1000px;font-family:'Liberation Serif',serif;font-size:15px;color:#c8c8c8"><i>fx</i></div>
<svg class="a" style="left:1732px;top:1008px;" width="6" height="4" viewBox="0 0 6 4"><path d="M0 0h6l-3 3z" fill="#ccc"/></svg>
<svg class="a" style="left:1826px;top:1002px;" width="14" height="14" viewBox="0 0 14 14"><circle cx="7" cy="7" r="5.5" fill="none" stroke="#666" stroke-width="1.5"/><path d="M3 3l8 8" stroke="#666" stroke-width="1.5"/></svg>
<svg class="a" style="left:1852px;top:1002px;" width="14" height="14" viewBox="0 0 14 14"><path d="M3 3h10v10H6l-3-3z" fill="#5f5f5f"/></svg>
<svg class="a" style="left:1878px;top:1002px;" width="14" height="14" viewBox="0 0 14 14"><path d="M2 3h10M5 3V1h4v2M3 4l1 10h6l1-10" fill="none" stroke="#5f5f5f" stroke-width="1.2"/></svg>
<div class="a" style="left:1658px;top:1018px;width:262px;height:3px;background:#262626"></div>
<div class="a" style="left:1658px;top:1021px;width:262px;height:17px;background:#303030"></div>
<div class="a" style="left:1658px;top:1038px;width:262px;height:1px;background:#2a2a2a"></div>
<div class="a" style="left:1658px;top:1022px;width:58px;height:17px;background:#4b4b4b"></div>
<svg class="a" style="left:1662px;top:1025px;" width="7" height="11" viewBox="0 0 7 11"><path d="M0.5 4.2L3.5 1.2l3 3M0.5 6.8l3 3 3-3" fill="none" stroke="#d0d0d0" stroke-width="1.1"/></svg>
<div class="t" style="left:1671px;top:1025px;font-size:11px;font-weight:bold;letter-spacing:-0.5px;color:#e8e8e8">Zeichen</div>
<div class="a" style="left:1716px;top:1022px;width:45px;height:16px;background:#3a3a3a;border-right:1px solid #2a2a2a"></div>
<div class="t" style="left:1722px;top:1025px;font-size:11px;font-weight:bold;letter-spacing:-0.5px;color:#9a9a9a">Absatz</div>
<div class="a" style="left:1761px;top:1022px;width:62px;height:16px;background:#3a3a3a;border-right:1px solid #2a2a2a"></div>
<div class="t" style="left:1767px;top:1025px;font-size:11px;font-weight:bold;letter-spacing:-0.5px;color:#9a9a9a">OpenType</div>
<svg class="a" style="left:1902px;top:1025px;" width="16" height="10" viewBox="0 0 16 10"><path d="M0 3h5l-2.5 3z" fill="#d8d8d8"/><path d="M6 1h10M6 3.5h10M6 6h10M6 8.5h10" stroke="#d8d8d8" stroke-width="1.2"/></svg></body></html>
